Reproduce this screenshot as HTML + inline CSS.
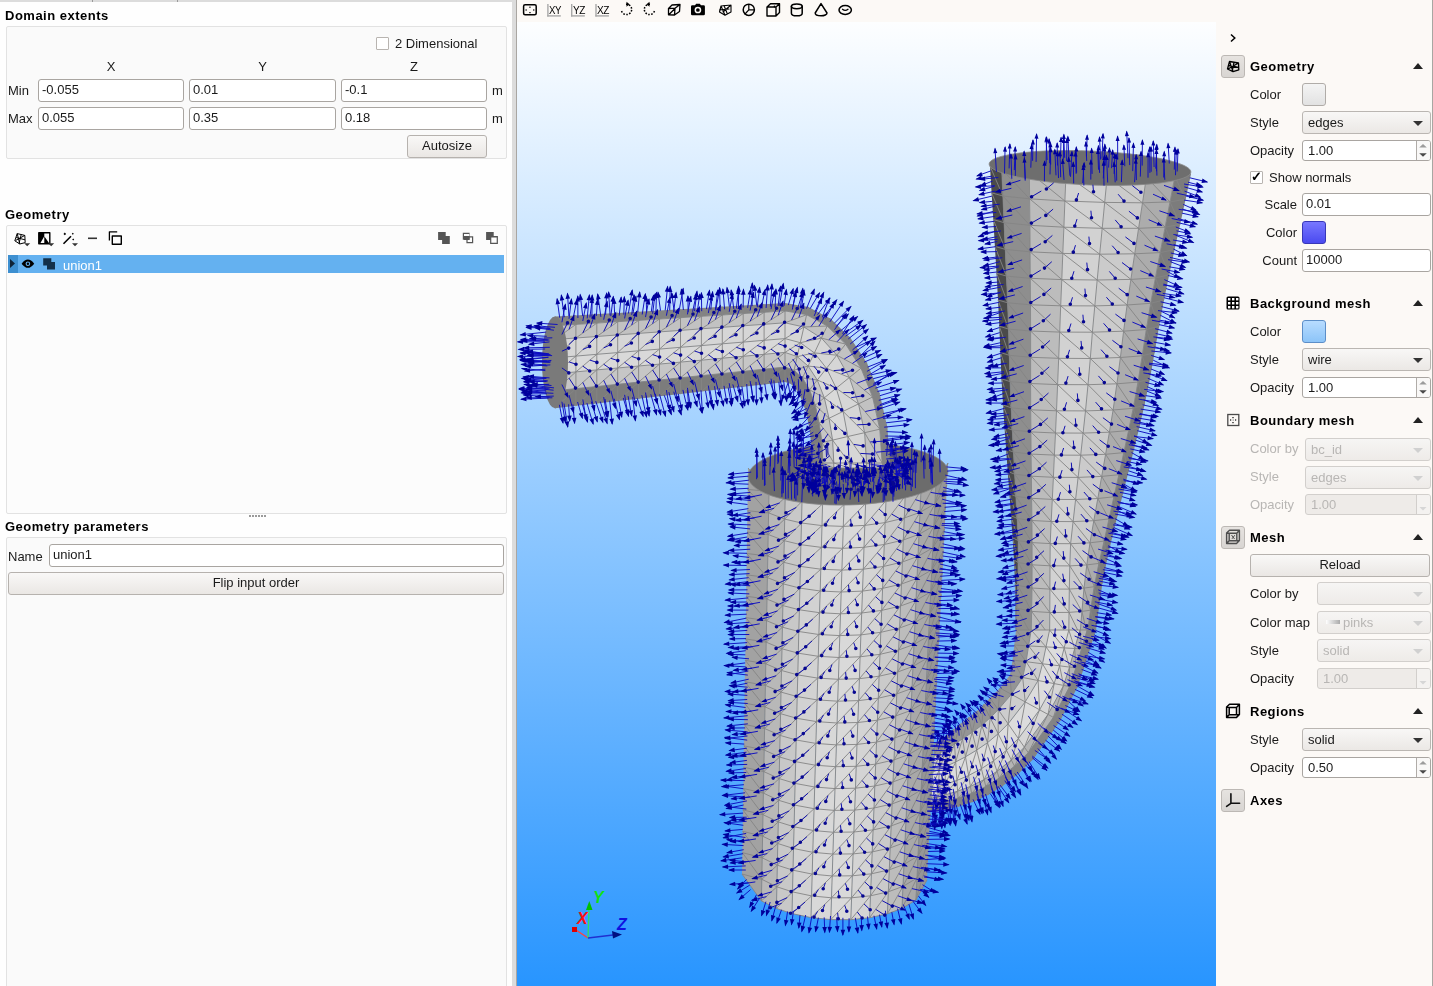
<!DOCTYPE html>
<html><head><meta charset="utf-8"><style>*{margin:0;padding:0;box-sizing:border-box}
html,body{width:1433px;height:986px;overflow:hidden;background:#fefefe;font-family:"Liberation Sans",sans-serif;font-size:13px;color:#1a1a1a}
#left{position:absolute;left:0;top:0;width:512px;height:986px;background:#fefefe}
.tabstrip{position:absolute;left:0;top:0;width:512px;height:2px;background:#dcdcdc}
.tabdiv{position:absolute;top:0;width:1px;height:2px;background:#9a9a9a}
#splitter{position:absolute;left:512px;top:0;width:4px;height:986px;background:#dcdcdc;border-right:1px solid #a9a6a2;width:5px}
.t{position:absolute;white-space:pre;line-height:15px;font-size:13px}
.bold{font-weight:700;letter-spacing:0.5px;color:#000}
.c{text-align:center}
.r{text-align:right}
.gbox{position:absolute;border:1px solid #e2e2e2;border-radius:2px;background:#fafafa}
.inp{position:absolute;border:1px solid #a9a5a1;border-radius:3px;background:#fff;padding:2px 0 0 3px;line-height:15px;white-space:pre;height:23px}
.btn{position:absolute;border:1px solid #b6b2ae;border-radius:3px;background:linear-gradient(#f9f8f7,#eae7e4);text-align:center;line-height:19px;white-space:pre;height:23px}
.chk{position:absolute;width:13px;height:13px;border:1px solid #b8b4b0;border-radius:1px;background:#fff}
.tick{position:absolute;left:0px;top:-3px;font-size:13px;font-weight:700;color:#000}
.selrow{position:absolute;background:#64b1f0}
.selexp{position:absolute;background:#3d8fd0}
.splitdots{position:absolute;width:18px;height:1px;border-top:1px dotted #b0b0b0}
#toolbar{position:absolute;left:517px;top:0;width:699px;height:22px;background:#fcf9f6}
#view{position:absolute;left:517px;top:22px;width:699px;height:964px;background:linear-gradient(#fdfeff,#2895ff);overflow:hidden}
#rightbg{position:absolute;left:1216px;top:0;width:217px;height:986px;background:#fcf9f6}
#right .t,#right .bold{}
.chev{position:absolute;font-size:16px;line-height:16px;color:#222}
.ibtn{position:absolute;width:24px;height:23px;border:1px solid #bcb8b4;border-radius:3px;background:linear-gradient(#e6e3e0,#d8d5d2)}
.tri{position:absolute;width:0;height:0;border-left:5px solid transparent;border-right:5px solid transparent;border-bottom:6px solid #222}
.swatch{position:absolute;width:24px;height:23px;border:1px solid #b0aca8;border-radius:3px}
.combo{position:absolute;height:23px;border:1px solid #bab6b2;border-radius:3px;background:linear-gradient(#f8f7f6,#ebe8e5);padding:2px 0 0 5px;line-height:17px;white-space:pre}
.combo:after{content:"";position:absolute;right:7px;top:9px;border-left:5px solid transparent;border-right:5px solid transparent;border-top:5px solid #333}
.spin{position:absolute;height:21px;border:1px solid #a9a5a1;border-radius:3px;background:#fff;padding:2px 0 0 5px;line-height:15px;white-space:pre}
.spin:before{content:"";position:absolute;right:13px;top:0;width:1px;height:19px;background:#b0aca8}
.spin:after{content:"";position:absolute;right:0;top:0;width:13px;height:19px;background:#f9f8f7;border-radius:0 2px 2px 0}
.dis{color:#b8b6b4}
.combo.dis{border-color:#d2cfcc;background:linear-gradient(#f6f5f4,#eeebe8)}
.combo.dis:after{border-top-color:#d0d0d0}
.spin.dis{background:#eeebe8;border-color:#d2cfcc}
.spin.dis:after{background:#f4f2f0}
.spin.dis:before{background:#d2cfcc}
.t.dis{color:#b8b6b4}
.cmap{display:inline-block;width:14px;height:4px;background:linear-gradient(90deg,#fff,#aaa);margin:0 3px 3px 3px;vertical-align:middle}
.rline{position:absolute;left:1216px;top:0;width:1px;height:986px}
#rborder{position:absolute;left:1432px;top:0;width:1px;height:986px;background:#a8a6a2}

#left,#rightc{will-change:transform}
#rightc{position:absolute;left:0;top:0;width:0;height:0}
</style></head>
<body>
<div id="left">
  <div class="tabstrip"></div>
  <div class="tabdiv" style="left:92px"></div>
  <div class="tabdiv" style="left:177px"></div>
  <div class="bold t" style="left:5px;top:8px">Domain extents</div>
  <div class="gbox" style="left:6px;top:26px;width:501px;height:133px"></div>
  <div class="chk" style="left:376px;top:37px"></div>
  <div class="t" style="left:395px;top:36px">2 Dimensional</div>
  <div class="t c" style="left:38px;top:59px;width:146px">X</div>
  <div class="t c" style="left:189px;top:59px;width:147px">Y</div>
  <div class="t c" style="left:341px;top:59px;width:146px">Z</div>
  <div class="t" style="left:8px;top:83px">Min</div>
  <div class="t" style="left:8px;top:111px">Max</div>
  <div class="inp" style="left:38px;top:79px;width:146px;">-0.055</div>
  <div class="inp" style="left:189px;top:79px;width:147px;">0.01</div>
  <div class="inp" style="left:341px;top:79px;width:146px;">-0.1</div>
  <div class="inp" style="left:38px;top:107px;width:146px;">0.055</div>
  <div class="inp" style="left:189px;top:107px;width:147px;">0.35</div>
  <div class="inp" style="left:341px;top:107px;width:146px;">0.18</div>
  <div class="t" style="left:492px;top:83px">m</div>
  <div class="t" style="left:492px;top:111px">m</div>
  <div class="btn" style="left:407px;top:135px;width:80px;">Autosize</div>

  <div class="bold t" style="left:5px;top:207px">Geometry</div>
  <div class="gbox" style="left:6px;top:225px;width:501px;height:289px;background:#fcfcfc"></div>
  <div id="geoicons"></div>
  <div class="selrow" style="left:8px;top:255px;width:496px;height:18px"></div>
  <div class="selexp" style="left:8px;top:255px;width:10px;height:18px"></div>
  <div class="t" style="left:63px;top:258px;color:#fff">union1</div>
  <div style="position:absolute;left:249px;top:515px;width:1.5px;height:1.5px;background:#9a9a9a"></div><div style="position:absolute;left:252px;top:515px;width:1.5px;height:1.5px;background:#9a9a9a"></div><div style="position:absolute;left:255px;top:515px;width:1.5px;height:1.5px;background:#9a9a9a"></div><div style="position:absolute;left:258px;top:515px;width:1.5px;height:1.5px;background:#9a9a9a"></div><div style="position:absolute;left:261px;top:515px;width:1.5px;height:1.5px;background:#9a9a9a"></div><div style="position:absolute;left:264px;top:515px;width:1.5px;height:1.5px;background:#9a9a9a"></div>

  <div class="bold t" style="left:5px;top:519px">Geometry parameters</div>
  <div class="gbox" style="left:6px;top:537px;width:501px;height:460px"></div>
  <div class="t" style="left:8px;top:549px">Name</div>
  <div class="inp" style="left:49px;top:544px;width:455px;">union1</div>
  <div class="btn" style="left:8px;top:572px;width:496px;">Flip input order</div>
</div>
<div id="splitter"></div>

<div id="toolbar"></div>
<svg style="position:absolute;left:0;top:0" width="1433" height="22" viewBox="0 0 1433 22">
<g fill="none" stroke="#000" stroke-width="1.5" stroke-linejoin="round" stroke-linecap="round">
  <rect x="523.6" y="4.8" width="12.6" height="10" rx="1.5"/>
  <!-- rotate ccw -->
  <path d="M626 4.2 A5.2 5.2 0 1 1 621.3 10" stroke-dasharray="1.6 1.4" stroke-linecap="butt"/>
  <path d="M650 4.2 A5.2 5.2 0 1 0 654.7 10" stroke-dasharray="1.6 1.4" stroke-linecap="butt"/>
  <!-- perspective cube -->
  <path d="M668.5 8.5 L672 5 L680 4.5 L679.5 11.5 L674.5 15 L668.5 14.8 Z M668.5 8.5 L675 8.2 L680 4.5 M675 8.2 L674.5 15 M669 14.5 L675 8.5" stroke-width="1.3"/>
  <!-- wire poly -->
  <path d="M721 6 L731 5 L731 12 L725 15.2 L719.5 12 Z M721 6 L725 15.2 M731 5 L723 12 M719.5 10 L729 9 M724 5.5 L727 13" stroke-width="1.1"/>
  <!-- sphere -->
  <circle cx="748.8" cy="9.8" r="5.6"/>
  <path d="M748.8 4.5 L748.8 9.8 L754 9.8 M748.8 9.8 L745 14" stroke-width="1.2"/>
  <!-- box -->
  <path d="M767 7 L770.5 3.8 L779.5 3.8 L779.5 12.5 L776 16 L767 16 Z M767 7 L776 7 L779.5 3.8 M776 7 L776 16" stroke-width="1.4"/>
  <!-- cylinder -->
  <ellipse cx="796.8" cy="6.3" rx="5.4" ry="2.4"/>
  <path d="M791.4 6.3 L791.4 13.2 A5.4 2.6 0 0 0 802.2 13.2 L802.2 6.3"/>
  <!-- cone -->
  <path d="M821 3.6 L815.2 13 A5.9 2.8 0 0 0 827 13 Z" />
  <!-- torus -->
  <ellipse cx="845.2" cy="10" rx="6.2" ry="4.4"/>
  <path d="M842.5 9.3 Q845.2 11.6 848 9.3" stroke-width="1.3"/>
</g>
<g fill="#000">
  <rect x="529.3" y="6.6" width="1.3" height="1.2"/><rect x="529.3" y="12" width="1.3" height="1.2"/>
  <rect x="525.6" y="9.2" width="1" height="1.6"/><rect x="533.3" y="9.2" width="1" height="1.6"/>
  <path d="M626.5 1.8 L629.5 4.3 L626.5 6.8 Z"/>
  <path d="M649.5 1.8 L646.5 4.3 L649.5 6.8 Z"/>
  <path d="M691 6.5 Q691 5.2 692.3 5.2 L695 5.2 L696.2 3.8 L699.8 3.8 L701 5.2 L703.6 5.2 Q704.9 5.2 704.9 6.5 L704.9 14 Q704.9 15.2 703.6 15.2 L692.3 15.2 Q691 15.2 691 14 Z"/>
  <circle cx="774.5" cy="6.5" r="0.9"/>
</g>
<circle cx="697.9" cy="10" r="2.6" fill="none" stroke="#fcf9f6" stroke-width="1.5"/>
<g fill="#a8a8a8">
  <rect x="547.2" y="4" width="1.4" height="12.5"/><rect x="547.2" y="15.2" width="13.6" height="1.4"/>
  <rect x="571" y="4" width="1.4" height="12.5"/><rect x="571" y="15.2" width="13.8" height="1.4"/>
  <rect x="595.3" y="4" width="1.4" height="12.5"/><rect x="595.3" y="15.2" width="13.6" height="1.4"/>
</g>
<g font-family="Liberation Sans" font-size="11" fill="#000" style="letter-spacing:-0.6px">
  <text x="549" y="13.8" textLength="11.8" lengthAdjust="spacingAndGlyphs">XY</text>
  <text x="573" y="13.8" textLength="11.8" lengthAdjust="spacingAndGlyphs">YZ</text>
  <text x="597" y="13.8" textLength="11.8" lengthAdjust="spacingAndGlyphs">XZ</text>
</g>
</svg>

<div id="view"><svg width="699" height="964" viewBox="517 22 699 964" style="position:absolute;left:0;top:0"><path d="M990,166 991.6,192.8 993.3,219.6 994.9,246.4 996.5,273.2 998,300 999.3,326.2 1000.4,352.5 1001.5,378.8 1003,405 1004.5,427.2 1006.1,449.3 1007.7,471.4 1009.4,493.6 1011,515.7 1012.6,537.8 1014,560 1015.1,583.3 1015.6,606.7 1016,630 1016,630 1016.9,608.1 1017.8,585.4 1018.2,562.5 1018.3,540.6 1017.2,518.5 1015.9,496.4 1014.7,474.2 1013.5,452.1 1012.3,430 1011.2,407.8 1010.1,381.6 1009.3,355.3 1008.6,329.1 1007.6,302.8 1006.5,276.1 1005.3,249.4 1004.1,222.7 1002.9,196 1001.7,169.3Z" fill="#4a4a4a"/><path d="M1001.7,169.3 1002.9,196 1004.1,222.7 1005.3,249.4 1006.5,276.1 1007.6,302.8 1008.6,329.1 1009.3,355.3 1010.1,381.6 1011.2,407.8 1012.3,430 1013.5,452.1 1014.7,474.2 1015.9,496.4 1017.2,518.5 1018.3,540.6 1018.2,562.5 1017.8,585.4 1016.9,608.1 1016,630 1031.2,634.7 1031.6,611.4 1032,588 1032.1,564.8 1032.1,542.6 1031.9,520.5 1031.6,498.3 1031.4,476.2 1031.1,454.1 1030.9,431.9 1030.7,409.8 1030.6,383.5 1030.6,357.3 1030.6,331 1030.5,304.8 1030.3,278.3 1030.1,251.8 1029.9,225.3 1029.6,198.8 1029.4,172.3Z" fill="#8e8e8e"/><path d="M1029.4,172.3 1029.6,198.8 1029.9,225.3 1030.1,251.8 1030.3,278.3 1030.5,304.8 1030.6,331 1030.6,357.3 1030.6,383.5 1030.7,409.8 1030.9,431.9 1031.1,454.1 1031.4,476.2 1031.6,498.3 1031.9,520.5 1032.1,542.6 1032.1,564.8 1032,588 1031.6,611.4 1031.2,634.7 1049.6,635.9 1049.8,612.5 1049.9,589.1 1050,565.8 1050.2,543.6 1051.2,521.5 1052.3,499.4 1053.4,477.3 1054.4,455.1 1055.5,433 1056.5,410.8 1057.6,384.6 1058.7,358.3 1059.7,332.1 1060.7,305.8 1061.8,279.6 1062.8,253.4 1063.9,227.2 1064.9,201 1066,174.8Z" fill="#bcbcbc"/><path d="M1066,174.8 1064.9,201 1063.9,227.2 1062.8,253.4 1061.8,279.6 1060.7,305.8 1059.7,332.1 1058.7,358.3 1057.6,384.6 1056.5,410.8 1055.5,433 1054.4,455.1 1053.4,477.3 1052.3,499.4 1051.2,521.5 1050.2,543.6 1050,565.8 1049.9,589.1 1049.8,612.5 1049.6,635.9 1068.8,635.7 1069,612.4 1069.3,589.1 1069.8,565.9 1070.6,543.7 1073.1,521.6 1075.6,499.5 1078.1,477.4 1080.7,455.2 1083.1,433.1 1085.5,410.9 1088,384.7 1090.3,358.5 1092.4,332.2 1094.8,305.9 1097.2,280 1099.7,254.2 1102.2,228.3 1104.7,202.4 1107.2,176.6Z" fill="#d2d2d2"/><path d="M1107.2,176.6 1104.7,202.4 1102.2,228.3 1099.7,254.2 1097.2,280 1094.8,305.9 1092.4,332.2 1090.3,358.5 1088,384.7 1085.5,410.9 1083.1,433.1 1080.7,455.2 1078.1,477.4 1075.6,499.5 1073.1,521.6 1070.6,543.7 1069.8,565.9 1069.3,589.1 1069,612.4 1068.8,635.7 1080,634.8 1081.9,611.4 1084,588.1 1086.8,564.9 1090,542.8 1093.8,520.7 1097.8,498.5 1101.7,476.4 1105.6,454.3 1109.4,432.2 1113.1,410 1116.9,383.8 1120.4,357.5 1123.6,331.2 1127.1,305 1130.9,279.4 1134.7,253.8 1138.6,228.3 1142.5,202.8 1146.4,177.2Z" fill="#cbcbcb"/><path d="M1146.4,177.2 1142.5,202.8 1138.6,228.3 1134.7,253.8 1130.9,279.4 1127.1,305 1123.6,331.2 1120.4,357.5 1116.9,383.8 1113.1,410 1109.4,432.2 1105.6,454.3 1101.7,476.4 1097.8,498.5 1093.8,520.7 1090,542.8 1086.8,564.9 1084,588.1 1081.9,611.4 1080,634.8 1087.2,633.8 1090.5,610.2 1094.2,586.7 1098.9,563.4 1104.1,541.1 1109,518.9 1113.9,496.8 1118.9,474.7 1123.8,452.6 1128.6,430.5 1133.2,408.3 1138,382.1 1142.2,355.8 1146.3,329.5 1150.7,303.3 1155.4,277.9 1160.2,252.6 1165.1,227.2 1170,201.9 1174.9,176.6Z" fill="#acacac"/><path d="M1174.9,176.6 1170,201.9 1165.1,227.2 1160.2,252.6 1155.4,277.9 1150.7,303.3 1146.3,329.5 1142.2,355.8 1138,382.1 1133.2,408.3 1128.6,430.5 1123.8,452.6 1118.9,474.7 1113.9,496.8 1109,518.9 1104.1,541.1 1098.9,563.4 1094.2,586.7 1090.5,610.2 1087.2,633.8 1096,630 1099.1,606.6 1102.4,583.2 1107,560 1112.1,537.8 1117.5,515.7 1123,493.6 1128.5,471.5 1134,449.3 1139.4,427.2 1144.5,405 1149.9,378.8 1154.6,352.6 1159.1,326.2 1164,300 1169.2,274.8 1174.6,249.6 1180.1,224.4 1185.6,199.2 1191,174Z" fill="#7c7c7c"/><path d="M1001.7,169.3 1002.9,196 1004.1,222.7 1005.3,249.4 1006.5,276.1 1007.6,302.8 1008.6,329.1 1009.3,355.3 1010.1,381.6 1011.2,407.8 1012.3,430 1013.5,452.1 1014.7,474.2 1015.9,496.4 1017.2,518.5 1018.3,540.6 1018.2,562.5 1017.8,585.4 1016.9,608.1 1016,630 M1029.4,172.3 1029.6,198.8 1029.9,225.3 1030.1,251.8 1030.3,278.3 1030.5,304.8 1030.6,331 1030.6,357.3 1030.6,383.5 1030.7,409.8 1030.9,431.9 1031.1,454.1 1031.4,476.2 1031.6,498.3 1031.9,520.5 1032.1,542.6 1032.1,564.8 1032,588 1031.6,611.4 1031.2,634.7 M1066,174.8 1064.9,201 1063.9,227.2 1062.8,253.4 1061.8,279.6 1060.7,305.8 1059.7,332.1 1058.7,358.3 1057.6,384.6 1056.5,410.8 1055.5,433 1054.4,455.1 1053.4,477.3 1052.3,499.4 1051.2,521.5 1050.2,543.6 1050,565.8 1049.9,589.1 1049.8,612.5 1049.6,635.9 M1107.2,176.6 1104.7,202.4 1102.2,228.3 1099.7,254.2 1097.2,280 1094.8,305.9 1092.4,332.2 1090.3,358.5 1088,384.7 1085.5,410.9 1083.1,433.1 1080.7,455.2 1078.1,477.4 1075.6,499.5 1073.1,521.6 1070.6,543.7 1069.8,565.9 1069.3,589.1 1069,612.4 1068.8,635.7 M1146.4,177.2 1142.5,202.8 1138.6,228.3 1134.7,253.8 1130.9,279.4 1127.1,305 1123.6,331.2 1120.4,357.5 1116.9,383.8 1113.1,410 1109.4,432.2 1105.6,454.3 1101.7,476.4 1097.8,498.5 1093.8,520.7 1090,542.8 1086.8,564.9 1084,588.1 1081.9,611.4 1080,634.8 M1174.9,176.6 1170,201.9 1165.1,227.2 1160.2,252.6 1155.4,277.9 1150.7,303.3 1146.3,329.5 1142.2,355.8 1138,382.1 1133.2,408.3 1128.6,430.5 1123.8,452.6 1118.9,474.7 1113.9,496.8 1109,518.9 1104.1,541.1 1098.9,563.4 1094.2,586.7 1090.5,610.2 1087.2,633.8 M990,166 1001.7,169.3 1029.4,172.3 1066,174.8 1107.2,176.6 1146.4,177.2 1174.9,176.6 1191,174 M991.6,192.8 1002.9,196 1029.6,198.8 1064.9,201 1104.7,202.4 1142.5,202.8 1170,201.9 1185.6,199.2 M993.3,219.6 1004.1,222.7 1029.9,225.3 1063.9,227.2 1102.2,228.3 1138.6,228.3 1165.1,227.2 1180.1,224.4 M994.9,246.4 1005.3,249.4 1030.1,251.8 1062.8,253.4 1099.7,254.2 1134.7,253.8 1160.2,252.6 1174.6,249.6 M996.5,273.2 1006.5,276.1 1030.3,278.3 1061.8,279.6 1097.2,280 1130.9,279.4 1155.4,277.9 1169.2,274.8 M998,300 1007.6,302.8 1030.5,304.8 1060.7,305.8 1094.8,305.9 1127.1,305 1150.7,303.3 1164,300 M999.3,326.2 1008.6,329.1 1030.6,331 1059.7,332.1 1092.4,332.2 1123.6,331.2 1146.3,329.5 1159.1,326.2 M1000.4,352.5 1009.3,355.3 1030.6,357.3 1058.7,358.3 1090.3,358.5 1120.4,357.5 1142.2,355.8 1154.6,352.6 M1001.5,378.8 1010.1,381.6 1030.6,383.5 1057.6,384.6 1088,384.7 1116.9,383.8 1138,382.1 1149.9,378.8 M1003,405 1011.2,407.8 1030.7,409.8 1056.5,410.8 1085.5,410.9 1113.1,410 1133.2,408.3 1144.5,405 M1004.5,427.2 1012.3,430 1030.9,431.9 1055.5,433 1083.1,433.1 1109.4,432.2 1128.6,430.5 1139.4,427.2 M1006.1,449.3 1013.5,452.1 1031.1,454.1 1054.4,455.1 1080.7,455.2 1105.6,454.3 1123.8,452.6 1134,449.3 M1007.7,471.4 1014.7,474.2 1031.4,476.2 1053.4,477.3 1078.1,477.4 1101.7,476.4 1118.9,474.7 1128.5,471.5 M1009.4,493.6 1015.9,496.4 1031.6,498.3 1052.3,499.4 1075.6,499.5 1097.8,498.5 1113.9,496.8 1123,493.6 M1011,515.7 1017.2,518.5 1031.9,520.5 1051.2,521.5 1073.1,521.6 1093.8,520.7 1109,518.9 1117.5,515.7 M1012.6,537.8 1018.3,540.6 1032.1,542.6 1050.2,543.6 1070.6,543.7 1090,542.8 1104.1,541.1 1112.1,537.8 M1014,560 1018.2,562.5 1032.1,564.8 1050,565.8 1069.8,565.9 1086.8,564.9 1098.9,563.4 1107,560 M1015.1,583.3 1017.8,585.4 1032,588 1049.9,589.1 1069.3,589.1 1084,588.1 1094.2,586.7 1102.4,583.2 M1015.6,606.7 1016.9,608.1 1031.6,611.4 1049.8,612.5 1069,612.4 1081.9,611.4 1090.5,610.2 1099.1,606.6 M1016,630 1016,630 1031.2,634.7 1049.6,635.9 1068.8,635.7 1080,634.8 1087.2,633.8 1096,630 M990,166 1002.9,196 M1001.7,169.3 1029.6,198.8 M1029.4,172.3 1064.9,201 M1066,174.8 1104.7,202.4 M1107.2,176.6 1142.5,202.8 M1146.4,177.2 1170,201.9 M1174.9,176.6 1185.6,199.2 M991.6,192.8 1004.1,222.7 M1002.9,196 1029.9,225.3 M1029.6,198.8 1063.9,227.2 M1064.9,201 1102.2,228.3 M1104.7,202.4 1138.6,228.3 M1142.5,202.8 1165.1,227.2 M1170,201.9 1180.1,224.4 M993.3,219.6 1005.3,249.4 M1004.1,222.7 1030.1,251.8 M1029.9,225.3 1062.8,253.4 M1063.9,227.2 1099.7,254.2 M1102.2,228.3 1134.7,253.8 M1138.6,228.3 1160.2,252.6 M1165.1,227.2 1174.6,249.6 M994.9,246.4 1006.5,276.1 M1005.3,249.4 1030.3,278.3 M1030.1,251.8 1061.8,279.6 M1062.8,253.4 1097.2,280 M1099.7,254.2 1130.9,279.4 M1134.7,253.8 1155.4,277.9 M1160.2,252.6 1169.2,274.8 M996.5,273.2 1007.6,302.8 M1006.5,276.1 1030.5,304.8 M1030.3,278.3 1060.7,305.8 M1061.8,279.6 1094.8,305.9 M1097.2,280 1127.1,305 M1130.9,279.4 1150.7,303.3 M1155.4,277.9 1164,300 M998,300 1008.6,329.1 M1007.6,302.8 1030.6,331 M1030.5,304.8 1059.7,332.1 M1060.7,305.8 1092.4,332.2 M1094.8,305.9 1123.6,331.2 M1127.1,305 1146.3,329.5 M1150.7,303.3 1159.1,326.2 M999.3,326.2 1009.3,355.3 M1008.6,329.1 1030.6,357.3 M1030.6,331 1058.7,358.3 M1059.7,332.1 1090.3,358.5 M1092.4,332.2 1120.4,357.5 M1123.6,331.2 1142.2,355.8 M1146.3,329.5 1154.6,352.6 M1000.4,352.5 1010.1,381.6 M1009.3,355.3 1030.6,383.5 M1030.6,357.3 1057.6,384.6 M1058.7,358.3 1088,384.7 M1090.3,358.5 1116.9,383.8 M1120.4,357.5 1138,382.1 M1142.2,355.8 1149.9,378.8 M1001.5,378.8 1011.2,407.8 M1010.1,381.6 1030.7,409.8 M1030.6,383.5 1056.5,410.8 M1057.6,384.6 1085.5,410.9 M1088,384.7 1113.1,410 M1116.9,383.8 1133.2,408.3 M1138,382.1 1144.5,405 M1003,405 1012.3,430 M1011.2,407.8 1030.9,431.9 M1030.7,409.8 1055.5,433 M1056.5,410.8 1083.1,433.1 M1085.5,410.9 1109.4,432.2 M1113.1,410 1128.6,430.5 M1133.2,408.3 1139.4,427.2 M1004.5,427.2 1013.5,452.1 M1012.3,430 1031.1,454.1 M1030.9,431.9 1054.4,455.1 M1055.5,433 1080.7,455.2 M1083.1,433.1 1105.6,454.3 M1109.4,432.2 1123.8,452.6 M1128.6,430.5 1134,449.3 M1006.1,449.3 1014.7,474.2 M1013.5,452.1 1031.4,476.2 M1031.1,454.1 1053.4,477.3 M1054.4,455.1 1078.1,477.4 M1080.7,455.2 1101.7,476.4 M1105.6,454.3 1118.9,474.7 M1123.8,452.6 1128.5,471.5 M1007.7,471.4 1015.9,496.4 M1014.7,474.2 1031.6,498.3 M1031.4,476.2 1052.3,499.4 M1053.4,477.3 1075.6,499.5 M1078.1,477.4 1097.8,498.5 M1101.7,476.4 1113.9,496.8 M1118.9,474.7 1123,493.6 M1009.4,493.6 1017.2,518.5 M1015.9,496.4 1031.9,520.5 M1031.6,498.3 1051.2,521.5 M1052.3,499.4 1073.1,521.6 M1075.6,499.5 1093.8,520.7 M1097.8,498.5 1109,518.9 M1113.9,496.8 1117.5,515.7 M1011,515.7 1018.3,540.6 M1017.2,518.5 1032.1,542.6 M1031.9,520.5 1050.2,543.6 M1051.2,521.5 1070.6,543.7 M1073.1,521.6 1090,542.8 M1093.8,520.7 1104.1,541.1 M1109,518.9 1112.1,537.8 M1012.6,537.8 1018.2,562.5 M1018.3,540.6 1032.1,564.8 M1032.1,542.6 1050,565.8 M1050.2,543.6 1069.8,565.9 M1070.6,543.7 1086.8,564.9 M1090,542.8 1098.9,563.4 M1104.1,541.1 1107,560 M1014,560 1017.8,585.4 M1018.2,562.5 1032,588 M1032.1,564.8 1049.9,589.1 M1050,565.8 1069.3,589.1 M1069.8,565.9 1084,588.1 M1086.8,564.9 1094.2,586.7 M1098.9,563.4 1102.4,583.2 M1015.1,583.3 1016.9,608.1 M1017.8,585.4 1031.6,611.4 M1032,588 1049.8,612.5 M1049.9,589.1 1069,612.4 M1069.3,589.1 1081.9,611.4 M1084,588.1 1090.5,610.2 M1094.2,586.7 1099.1,606.6 M1015.6,606.7 1016,630 M1016.9,608.1 1031.2,634.7 M1031.6,611.4 1049.6,635.9 M1049.8,612.5 1068.8,635.7 M1069,612.4 1080,634.8 M1081.9,611.4 1087.2,633.8 M1090.5,610.2 1096,630" fill="none" stroke="#858585" stroke-width="0.9"/><path d="M1016,630 1014.3,645 1012.6,660.1 1010,675 1000,688 990,698 983.6,704.6 977,711 968.6,717.6 960,724 953.5,729.5 947,735 941.1,739.1 935,743 934,756.1 940.3,752.8 946.4,749.2 954.5,744.2 962.5,738.8 972.2,732.3 981.8,725.3 990.2,717.8 998.2,709.7 1011.4,694.3 1022.7,677.5 1026.1,661.7 1028.6,645.9 1031.2,630Z" fill="#959595"/><path d="M1031.2,630 1028.6,645.9 1026.1,661.7 1022.7,677.5 1011.4,694.3 998.2,709.7 990.2,717.8 981.8,725.3 972.2,732.3 962.5,738.8 954.5,744.2 946.4,749.2 940.3,752.8 934,756.1 932.9,772 939.4,769.4 945.7,766.5 955.7,761.9 965.5,756.8 976.7,750.1 987.5,742.7 998.2,733.7 1008.1,723.8 1025.2,701.9 1038.1,680.5 1042.5,663.8 1046,646.9 1049.6,630Z" fill="#cdcdcd"/><path d="M1049.6,630 1046,646.9 1042.5,663.8 1038.1,680.5 1025.2,701.9 1008.1,723.8 998.2,733.7 987.5,742.7 976.7,750.1 965.5,756.8 955.7,761.9 945.7,766.5 939.4,769.4 932.9,772 931.7,788.5 938.4,786.7 945,784.5 956.9,780.4 968.6,775.5 981.4,768.7 993.5,760.8 1006.5,750.3 1018.4,738.6 1039.6,709.8 1054.2,683.6 1059.6,665.8 1064.2,647.9 1068.8,630Z" fill="#dcdcdc"/><path d="M1068.8,630 1064.2,647.9 1059.6,665.8 1054.2,683.6 1039.6,709.8 1018.4,738.6 1006.5,750.3 993.5,760.8 981.4,768.7 968.6,775.5 956.9,780.4 945,784.5 938.4,786.7 931.7,788.5 931,798.2 937.8,796.8 944.6,795 957.6,791.2 970.4,786.4 984.1,779.6 997,771.3 1011.3,760 1024.4,747.2 1048,714.4 1063.6,685.4 1069.5,667.1 1074.7,648.5 1080,630Z" fill="#d6d6d6"/><path d="M1080,630 1074.7,648.5 1069.5,667.1 1063.6,685.4 1048,714.4 1024.4,747.2 1011.3,760 997,771.3 984.1,779.6 970.4,786.4 957.6,791.2 944.6,795 937.8,796.8 931,798.2 930.5,804.4 937.5,803.3 944.3,801.8 958.1,798.1 971.6,793.4 985.8,786.5 999.2,778.1 1014.5,766.2 1028.3,752.7 1053.4,717.4 1069.6,686.6 1075.9,667.8 1081.5,648.9 1087.2,630Z" fill="#b4b4b4"/><path d="M1087.2,630 1081.5,648.9 1075.9,667.8 1069.6,686.6 1053.4,717.4 1028.3,752.7 1014.5,766.2 999.2,778.1 985.8,786.5 971.6,793.4 958.1,798.1 944.3,801.8 937.5,803.3 930.5,804.4 930,812 937,811.3 944,810 958.7,806.6 973,802 988,795.1 1002,786.4 1018.3,773.8 1033,759.5 1060,721 1077,688 1083.7,668.8 1089.9,649.4 1096,630Z" fill="#838383"/><path d="M1031.2,630 1028.6,645.9 1026.1,661.7 1022.7,677.5 1011.4,694.3 998.2,709.7 990.2,717.8 981.8,725.3 972.2,732.3 962.5,738.8 954.5,744.2 946.4,749.2 940.3,752.8 934,756.1 M1049.6,630 1046,646.9 1042.5,663.8 1038.1,680.5 1025.2,701.9 1008.1,723.8 998.2,733.7 987.5,742.7 976.7,750.1 965.5,756.8 955.7,761.9 945.7,766.5 939.4,769.4 932.9,772 M1068.8,630 1064.2,647.9 1059.6,665.8 1054.2,683.6 1039.6,709.8 1018.4,738.6 1006.5,750.3 993.5,760.8 981.4,768.7 968.6,775.5 956.9,780.4 945,784.5 938.4,786.7 931.7,788.5 M1080,630 1074.7,648.5 1069.5,667.1 1063.6,685.4 1048,714.4 1024.4,747.2 1011.3,760 997,771.3 984.1,779.6 970.4,786.4 957.6,791.2 944.6,795 937.8,796.8 931,798.2 M1087.2,630 1081.5,648.9 1075.9,667.8 1069.6,686.6 1053.4,717.4 1028.3,752.7 1014.5,766.2 999.2,778.1 985.8,786.5 971.6,793.4 958.1,798.1 944.3,801.8 937.5,803.3 930.5,804.4 M1016,630 1031.2,630 1049.6,630 1068.8,630 1080,630 1087.2,630 1096,630 M1014.3,645 1028.6,645.9 1046,646.9 1064.2,647.9 1074.7,648.5 1081.5,648.9 1089.9,649.4 M1012.6,660.1 1026.1,661.7 1042.5,663.8 1059.6,665.8 1069.5,667.1 1075.9,667.8 1083.7,668.8 M1010,675 1022.7,677.5 1038.1,680.5 1054.2,683.6 1063.6,685.4 1069.6,686.6 1077,688 M1000,688 1011.4,694.3 1025.2,701.9 1039.6,709.8 1048,714.4 1053.4,717.4 1060,721 M990,698 998.2,709.7 1008.1,723.8 1018.4,738.6 1024.4,747.2 1028.3,752.7 1033,759.5 M983.6,704.6 990.2,717.8 998.2,733.7 1006.5,750.3 1011.3,760 1014.5,766.2 1018.3,773.8 M977,711 981.8,725.3 987.5,742.7 993.5,760.8 997,771.3 999.2,778.1 1002,786.4 M968.6,717.6 972.2,732.3 976.7,750.1 981.4,768.7 984.1,779.6 985.8,786.5 988,795.1 M960,724 962.5,738.8 965.5,756.8 968.6,775.5 970.4,786.4 971.6,793.4 973,802 M953.5,729.5 954.5,744.2 955.7,761.9 956.9,780.4 957.6,791.2 958.1,798.1 958.7,806.6 M947,735 946.4,749.2 945.7,766.5 945,784.5 944.6,795 944.3,801.8 944,810 M941.1,739.1 940.3,752.8 939.4,769.4 938.4,786.7 937.8,796.8 937.5,803.3 937,811.3 M935,743 934,756.1 932.9,772 931.7,788.5 931,798.2 930.5,804.4 930,812 M1016,630 1028.6,645.9 M1031.2,630 1046,646.9 M1049.6,630 1064.2,647.9 M1068.8,630 1074.7,648.5 M1080,630 1081.5,648.9 M1087.2,630 1089.9,649.4 M1014.3,645 1026.1,661.7 M1028.6,645.9 1042.5,663.8 M1046,646.9 1059.6,665.8 M1064.2,647.9 1069.5,667.1 M1074.7,648.5 1075.9,667.8 M1081.5,648.9 1083.7,668.8 M1012.6,660.1 1022.7,677.5 M1026.1,661.7 1038.1,680.5 M1042.5,663.8 1054.2,683.6 M1059.6,665.8 1063.6,685.4 M1069.5,667.1 1069.6,686.6 M1075.9,667.8 1077,688 M1010,675 1011.4,694.3 M1022.7,677.5 1025.2,701.9 M1038.1,680.5 1039.6,709.8 M1054.2,683.6 1048,714.4 M1063.6,685.4 1053.4,717.4 M1069.6,686.6 1060,721 M1000,688 998.2,709.7 M1011.4,694.3 1008.1,723.8 M1025.2,701.9 1018.4,738.6 M1039.6,709.8 1024.4,747.2 M1048,714.4 1028.3,752.7 M1053.4,717.4 1033,759.5 M990,698 990.2,717.8 M998.2,709.7 998.2,733.7 M1008.1,723.8 1006.5,750.3 M1018.4,738.6 1011.3,760 M1024.4,747.2 1014.5,766.2 M1028.3,752.7 1018.3,773.8 M983.6,704.6 981.8,725.3 M990.2,717.8 987.5,742.7 M998.2,733.7 993.5,760.8 M1006.5,750.3 997,771.3 M1011.3,760 999.2,778.1 M1014.5,766.2 1002,786.4 M977,711 972.2,732.3 M981.8,725.3 976.7,750.1 M987.5,742.7 981.4,768.7 M993.5,760.8 984.1,779.6 M997,771.3 985.8,786.5 M999.2,778.1 988,795.1 M968.6,717.6 962.5,738.8 M972.2,732.3 965.5,756.8 M976.7,750.1 968.6,775.5 M981.4,768.7 970.4,786.4 M984.1,779.6 971.6,793.4 M985.8,786.5 973,802 M960,724 954.5,744.2 M962.5,738.8 955.7,761.9 M965.5,756.8 956.9,780.4 M968.6,775.5 957.6,791.2 M970.4,786.4 958.1,798.1 M971.6,793.4 958.7,806.6 M953.5,729.5 946.4,749.2 M954.5,744.2 945.7,766.5 M955.7,761.9 945,784.5 M956.9,780.4 944.6,795 M957.6,791.2 944.3,801.8 M958.1,798.1 944,810 M947,735 940.3,752.8 M946.4,749.2 939.4,769.4 M945.7,766.5 938.4,786.7 M945,784.5 937.8,796.8 M944.6,795 937.5,803.3 M944.3,801.8 937,811.3 M941.1,739.1 934,756.1 M940.3,752.8 932.9,772 M939.4,769.4 931.7,788.5 M938.4,786.7 931,798.2 M937.8,796.8 930.5,804.4 M937.5,803.3 930,812" fill="none" stroke="#858585" stroke-width="0.9"/><ellipse cx="1090" cy="168" rx="101" ry="17" transform="rotate(2.3 1090 168)" fill="#6e6e6e" stroke="#8a8a8a" stroke-width="0.8"/><path d="M1053.7,182.8 1046.4,189 M1041.3,191 1031.6,196.7 M1092.9,184.7 1093.5,191.7 M1078.6,193 1076.4,199.9 M1132.3,185.6 1140.9,192.3 M1118.1,194.2 1124,201.1 M1053.1,209.1 1045.8,215.4 M1041.2,217.4 1031.4,223.1 M1090.9,210.7 1091.5,217.7 M1077,219.1 1074.8,226 M1128.9,211.2 1137.4,217.9 M1115.2,219.9 1121.1,226.8 M1052.4,235.4 1045.2,241.7 M1041,243.7 1031.2,249.6 M1088.9,236.6 1089.5,243.6 M1075.5,245.2 1073.3,252.1 M1125.4,236.9 1134,243.4 M1112.2,245.7 1118.1,252.5 M1051.8,261.7 1044.5,268.1 M1040.8,270.1 1031,276.1 M1086.8,262.6 1087.5,269.6 M1074,271.2 1071.8,278.2 M1122,262.5 1130.6,269 M1109.3,271.4 1115.2,278.2 M1051.2,288 1043.9,294.4 M1040.6,296.5 1030.8,302.5 M1084.9,288.6 1085.5,295.6 M1072.5,297.3 1070.3,304.3 M1118.7,288.2 1127.2,294.6 M1106.4,297.2 1112.3,304 M1050.5,314.2 1043.3,320.8 M1040.3,322.8 1030.5,328.9 M1082.9,314.7 1083.5,321.7 M1071,323.5 1068.8,330.5 M1115.4,314.1 1124,320.4 M1103.6,323.3 1109.5,330 M1049.9,340.5 1042.6,347 M1040,349.1 1030.2,355.2 M1081,340.9 1081.7,347.9 M1069.6,349.8 1067.4,356.8 M1112.4,340.3 1120.9,346.7 M1101,349.6 1106.9,356.3 M1049.2,366.8 1041.9,373.3 M1039.6,375.4 1029.9,381.5 M1079.2,367.2 1079.8,374.2 M1068.1,376.1 1065.9,383.1 M1109.4,366.6 1118,373 M1098.4,375.9 1104.3,382.6 M1048.5,393 1041.2,399.5 M1039.3,401.6 1029.6,407.7 M1077.3,393.4 1077.9,400.4 M1066.6,402.3 1064.4,409.3 M1106.3,392.9 1114.8,399.2 M1095.6,402.1 1101.5,408.8 M1047.8,417.9 1040.5,424.4 M1039.1,425.1 1029.3,431.2 M1075.3,418.3 1075.9,425.3 M1065.1,425.8 1062.9,432.8 M1102.9,417.7 1111.5,424.1 M1092.7,425.6 1098.6,432.3 M1047.2,440.1 1039.9,446.6 M1038.9,447.2 1029.1,453.3 M1073.3,440.5 1074,447.5 M1063.6,448 1061.4,454.9 M1099.6,439.9 1108.2,446.3 M1089.9,447.8 1095.8,454.4 M1046.5,462.2 1039.3,468.7 M1038.7,469.4 1028.9,475.5 M1071.3,462.6 1071.9,469.6 M1062.1,470.1 1059.9,477.1 M1096.2,462.1 1104.8,468.4 M1086.9,469.9 1092.8,476.6 M1045.9,484.3 1038.6,490.8 M1038.5,491.5 1028.8,497.6 M1069.3,484.7 1069.9,491.7 M1060.5,492.2 1058.3,499.2 M1092.8,484.2 1101.3,490.5 M1083.9,492 1089.8,498.7 M1045.3,506.5 1038,513 M1038.3,513.6 1028.6,519.7 M1067.2,506.9 1067.9,513.9 M1059,514.3 1056.8,521.3 M1089.3,506.3 1097.9,512.6 M1080.9,514.1 1086.8,520.8 M1044.6,528.6 1037.4,535.1 M1038.1,535.8 1028.4,541.9 M1065.2,529 1065.8,536 M1057.4,536.5 1055.3,543.4 M1085.9,528.4 1094.4,534.7 M1078,536.2 1083.9,542.9 M1044,550.7 1036.7,557.3 M1037.9,557.9 1028.1,564 M1063.2,551.1 1063.8,558.1 M1055.9,558.6 1053.8,565.6 M1082.5,550.6 1091.1,556.9 M1075.1,558.4 1081,565.1 M1043.9,573.3 1036.8,579.8 M1037.8,580.9 1028.1,587 M1062.7,573.7 1063.9,580.6 M1055.6,581.6 1053.9,588.5 M1080.2,573 1089.1,579.3 M1073.7,581.2 1080.1,587.9 M1043.7,596.6 1037,603.2 M1037.6,604.2 1028,610.4 M1062.3,596.9 1064.2,603.9 M1055.4,604.9 1054.3,611.9 M1078.4,596.2 1087.7,602.4 M1072.7,604.5 1079.7,611 M1043.5,620 1037,626.6 M1037.2,627.6 1027.8,633.8 M1062.2,620.3 1064.7,627.2 M1055.3,628.3 1054.7,635.3 M1076.9,619.6 1086.7,625.7 M1071.9,627.8 1079.6,634.3 M1042.5,635.5 1038.1,641.2 M1035.3,640.9 1027.7,646.2 M1061,635.8 1066.3,641.7 M1053.3,641.5 1055.3,647.5 M1074.6,636 1086.5,641.2 M1069.3,642.1 1079.3,647.6 M1039.2,652 1034.9,657.3 M1032.5,657.1 1024.9,661.8 M1056.8,653.4 1062,659.5 M1049.4,658.8 1051.4,664.8 M1064.4,660.3 1074.5,666.2 M1035.7,668.5 1031.5,673.4 M1029,673.2 1021.5,677.3 M1052.3,670.9 1057.4,677.2 M1045,675.9 1047,681.9 M1059.1,678.3 1069.1,684.7 M1029,686 1024.7,690.5 M1019.9,690.7 1012.4,694.2 M1044.3,690.7 1049.4,697.2 M1034.4,696.9 1036.4,702.9 M1047.3,702.4 1057.2,709.4 M1015.4,705.9 1011.9,708.6 M1006.2,708.6 999.8,709.3 M1028.3,715.9 1033.1,723.4 M1017.6,720.7 1019.5,726.7 M1001.7,722.2 1000.1,722.8 M995.7,720.2 992.1,717.8 M1011.3,737.4 1015.1,746 M1004.4,735.7 1006.4,741.7 M992.3,731.2 991.4,731.4 M986.7,728.4 984.3,725.3 M999.7,748.1 1003.1,756.9 M993.3,745.5 995.2,751.5 M982.2,739.4 982.1,739.1 M977,735.8 975.8,732.2 M987.7,757.4 990.7,766.4 M982,753.7 983.9,759.7 M971.7,746.4 972.1,746.1 M966.8,742.6 966.3,738.8 M975.8,764.8 978.5,773.9 M970.4,760.7 972.4,766.7 M961.4,752.6 962.3,752.1 M957.7,748.3 957.9,744.3 M963.9,770.9 966.4,780.1 M959.5,766.3 961.5,772.3 M952.2,757.6 953.7,757.1 M949.1,753.3 950.2,749.3 M952.8,775.7 955,784.8 M949,771 951,776.9 M943.9,761.8 946,761.3 M942,757.2 944.2,753.1 M943.1,779.4 944.9,788.5 M941.2,774.2 943.2,780.2 M937.6,764.9 939.8,764.3 M935.8,760.3 938,756.3 M936.5,781.7 938.3,790.8 M934.7,776.7 936.7,782.6" stroke="#1010b0" stroke-width="1.0" fill="none"/><path d="M998.3,177.5 979.8,179.4 M994.8,185.7 975.6,186.9 M1020.4,180.3 1006.5,184.7 M1011.4,188.3 995.6,192 M1164,185.4 1178.9,190.6 M1153,194.2 1166,200.1 M1184,184 1202.9,187 M1176.8,193.2 1194.7,197.1 M999.6,204.2 981.2,206.3 M996.3,212.5 977.1,213.8 M1021,206.8 1007,211.4 M1012.3,215 996.5,218.7 M1159.4,210.8 1174.4,215.9 M1148.7,219.7 1161.7,225.4 M1178.7,209.3 1197.6,212.1 M1171.7,218.5 1189.6,222.2 M1001,230.9 982.5,233.2 M997.8,239.3 978.6,240.7 M1021.6,233.4 1007.6,238 M1013.2,241.6 997.3,245.4 M1154.9,236.1 1169.8,241.2 M1144.5,245.2 1157.5,250.8 M1173.4,234.5 1192.3,237.2 M1166.6,243.8 1184.5,247.4 M1002.3,257.7 983.9,260 M999.3,266 980.1,267.6 M1022.1,259.9 1008.1,264.7 M1014.1,268.2 998.2,272.2 M1150.3,261.5 1165.2,266.5 M1140.3,270.6 1153.3,276.2 M1168.1,259.7 1187.1,262.3 M1161.6,269 1179.5,272.5 M1003.6,284.4 985.2,286.9 M1000.7,292.8 981.5,294.6 M1022.6,286.5 1008.7,291.4 M1014.9,294.9 999.1,299 M1145.9,287 1160.8,291.7 M1136.3,296.1 1149.3,301.6 M1163,285 1181.9,287.4 M1156.7,294.3 1174.6,297.7 M1004.8,311 986.3,313.7 M1002,319.2 982.7,321.1 M1023.1,313 1009.1,318 M1015.6,321.2 999.8,325.5 M1141.6,312.7 1156.5,317.3 M1132.4,322.1 1145.3,327.5 M1158,310.6 1177,312.8 M1152,320.3 1169.9,323.4 M1005.8,337.2 987.3,339.9 M1003,345.5 983.8,347.4 M1023.4,339.2 1009.4,344.2 M1016.2,347.5 1000.3,351.8 M1137.6,338.9 1152.5,343.6 M1128.7,348.4 1141.7,353.8 M1153.4,336.9 1172.4,339.1 M1147.7,346.6 1165.6,349.7 M1006.7,363.5 988.2,366.2 M1004,371.7 984.8,373.7 M1023.7,365.5 1009.7,370.5 M1016.7,373.8 1000.9,378 M1133.7,365.2 1148.6,369.9 M1125.1,374.7 1138.1,380 M1149,363.2 1168,365.4 M1143.4,372.9 1161.2,376 M1007.7,389.7 989.3,392.4 M1005.3,398 986,399.9 M1024,391.7 1010,396.7 M1017.4,400 1001.5,404.3 M1129.6,391.5 1144.5,396.1 M1121.1,400.9 1134.1,406.3 M1144.2,389.4 1163.2,391.7 M1138.6,399.1 1156.4,402.2 M1008.9,414.6 990.5,417.3 M1006.6,421.5 987.4,423.4 M1024.4,416.6 1010.5,421.6 M1018.2,423.5 1002.3,427.8 M1125.1,416.3 1140.1,421 M1117.1,424.4 1130.1,429.8 M1139.1,414.3 1158.1,416.5 M1133.7,422.6 1151.6,425.7 M1010.1,436.8 991.7,439.5 M1008,443.6 988.8,445.5 M1024.9,438.8 1011,443.8 M1019,445.6 1003.2,449.9 M1120.8,438.5 1135.7,443.2 M1113,446.6 1126,451.9 M1134.1,436.4 1153.1,438.7 M1128.8,444.7 1146.7,447.9 M1011.5,458.9 993,461.6 M1009.5,465.8 990.3,467.7 M1025.5,460.9 1011.5,465.9 M1019.9,467.8 1004.1,472 M1116.3,460.6 1131.2,465.3 M1108.8,468.7 1121.8,474 M1128.9,458.6 1147.8,460.8 M1123.7,466.9 1141.6,470 M1012.8,481.1 994.4,483.8 M1011,487.9 991.8,489.8 M1026.1,483 1012.1,488 M1020.8,489.9 1005,494.2 M1111.7,482.7 1126.6,487.4 M1104.5,490.8 1117.5,496.1 M1123.6,480.7 1142.5,482.9 M1118.6,489 1136.5,492.1 M1014.2,503.2 995.8,505.9 M1012.5,510 993.3,512 M1026.6,505.2 1012.7,510.2 M1021.7,512.1 1005.9,516.3 M1107.1,504.8 1122,509.5 M1100.2,512.9 1113.2,518.3 M1118.2,502.8 1137.2,505 M1113.5,511.1 1131.3,514.2 M1015.6,525.3 997.1,528 M1014,532.2 994.8,534.1 M1027.2,527.3 1013.2,532.3 M1022.6,534.2 1006.7,538.5 M1102.5,527 1117.4,531.6 M1096,535.1 1109,540.4 M1113,524.9 1131.9,527.1 M1108.4,533.2 1126.3,536.3 M1016.8,547.5 998.4,550.2 M1015.4,554.3 996.1,556.3 M1027.7,549.4 1013.7,554.5 M1023.4,556.3 1007.5,560.6 M1098.1,549.1 1113,553.8 M1092,557.2 1105,562.6 M1107.8,547 1126.8,549.3 M1103.6,555.4 1121.4,558.5 M1017.1,569.7 998.3,572.1 M1016.1,577.1 996.7,578.8 M1027.6,571.9 1013.4,576.9 M1023.2,579.1 1007,583.2 M1093.7,571.7 1108.5,576.4 M1088.4,580.1 1101.5,585.4 M1102.9,569.7 1121.7,572 M1098.8,578.3 1116.4,581.6 M1017,592.7 997.8,594.7 M1016.3,600.1 996.7,601.6 M1027.3,595.2 1012.9,600 M1022.6,602.3 1005.9,606.2 M1089.9,595 1104.6,599.7 M1085.5,603.4 1098.6,608.7 M1098.6,593 1117.4,595.4 M1094.8,601.8 1112.3,605.2 M1016.6,615.6 997,617 M1016.3,623.1 996.5,624.1 M1026.7,618.4 1012.1,623.2 M1021.8,625.4 1004.8,629.1 M1086.8,618.4 1101.4,623.2 M1083.1,626.8 1096.2,632.1 M1095.3,616.5 1113.9,619 M1091.5,625.3 1108.7,628.8 M1025.4,635.1 1011.9,639.1 M1019.7,640.3 1003.1,643.2 M1083,636.2 1098.8,640.4 M1078.8,642.5 1093.5,647 M1091.1,636.3 1110.4,638.6 M1086.2,642.8 1104.3,645.9 M1023.2,650.7 1009.6,653.9 M1017.7,655.6 1001.2,657.5 M1069.6,654.4 1081.5,660.1 M1077.5,655 1093.3,660 M1073.4,661.2 1088.1,666.4 M1085.2,655.6 1104.4,658.9 M1080.4,661.9 1098.5,666 M1020.6,666.3 1007.2,668.5 M1015.1,670.8 998.7,671.6 M1064.3,672.6 1076.1,679 M1071.8,673.7 1087.5,679.6 M1067.6,679.7 1082.2,685.8 M1079,674.8 1098.1,679.3 M1074.2,680.8 1092.2,686 M1014.9,681.8 1001.6,682.9 M1007.2,685.4 991,684.9 M1055.5,694.1 1067.2,701.2 M1062.4,696.2 1077.9,703.1 M1055,705.6 1069.4,712.6 M1069,698.2 1088,704 M1061,708.2 1078.8,714.5 M1003.6,696.7 991.9,693.5 M996.3,698 982,692.4 M1037.7,723.3 1048.3,733.3 M1027.6,731.5 1036.7,740.9 M1043.5,727.8 1057.5,738.9 M1033.6,737.9 1046.7,748.8 M1049.1,732.2 1066.1,743.3 M1038.3,743 1054.3,754.3 M993,708.3 985.8,700.1 M988.1,706.6 979,695.2 M1018.2,748.5 1025.8,762 M1012.1,749.5 1018.7,761.7 M1022.5,755.3 1032.2,771.3 M1016.8,757.8 1025.8,773.1 M1026.7,761.9 1038.1,779.4 M1020.4,764.2 1031.2,781.3 M985.4,715.8 980.1,706.5 M981,713.5 974.1,700.8 M1005.2,760.4 1011.4,774.7 M999.1,760.7 1004.6,773.5 M1008.5,768 1016.3,785.1 M1002.6,769.8 1010,786.1 M1011.8,775.4 1020.8,794.2 M1005.3,776.8 1014,795.2 M977.2,722.9 973.8,712.7 M972.7,720.2 968.1,706.5 M991.7,770.5 996.6,785.3 M986.4,769.6 990.8,782.9 M994.1,778.6 1000.1,796.5 M989,779.1 994.6,796.2 M996.5,786.5 1003.1,806.3 M991,786.5 997.4,805.9 M967.9,729.6 965.6,719.1 M963.8,726.8 960.5,712.7 M978.8,778.2 983,793.3 M973.5,776.8 977.3,790.3 M980.6,786.5 985.5,804.6 M975.4,786.5 980.1,803.8 M982.4,794.5 987.7,814.8 M976.8,794 982,813.7 M959.2,735.7 958.1,725 M956.1,732.6 954.2,718.2 M965.7,784.4 969.1,799.6 M961.1,782.3 964.3,795.9 M966.8,792.7 970.6,811 M962.1,791.9 965.7,809.4 M967.9,800.7 971.7,821.2 M962.8,799.4 966.7,819.3 M951.7,741.1 952,730.2 M949.1,737.9 948.9,723.4 M953.2,788.9 955.6,804.2 M948.9,786.6 951.3,800.3 M953.5,797 955.8,815.6 M948.9,796 951.3,813.6 M953.7,804.9 955.7,825.7 M948.9,803.3 951,823.4 M944.6,745.8 946.5,734.9 M942.8,742.3 944.5,727.8 M942.5,792.2 943.8,807.5 M940.4,789.4 941.9,803.1 M942.2,800.1 943,818.6 M940,798.4 940.9,816.1 M941.8,807.7 941.8,828.5 M939.6,805.5 940,825.6 M938.5,749.4 940.7,738.6 M936.7,746.1 938.7,731.5 M935.8,794 936.9,809.3 M933.7,791.2 935.1,804.9 M935.3,801.6 935.9,820.1 M933.1,799.8 933.9,817.5 M934.9,808.9 934.6,829.7 M932.7,806.6 932.8,826.8 M990.9,170.9 977,175.9 M992.1,176.1 976.3,179 M992.6,181.1 980.6,185.7 M994.5,186.2 979.7,190.5 M995.3,191.1 979,194.7 M992,196.1 973.4,200.6 M992.6,201.3 979.6,202.6 M994.8,206.2 981.6,209.6 M993,211.4 977.4,216.1 M994.8,216.4 978,218.9 M994.6,221.3 979.4,223.2 M996,226.5 982.3,227.4 M995.1,231.4 978.4,236.8 M997.3,236.6 982.4,239.6 M997.3,241.5 985,244 M996.2,246.6 978,249.1 M997,251.6 981.1,252 M998.2,256.9 982.8,258.7 M999.8,261.7 983.4,266 M998.8,267 984.1,270 M996.9,272 983.7,273.5 M997.7,277 984.8,278 M998.8,282 986.3,283 M1000.7,287.1 983.1,290.6 M1001.1,292 986.8,296.6 M998.8,297.2 985.6,300 M999.2,302.3 983.1,305.6 M1000.6,307.2 986,308.9 M1001.1,312.3 985.8,317.5 M1002,317.3 983.7,318.2 M1000.7,322.5 985.9,324.5 M999.6,327.5 987.3,331.6 M999.8,332.6 985.6,337 M1001.2,337.7 988.6,338.5 M1000.6,342.7 984.3,346.3 M1000.7,347.7 986.2,347.7 M1002.3,352.8 987.3,357.7 M1001.7,357.7 987.5,362.1 M1004.6,362.9 992.7,366.9 M1001.2,367.9 985.5,367.9 M1004.1,373 986.1,376.7 M1004.6,378 991.4,379.3 M1002.7,383 988.5,383.3 M1005.3,388 987.3,389.5 M1004.4,393.2 991.2,398.2 M1003.7,398.3 991.5,400.1 M1004.7,403.1 986.1,403 M1004.7,408.3 986.2,413.4 M1004.4,413.3 991,414.2 M1005.8,418.3 987.9,419.6 M1006.9,423.3 994.3,424.9 M1006.5,428.5 989.2,429.9 M1008.1,433.4 993.9,436.9 M1009.1,438.5 994.5,443.3 M1006.3,443.5 993.4,445 M1009.3,448.5 996.3,450.7 M1008.6,453.8 994.6,459.3 M1009.4,458.7 990.6,459.2 M1010.6,463.7 995.8,468.3 M1008.7,468.9 994.9,471.5 M1009.6,474 995.8,474.9 M1010.1,478.9 995.7,479.8 M1012.3,483.9 997.4,486.9 M1009.1,489 993.7,493.9 M1012.6,494.1 1000.6,497.1 M1012,499.1 995,502.3 M1013.3,504.2 997.4,507.1 M1011.6,509.1 997.9,512 M1013.9,514.1 998.1,517.6 M1013.3,519.2 997,521.3 M1013.7,524.3 998.6,525 M1015.5,529.2 998.8,533.9 M1016.1,534.3 1000.5,539.5 M1014.4,539.5 1001.8,543.6 M1015.7,544.4 1003.2,545.4 M1016.2,549.5 1003.4,554 M1017.5,554.7 999.4,554.9 M1015.9,559.5 1001.2,560.6 M1016,564.7 1002.9,568.1 M1015.7,569.7 1002.7,574.7 M1016.5,574.9 1000.7,578.6 M1017,580 1000.8,579.8 M1019,585 1001.6,589 M1018.4,590 1006.3,593.9 M1019,595.1 1004.2,598.7 M1019.2,600.1 1006.1,601.5 M1015.8,605.2 1003.2,607.8 M1019.4,610.3 1007,611.1 M1019.2,615.4 1006.7,615.9 M1017.2,620.4 1002.2,620.3 M1016.4,625.5 1002.6,628.9 M1016.6,630.5 1003.8,633.2 M1016.6,635.9 1002.4,637.3 M1015.5,640.7 1000,643.6 M1014.3,645.9 1000.6,646.1 M1015.5,651 1002.2,653.4 M1014.8,655.9 997.6,653.7 M1014.5,661.1 1000.5,658.4 M1014.9,666.1 1000.9,665 M1012.1,670.7 997.3,671.7 M1012.3,675.9 1000.4,674 M1009.2,681.6 999.7,675.4 M1004.2,684.2 993,677.9 M1001.7,688.2 993.4,680.1 M998.4,691.8 987.4,678.6 M994.3,694.7 983.8,687.2 M991.1,698.9 980.2,690.1 M987,702.2 978,696.1 M982.7,706.4 973.3,700.6 M980.4,711.3 970.2,700.8 M977.4,713.6 965.8,703.2 M971.6,717.8 960.8,704.3 M969.2,721.4 962.2,713.3 M965.1,722.1 954.9,710.3 M961.3,727.2 953,716.1 M957.6,730.1 948.1,719.1 M951.5,731.7 942.2,723.7 M949.6,736.3 942.3,727.9 M945,739.1 933.4,729.5 M940.9,741.9 931.4,729.1 M1189.8,177.8 1207.3,182 M1188,182.2 1201.5,185.7 M1184.3,186.9 1202.2,192 M1184.5,191.1 1200.3,197.2 M1185.9,196 1203.3,200.2 M1184.1,200.1 1202.3,202.8 M1183.2,204.4 1196.1,210.2 M1182.2,209 1199.6,214.5 M1181.9,213.1 1198.1,216.8 M1177.7,218.3 1197.2,224.2 M1176.6,222.3 1195.2,226.8 M1175.8,227 1189.8,232.4 M1176.5,230.8 1190.4,233.9 M1175.6,235.2 1193.5,242.6 M1173.1,240 1187.7,242.6 M1173.7,244.5 1186.6,248.3 M1173.3,249 1186.5,255.6 M1170.8,253 1183.7,256 M1170,257.4 1189.3,262 M1170.3,261.7 1185.4,267.5 M1169.2,266.8 1184.7,269.5 M1166.7,271.2 1179.5,278.1 M1167.9,275.5 1182.6,278.8 M1164.3,279.6 1179.2,286.4 M1163.6,284 1180.6,289.8 M1166,288.6 1183.8,293.9 M1162.8,293.4 1181,296.1 M1163.9,297.7 1183.2,302.5 M1160.6,301.8 1175.6,305.3 M1161.5,306.6 1178.9,311.1 M1161.2,311.3 1174.6,317.9 M1160.2,315.2 1175.6,323.1 M1159.6,320.2 1175.8,322.8 M1159,324.6 1174.3,328 M1155.1,328.7 1171.9,333.1 M1155.7,333.5 1171.5,337.2 M1155.9,337.5 1169.4,340 M1153.8,342.1 1170.3,345.2 M1154.5,346.8 1169.3,351.1 M1151.4,351 1171.1,353 M1151.2,355.4 1164.2,359.6 M1153.2,360.2 1169.3,367.8 M1149,364.3 1167.7,367.9 M1151,369 1164.3,374.4 M1147.9,373.4 1166.8,380.7 M1147.8,378.3 1163.3,384.9 M1145.5,382.3 1160,386.2 M1147.2,386.7 1160.5,392.5 M1147,391.2 1160.4,396.4 M1145.5,395.6 1161.2,398 M1143.6,399.8 1158.2,405.6 M1142.6,404.8 1161.7,409.1 M1140.7,409.1 1160.4,412.2 M1139.8,413.4 1156.2,417.7 M1137.9,418 1155.5,421 M1138.8,422 1154.1,425.8 M1136.6,426.6 1155,430.9 M1137.2,430.7 1156.7,435.5 M1134.3,435.6 1147.7,443.3 M1135.5,440.1 1151.6,445.5 M1131.5,444.5 1148.8,450 M1130.3,448.9 1144.7,452.1 M1131.5,452.6 1143.9,459.6 M1128,457 1145.9,462.3 M1127.2,461.5 1141.4,464.6 M1128.3,466.3 1145.6,471.5 M1128.6,470.8 1142.5,475.5 M1127,474.5 1146.5,479.3 M1123.2,479.1 1138.4,484.5 M1123.5,483.9 1135.8,491 M1122.8,487.8 1137.1,490.9 M1120,492.3 1135.8,495.6 M1121.8,496.5 1134.9,500.6 M1117.4,501.5 1135.4,506.5 M1117.4,506 1136.1,514.2 M1117.7,510.6 1132,517.6 M1115.2,514.1 1134.6,517.5 M1114.7,518.5 1128.2,526.3 M1114.5,523.4 1129.8,529.1 M1113.7,527.5 1132.2,535.7 M1110.3,532.1 1128.8,537.4 M1110.9,536.3 1126.1,539.6 M1108.3,541.2 1122.7,544.2 M1108.1,545.6 1120.3,552.7 M1105.4,550.1 1124.5,553.5 M1106.3,554.1 1119.7,558.9 M1105.6,558.6 1119.7,564.6 M1103,563 1121.2,566.2 M1104.3,567.6 1122.9,572.4 M1103.8,572.3 1121.8,576.1 M1100.2,576.5 1114.2,580.3 M1098.9,581 1114.6,584.3 M1099.5,585.2 1118.1,587.4 M1098.2,589.8 1113.8,596.5 M1099.6,594.7 1112.9,597.1 M1097.8,598.7 1117.5,602.7 M1097.7,603.6 1116.2,610.2 M1098.4,607.9 1117.7,613.4 M1096.8,612.7 1111.3,615 M1095.3,616.9 1110.1,619.2 M1095.8,621.4 1108.9,623.6 M1095.7,625.8 1110.7,630.2 M1095.4,630.3 1108.4,635.7 M1094.1,634.8 1110.3,643.2 M1092,639 1106.1,648.1 M1089.5,643.2 1104.1,649.4 M1086.5,647.5 1105.2,653.3 M1088.2,652.3 1104.5,662.2 M1084.5,656.1 1098.9,665 M1085.6,660.9 1101,668.1 M1081.4,665.1 1097.8,673.2 M1081.6,669.4 1096.7,675.2 M1078.5,673.7 1094.2,681.2 M1076.8,677.9 1095.1,683.6 M1075.3,681.8 1094.6,687.2 M1076,685.3 1093.8,695.4 M1075,689.4 1092.6,697.9 M1070.5,693.3 1085.3,700.9 M1070,697.9 1083.2,706 M1068.5,701.5 1079.8,711.6 M1065.3,705.5 1077.9,711.5 M1064.8,709.8 1081.4,720.8 M1062,714.2 1077.2,724.6 M1058.7,718.1 1072.9,727.6 M1056.6,721.8 1068.3,729.9 M1053.6,725.5 1069.7,736.2 M1053.2,730 1066.7,741 M1049.5,732.8 1061.8,740.7 M1048,736 1061.3,749.4 M1045.5,740.2 1059.5,751.1 M1042.7,743.1 1056.5,759.1 M1037.8,748.4 1050.6,763.2 M1034.8,750.4 1049.3,760.2 M1032.3,756.1 1047.9,768.1 M1032.1,757.5 1046.9,770.4 M1029,761.6 1039.8,778.8 M1025.4,764.7 1036.1,776.4 M1022.4,768.9 1030,781.7 M1017.2,772 1027.8,788.3 M1014.8,773.5 1024.1,785.7 M1011.2,776.4 1020.7,795 M1006.6,779 1015.4,791.5 M1004.8,780.6 1015.7,797.7 M1000.1,785.1 1010.3,798.7 M997.9,786.1 1008.8,802.7 M992,789.3 1000.3,806.7 M990.2,793.5 999.5,807.6 M985.5,794 991.1,812.4 M981.8,795.4 989.7,808.8 M977.5,799.3 983.5,812.8 M973.1,799.4 980,814.2 M969.1,802.5 972,821.7 M965.2,804.1 969,820.3 M960.2,804.3 967.2,824 M956.1,804.9 960,819.3 M951.9,804.4 954.4,823.7 M947.1,808.9 950.2,825.3 M943.3,809.9 944.9,827.6 M938.6,807.2 942.4,821.7 M934.2,809.5 935.2,825.9 M1105.4,165.2 1104.8,144.2 M1175.5,175.2 1176.3,150.1 M1177.2,171.5 1178,148.9 M1086.7,160.9 1085.9,141.9 M1092.1,173.9 1091.6,148.4 M1060.5,158 1061.1,137.4 M1030.8,167.7 1031.7,144.5 M1082.7,183 1084.1,162.8 M1098.5,169.7 1097.8,149.4 M1086.4,156.4 1087.2,135.2 M1129.7,165.1 1129,138 M1036.1,161.9 1036.6,134.1 M1004.5,173.6 1005.1,147 M1015.3,175.9 1015.6,154.8 M1107.7,182.5 1106.5,155.4 M1099.6,172.9 1098.4,145.7 M1069.9,175.7 1068.5,157.3 M1063.3,159.8 1063.9,134.5 M1156.9,175.6 1156.4,149.5 M1128,158.2 1126.7,131.5 M1169.3,163.5 1168.1,143.5 M1103.4,172.8 1104.5,146.7 M1032.6,160.8 1033,140 M1114.1,173.8 1114.8,153.7 M1064,179.9 1062.5,159.3 M1073.7,183.4 1073.3,162.2 M1155.7,168.6 1156.8,144.4 M1149.9,172.9 1149.7,147.1 M1044.4,181.3 1044.6,161.2 M1108.6,167.6 1109.5,147.9 M1132.7,171.1 1133.5,143.3 M1156.5,171.3 1156.5,145.3 M1116.7,180.7 1116.3,154.4 M1083.9,185.5 1083.2,165.4 M1069.1,160.9 1067.9,136.6 M1163.7,177.5 1164.3,151.6 M1050.7,164.6 1050.4,142.6 M1111.5,168.2 1112.7,150 M1103.3,178.4 1104.5,155.4 M1025.2,180.7 1024.4,158.1 M1009.1,168.4 1009.9,144 M1058.5,178 1057.5,151.6 M1047.1,160 1046.1,137.6 M1100.6,159.7 1099.5,137.1 M1124.8,166.2 1123.9,145.2 M1064.7,157.8 1063.7,138.3 M1090.8,179.6 1090.9,160 M1070.5,176.8 1072,151.5 M1164.8,179.8 1163.6,157.9 M1174.3,169.6 1175,147.3 M1115.2,182.3 1114,162.2 M1076.6,172.8 1076.3,146.9 M1066.6,161.1 1067,138.4 M1136.4,180.1 1136.1,154.7 M1142.2,165.6 1142.4,140.1 M1050,174.4 1050.7,147.6 M1102,158.6 1103,133.8 M1049.7,163.2 1049.1,138.9 M1140.3,176.6 1141.1,151.5 M1057.4,165.5 1057.2,143 M1046.1,164.4 1046.6,137.1 M1121.4,182.1 1122.2,160.2 M996.4,171.9 995,148.5 M1134.6,182.2 1136,159 M1148,177.7 1148.1,152.6 M1014.3,170.1 1015.3,146.9 M1011.8,178.8 1010.9,154 M1025.3,179.2 1024.1,151.3 M1076.1,173.8 1075.4,151.8 M1151.2,171.8 1151,146.8 M1060.7,177.2 1059.9,151.8 M1154.1,167 1153.3,141 M1056,175.3 1054.8,149.6 M1117.7,159.9 1117.6,136.3 M1104,185.6 1103.6,161.2" stroke="#0c0cc0" stroke-width="0.95" fill="none"/><path d="M978.8,179.5 984.9,176.6 985.4,181.1Z M974.6,186.9 980.9,184.3 981.2,188.9Z M1005.5,185 1010.2,181.4 1011.4,185.2Z M994.6,192.2 1000.3,188.5 1001.3,193Z M1179.9,190.9 1173.1,191 1174.6,186.6Z M1166.9,200.5 1160.9,200 1162.6,196.4Z M1203.9,187.2 1197.2,188.5 1197.9,183.9Z M1195.7,197.3 1188.9,198.2 1189.9,193.7Z M980.2,206.4 986.3,203.4 986.8,208Z M976.1,213.9 982.3,211.1 982.7,215.7Z M1006.1,211.7 1010.8,208 1012,211.8Z M995.5,218.9 1001.2,215.2 1002.2,219.7Z M1175.3,216.2 1168.5,216.3 1170,212Z M1162.6,225.8 1156.7,225.4 1158.3,221.8Z M1198.6,212.3 1191.9,213.6 1192.6,209.1Z M1190.6,222.4 1183.8,223.4 1184.8,218.9Z M981.5,233.3 987.6,230.2 988.2,234.8Z M977.6,240.8 983.8,238 984.2,242.6Z M1006.6,238.3 1011.3,234.7 1012.6,238.5Z M996.4,245.7 1002.1,241.9 1003.1,246.4Z M1170.7,241.5 1163.9,241.6 1165.4,237.3Z M1158.4,251.2 1152.5,250.8 1154.1,247.1Z M1193.3,237.4 1186.7,238.7 1187.3,234.2Z M1185.5,247.6 1178.7,248.5 1179.7,244Z M982.9,260.2 988.9,257.1 989.5,261.6Z M979.1,267.7 985.3,264.9 985.6,269.5Z M1007.2,265 1011.8,261.3 1013.1,265.1Z M997.3,272.5 1002.9,268.7 1004,273.1Z M1166.2,266.8 1159.4,266.9 1160.8,262.6Z M1154.2,276.6 1148.3,276.2 1149.9,272.5Z M1188.1,262.4 1181.4,263.9 1182,259.3Z M1180.4,272.7 1173.7,273.7 1174.6,269.2Z M984.2,287.1 990.2,283.9 990.8,288.5Z M980.5,294.6 986.7,291.8 987.1,296.4Z M1007.7,291.7 1012.3,288 1013.7,291.7Z M998.1,299.2 1003.7,295.4 1004.9,299.9Z M1161.7,292.1 1154.9,292.3 1156.3,287.9Z M1150.2,302 1144.2,301.6 1145.8,298Z M1182.9,287.5 1176.3,289 1176.9,284.4Z M1175.5,297.8 1168.8,298.9 1169.7,294.4Z M985.4,313.8 991.4,310.6 992,315.2Z M981.7,321.2 987.9,318.3 988.3,322.9Z M1008.2,318.3 1012.8,314.5 1014.1,318.3Z M998.8,325.8 1004.4,321.9 1005.6,326.3Z M1157.5,317.6 1150.7,317.9 1152,313.5Z M1146.3,327.8 1140.3,327.6 1141.9,323.9Z M1178,312.9 1171.4,314.5 1171.9,309.9Z M1170.9,323.6 1164.2,324.8 1165,320.2Z M986.3,340.1 992.3,336.9 993,341.4Z M982.8,347.5 988.9,344.6 989.4,349.2Z M1008.5,344.5 1013.1,340.8 1014.4,344.5Z M999.3,352 1004.9,348.1 1006.1,352.6Z M1153.4,343.9 1146.6,344.2 1148,339.8Z M1142.7,354.1 1136.7,353.9 1138.2,350.2Z M1173.4,339.2 1166.7,340.7 1167.3,336.2Z M1166.5,349.9 1159.8,351.1 1160.6,346.5Z M987.2,366.3 993.2,363.1 993.9,367.7Z M983.8,373.8 989.9,370.8 990.4,375.4Z M1008.7,370.8 1013.3,367 1014.7,370.8Z M999.9,378.3 1005.5,374.4 1006.7,378.8Z M1149.6,370.2 1142.8,370.5 1144.2,366.1Z M1139,380.4 1133.1,380.2 1134.6,376.5Z M1168.9,365.5 1162.3,367.1 1162.9,362.5Z M1162.2,376.2 1155.5,377.4 1156.3,372.8Z M988.3,392.6 994.3,389.4 994.9,393.9Z M985,400 991.2,397.1 991.6,401.6Z M1009.1,397.1 1013.7,393.3 1015,397.1Z M1000.6,404.5 1006.2,400.6 1007.4,405.1Z M1145.4,396.4 1138.7,396.7 1140,392.3Z M1135,406.6 1129.1,406.4 1130.6,402.7Z M1164.2,391.8 1157.6,393.3 1158.1,388.7Z M1157.4,402.4 1150.7,403.6 1151.5,399Z M989.5,417.5 995.5,414.3 996.1,418.8Z M986.4,423.5 992.5,420.6 993,425.2Z M1009.5,421.9 1014.1,418.2 1015.5,421.9Z M1001.4,428 1006.9,424.1 1008.1,428.6Z M1141,421.3 1134.2,421.6 1135.6,417.2Z M1131,430.1 1125,429.9 1126.6,426.2Z M1159.1,416.6 1152.4,418.1 1153,413.6Z M1152.6,425.9 1145.9,427.1 1146.7,422.5Z M990.7,439.6 996.7,436.4 997.4,441Z M987.8,445.6 993.9,442.7 994.4,447.3Z M1010,444.1 1014.6,440.3 1016,444.1Z M1002.2,450.2 1007.8,446.3 1009,450.7Z M1136.7,443.5 1129.9,443.7 1131.3,439.4Z M1126.9,452.3 1121,452 1122.5,448.3Z M1154.1,438.8 1147.4,440.3 1148,435.8Z M1147.7,448.1 1141,449.2 1141.8,444.7Z M992,461.8 998,458.6 998.7,463.1Z M989.3,467.8 995.4,464.9 995.9,469.4Z M1010.6,466.2 1015.2,462.5 1016.5,466.2Z M1003.1,472.3 1008.7,468.4 1009.9,472.9Z M1132.2,465.6 1125.4,465.9 1126.7,461.5Z M1122.7,474.4 1116.7,474.1 1118.3,470.4Z M1148.8,460.9 1142.2,462.5 1142.7,457.9Z M1142.6,470.2 1135.9,471.3 1136.7,466.8Z M993.4,483.9 999.4,480.7 1000.1,485.2Z M990.8,489.9 996.9,487 997.4,491.6Z M1011.1,488.4 1015.7,484.6 1017.1,488.4Z M1004,494.4 1009.6,490.6 1010.8,495Z M1127.6,487.7 1120.8,488 1122.1,483.6Z M1118.4,496.5 1112.5,496.3 1114,492.6Z M1143.5,483 1136.9,484.6 1137.4,480Z M1137.4,492.3 1130.7,493.4 1131.5,488.9Z M994.8,506 1000.8,502.8 1001.4,507.4Z M992.3,512.1 998.4,509.1 998.9,513.7Z M1011.7,510.5 1016.3,506.7 1017.7,510.5Z M1004.9,516.6 1010.5,512.7 1011.7,517.1Z M1122.9,509.8 1116.1,510.1 1117.5,505.7Z M1114.2,518.6 1108.2,518.4 1109.7,514.7Z M1138.2,505.1 1131.6,506.7 1132.1,502.1Z M1132.3,514.4 1125.6,515.5 1126.4,511Z M996.1,528.2 1002.1,525 1002.8,529.5Z M993.8,534.2 999.9,531.3 1000.4,535.9Z M1012.3,532.6 1016.9,528.9 1018.2,532.6Z M1005.8,538.7 1011.4,534.8 1012.5,539.3Z M1118.4,531.9 1111.6,532.2 1112.9,527.8Z M1110,540.8 1104,540.5 1105.5,536.8Z M1132.9,527.2 1126.3,528.8 1126.8,524.2Z M1127.3,536.5 1120.6,537.7 1121.4,533.1Z M997.4,550.3 1003.4,547.1 1004.1,551.7Z M995.1,556.4 1001.3,553.4 1001.7,558Z M1012.8,554.8 1017.4,551 1018.7,554.8Z M1006.6,560.9 1012.1,557 1013.3,561.4Z M1113.9,554.1 1107.1,554.4 1108.5,550Z M1105.9,562.9 1100,562.7 1101.5,559Z M1127.8,549.4 1121.2,550.9 1121.7,546.4Z M1122.4,558.7 1115.7,559.8 1116.5,555.3Z M997.3,572.3 1003.4,569.2 1004,573.7Z M995.7,578.9 1001.9,576 1002.3,580.6Z M1012.5,577.2 1017.8,572.9 1019.3,577.3Z M1006,583.5 1011.6,579.7 1012.8,584.1Z M1109.4,576.7 1102.6,576.9 1104,572.6Z M1102.4,585.8 1096.4,585.5 1098,581.8Z M1122.7,572.1 1116.1,573.6 1116.7,569Z M1117.4,581.8 1110.7,582.9 1111.6,578.4Z M996.8,594.8 1003,591.9 1003.4,596.4Z M995.7,601.6 1001.9,598.9 1002.3,603.5Z M1011.9,600.3 1017.2,596.1 1018.7,600.5Z M1005,606.4 1010.7,602.7 1011.7,607.2Z M1105.5,600 1098.7,600.3 1100.1,595.9Z M1099.6,609.1 1093.6,608.8 1095.1,605.1Z M1118.4,595.5 1111.8,597 1112.3,592.4Z M1113.3,605.4 1106.6,606.4 1107.4,601.9Z M996,617.1 1002.2,614.3 1002.5,618.9Z M995.5,624.2 1001.8,621.6 1002,626.2Z M1011.1,623.5 1016.5,619.3 1017.9,623.7Z M1003.8,629.3 1009.6,625.7 1010.5,630.2Z M1102.3,623.5 1095.5,623.7 1097,619.3Z M1097.2,632.4 1091.2,632.2 1092.7,628.5Z M1114.9,619.1 1108.3,620.5 1108.9,616Z M1109.7,629 1103,630 1103.9,625.5Z M1010.9,639.4 1016.4,635.4 1017.7,639.8Z M1002.2,643.3 1008.1,640 1008.9,644.5Z M1099.8,640.6 1093,641.2 1094.2,636.8Z M1094.4,647.3 1088.5,647.6 1089.6,643.7Z M1111.4,638.7 1104.8,640.3 1105.3,635.7Z M1105.3,646.1 1098.6,647.3 1099.4,642.7Z M1008.6,654.1 1014.3,650.4 1015.4,654.9Z M1000.2,657.6 1006.3,654.6 1006.8,659.2Z M1082.3,660.6 1076.4,659.9 1078.2,656.3Z M1094.2,660.3 1087.4,660.5 1088.8,656.2Z M1089,666.8 1083.1,666.8 1084.4,663Z M1105.4,659.1 1098.7,660.3 1099.5,655.7Z M1099.5,666.2 1092.7,667 1093.7,662.5Z M1006.2,668.6 1012.1,665.4 1012.9,669.9Z M997.8,671.6 1004,669 1004.3,673.6Z M1077,679.5 1071.1,678.6 1073,675.1Z M1088.4,680 1081.6,679.9 1083.2,675.6Z M1083.1,686.2 1077.2,685.9 1078.7,682.2Z M1099.1,679.5 1092.4,680.3 1093.4,675.8Z M1093.1,686.3 1086.3,686.7 1087.6,682.3Z M1000.6,683 1006.8,680.2 1007.2,684.8Z M990,684.9 996.5,682.8 996.3,687.4Z M1068,701.7 1062.2,700.5 1064.3,697.1Z M1078.8,703.5 1072,703 1073.9,698.8Z M1070.3,713.1 1064.4,712.4 1066.2,708.8Z M1089,704.2 1082.2,704.6 1083.5,700.2Z M1079.7,714.9 1072.9,714.9 1074.5,710.6Z M990.9,693.3 997.7,692.7 996.5,697.1Z M981.1,692.1 987.9,692.2 986.2,696.5Z M1049,734 1043.6,731.6 1046.4,728.7Z M1037.4,741.7 1032.1,739 1034.9,736.2Z M1058.3,739.5 1051.8,737.3 1054.7,733.7Z M1047.5,749.4 1041.9,747.4 1044.4,744.3Z M1067,743.9 1060.3,742.3 1062.9,738.5Z M1055.1,754.9 1048.6,753.1 1051.2,749.3Z M985.2,699.4 991.1,702.7 987.6,705.7Z M978.4,694.4 984.2,698 980.6,700.9Z M1026.3,762.8 1021.8,758.9 1025.3,757Z M1019.2,762.6 1014.8,758.6 1018.3,756.7Z M1032.7,772.1 1027.4,767.8 1031.3,765.4Z M1026.3,773.9 1021.8,770.1 1025.2,768.1Z M1038.6,780.2 1033.2,776.1 1037,773.6Z M1031.7,782.1 1026.4,778 1030.3,775.5Z M979.6,705.6 984.8,710 980.8,712.3Z M973.6,699.9 978.7,704.4 974.6,706.6Z M1011.8,775.6 1007.7,771.3 1011.4,769.7Z M1005,774.5 1001,770.1 1004.6,768.5Z M1016.8,786 1012,781.1 1016.2,779.2Z M1010.4,787 1006.3,782.7 1009.9,781Z M1021.2,795.1 1016.4,790.4 1020.5,788.4Z M1014.4,796.1 1009.6,791.3 1013.7,789.4Z M973.5,711.8 977.7,717.1 973.3,718.6Z M967.8,705.6 972,710.9 967.7,712.4Z M996.9,786.3 993.2,781.6 997,780.3Z M991.1,783.9 987.4,779.2 991.2,777.9Z M1000.4,797.4 996.2,792.1 1000.5,790.6Z M994.9,797.1 991.3,792.4 995.1,791.2Z M1003.4,807.3 999.2,801.9 1003.6,800.5Z M997.8,806.8 993.6,801.5 997.9,800Z M965.4,718.1 969.1,723.9 964.6,724.9Z M960.3,711.7 964,717.4 959.5,718.5Z M983.2,794.2 979.8,789.4 983.7,788.3Z M977.6,791.3 974.1,786.4 978,785.3Z M985.8,805.6 981.9,800 986.3,798.8Z M980.3,804.7 976.9,799.8 980.8,798.8Z M987.9,815.7 984.1,810.1 988.5,809Z M982.3,814.6 978.4,809 982.9,807.8Z M958,724 960.9,730.1 956.3,730.6Z M954.1,717.2 957.2,723.3 952.7,723.9Z M969.3,800.5 966.1,795.5 970,794.6Z M964.5,796.9 961.3,791.9 965.2,791Z M970.8,812 967.2,806.2 971.7,805.3Z M966,810.4 962.8,805.3 966.8,804.5Z M971.9,822.2 968.4,816.3 973,815.5Z M966.9,820.3 963.4,814.4 967.9,813.6Z M952.1,729.2 954.1,735.6 949.6,735.5Z M948.9,722.4 951.3,728.8 946.7,728.8Z M955.8,805.2 952.9,800 956.9,799.3Z M951.5,801.3 948.5,796.1 952.5,795.5Z M956,816.6 952.9,810.5 957.4,809.9Z M951.4,814.6 948.7,809.4 952.6,808.8Z M955.8,826.7 952.9,820.5 957.5,820.1Z M951.2,824.4 948.2,818.3 952.7,817.8Z M946.7,733.9 947.9,740.6 943.3,739.8Z M944.6,726.8 946.1,733.4 941.6,732.9Z M943.9,808.5 941.5,803.1 945.4,802.7Z M942,804.1 939.4,798.7 943.4,798.3Z M943,819.6 940.4,813.3 945,813.1Z M941,817.1 938.7,811.6 942.7,811.4Z M941.8,829.5 939.5,823.1 944.1,823.1Z M940,826.6 937.6,820.3 942.2,820.2Z M940.9,737.6 941.9,744.3 937.4,743.4Z M938.8,730.6 940.2,737.2 935.7,736.6Z M937,810.3 934.6,804.9 938.6,804.6Z M935.2,805.9 932.6,800.5 936.6,800.1Z M935.9,821.1 933.4,814.8 938,814.7Z M933.9,818.5 931.7,813 935.7,812.8Z M934.6,830.7 932.4,824.3 937,824.3Z M932.8,827.8 930.4,821.4 935,821.3Z M976,176.3 981.3,171.9 982.8,176.3Z M975.4,179.2 981.2,175.7 982.1,180.3Z M979.7,186 984.9,181.6 986.5,185.9Z M978.8,190.8 984.3,186.8 985.6,191.2Z M978,194.9 983.8,191.3 984.8,195.8Z M972.4,200.9 978.1,197.1 979.2,201.6Z M978.6,202.7 984.8,199.7 985.2,204.3Z M980.6,209.9 986.2,206.1 987.4,210.5Z M976.4,216.3 981.9,212.3 983.2,216.7Z M977,219.1 983,215.8 983.7,220.4Z M978.4,223.3 984.5,220.2 985,224.8Z M981.3,227.5 987.5,224.8 987.9,229.3Z M977.4,237.1 982.8,232.9 984.2,237.3Z M981.4,239.8 987.3,236.3 988.2,240.8Z M984,244.2 989.9,240.7 990.7,245.2Z M977.1,249.2 983.1,246.1 983.7,250.6Z M980.1,252 986.4,249.6 986.5,254.2Z M981.9,258.8 987.9,255.7 988.5,260.3Z M982.4,266.2 988.1,262.4 989.2,266.9Z M983.1,270.2 988.9,266.7 989.9,271.2Z M982.7,273.6 988.8,270.6 989.3,275.2Z M983.8,278.1 990,275.3 990.4,279.9Z M985.3,283 991.5,280.3 991.8,284.8Z M982.1,290.8 987.9,287.3 988.8,291.8Z M985.9,296.9 991.2,292.8 992.7,297.2Z M984.6,300.2 990.4,296.6 991.3,301.1Z M982.1,305.8 987.9,302.3 988.8,306.8Z M985,309 991.1,306 991.7,310.6Z M984.9,317.9 990.2,313.6 991.7,318Z M982.7,318.3 989,315.7 989.2,320.3Z M985,324.6 991,321.5 991.6,326.1Z M986.4,331.9 991.7,327.7 993.2,332.1Z M984.6,337.3 990.1,333.2 991.4,337.6Z M987.6,338.6 993.8,335.9 994.1,340.4Z M983.4,346.5 989.1,342.9 990.1,347.3Z M985.2,347.7 991.6,345.4 991.7,350Z M986.4,358 991.8,353.8 993.2,358.2Z M986.5,362.4 991.9,358.3 993.3,362.7Z M991.7,367.3 997,363 998.5,367.4Z M984.5,367.9 990.9,365.6 990.9,370.2Z M985.1,376.9 990.9,373.3 991.9,377.9Z M990.4,379.4 996.6,376.5 997,381.1Z M987.5,383.3 993.8,380.9 993.9,385.5Z M986.3,389.6 992.5,386.7 992.9,391.3Z M990.2,398.6 995.4,394.1 997,398.4Z M990.6,400.2 996.5,397 997.2,401.6Z M985.1,403 991.5,400.7 991.5,405.3Z M985.3,413.6 990.8,409.7 992.1,414.2Z M990,414.3 996.3,411.6 996.6,416.2Z M986.9,419.7 993.2,416.9 993.5,421.5Z M993.3,425 999.4,421.9 999.9,426.5Z M988.2,430 994.4,427.2 994.8,431.8Z M992.9,437.2 998.6,433.4 999.7,437.8Z M993.6,443.6 998.9,439.4 1000.4,443.8Z M992.4,445.1 998.5,442.1 999,446.6Z M995.3,450.9 1001.2,447.5 1002,452.1Z M993.6,459.7 998.7,455.2 1000.4,459.5Z M989.6,459.2 996,456.7 996.1,461.3Z M994.9,468.6 1000.3,464.5 1001.7,468.9Z M993.9,471.7 999.8,468.2 1000.7,472.7Z M994.8,475 1001,472.3 1001.3,476.8Z M994.7,479.9 1000.9,477.2 1001.2,481.8Z M996.4,487.1 1002.2,483.6 1003.1,488.1Z M992.8,494.2 998.1,490.1 999.6,494.5Z M999.6,497.4 1005.3,493.6 1006.4,498Z M994,502.4 999.8,499 1000.7,503.5Z M996.4,507.2 1002.3,503.8 1003.1,508.4Z M996.9,512.3 1002.7,508.7 1003.7,513.1Z M997.1,517.8 1002.8,514.2 1003.8,518.6Z M996,521.4 1002.1,518.3 1002.6,522.9Z M997.6,525 1003.9,522.4 1004.1,527Z M997.8,534.1 1003.4,530.2 1004.6,534.6Z M999.6,539.8 1004.9,535.6 1006.4,539.9Z M1000.8,543.9 1006.2,539.8 1007.6,544.1Z M1002.2,545.5 1008.4,542.7 1008.8,547.3Z M1002.4,554.3 1007.7,550 1009.2,554.4Z M998.4,554.9 1004.8,552.5 1004.9,557.1Z M1000.2,560.7 1006.4,557.9 1006.7,562.5Z M1001.9,568.4 1007.5,564.5 1008.7,569Z M1001.8,575 1006.9,570.6 1008.6,574.9Z M999.7,578.9 1005.4,575.2 1006.5,579.6Z M999.8,579.8 1006.2,577.6 1006.2,582.2Z M1000.7,589.2 1006.4,585.6 1007.4,590Z M1005.3,594.3 1010.7,590.1 1012.1,594.5Z M1003.2,598.9 1008.9,595.2 1010,599.6Z M1005.1,601.6 1011.3,598.6 1011.8,603.2Z M1002.2,608 1008.1,604.4 1009,608.9Z M1006,611.2 1012.2,608.4 1012.5,613Z M1005.7,616 1012,613.4 1012.2,618Z M1001.2,620.3 1007.6,618 1007.6,622.6Z M1001.7,629.1 1007.3,625.3 1008.4,629.8Z M1002.9,633.4 1008.7,629.8 1009.6,634.3Z M1001.4,637.4 1007.5,634.5 1008,639.1Z M999,643.8 1004.9,640.4 1005.7,644.9Z M999.6,646.1 1006,643.8 1006.1,648.4Z M1001.2,653.6 1007.1,650.2 1007.9,654.8Z M996.6,653.6 1003.2,652.1 1002.6,656.7Z M999.5,658.3 1006.2,657.2 1005.4,661.7Z M999.9,664.9 1006.4,663.1 1006,667.7Z M996.3,671.7 1002.6,669 1002.9,673.6Z M999.5,673.8 1006.1,672.6 1005.4,677.1Z M998.9,674.8 1005.5,676.4 1002.9,680.3Z M992.1,677.4 998.8,678.5 996.6,682.5Z M992.6,679.4 998.8,682.2 995.6,685.5Z M986.8,677.8 992.6,681.3 989.1,684.2Z M983,686.6 989.6,688.5 986.9,692.2Z M979.4,689.5 985.9,691.7 983,695.3Z M977.2,695.6 983.8,697.3 981.2,701.1Z M972.4,700 979.1,701.5 976.6,705.4Z M969.5,700.1 975.7,703.1 972.4,706.3Z M965.1,702.5 971.4,705.1 968.3,708.5Z M960.2,703.5 966,707.1 962.4,709.9Z M961.6,712.5 967.5,715.9 964,718.9Z M954.2,709.6 960.2,712.9 956.7,715.9Z M952.4,715.3 958,719 954.3,721.8Z M947.4,718.4 953.4,721.7 949.9,724.7Z M941.5,723.1 947.8,725.5 944.8,729Z M941.6,727.1 947.6,730.4 944.1,733.5Z M932.7,728.8 939.1,731.1 936.1,734.7Z M930.8,728.3 936.5,732.1 932.8,734.8Z M1208.2,182.2 1201.5,183 1202.5,178.5Z M1202.5,185.9 1195.7,186.6 1196.8,182.1Z M1203.2,192.2 1196.4,192.7 1197.7,188.3Z M1201.3,197.6 1194.5,197.4 1196.1,193.1Z M1204.2,200.4 1197.5,201.2 1198.6,196.7Z M1203.2,202.9 1196.6,204.3 1197.2,199.7Z M1197,210.6 1190.3,210.1 1192.1,205.9Z M1200.5,214.8 1193.7,215.1 1195.1,210.7Z M1199,217 1192.3,217.9 1193.3,213.4Z M1198.1,224.5 1191.3,224.8 1192.7,220.4Z M1196.2,227 1189.4,227.8 1190.5,223.3Z M1190.7,232.8 1183.9,232.6 1185.6,228.3Z M1191.4,234.1 1184.6,235 1185.6,230.5Z M1194.5,242.9 1187.7,242.6 1189.4,238.4Z M1188.7,242.8 1182,243.9 1182.8,239.4Z M1187.5,248.6 1180.8,249 1182.1,244.6Z M1187.4,256.1 1180.7,255.3 1182.7,251.1Z M1184.7,256.2 1178,257 1179,252.5Z M1190.3,262.2 1183.5,263 1184.6,258.5Z M1186.4,267.8 1179.6,267.7 1181.2,263.4Z M1185.7,269.7 1179,270.8 1179.8,266.3Z M1180.3,278.6 1173.6,277.6 1175.8,273.5Z M1183.6,279.1 1176.8,279.9 1177.9,275.4Z M1180.1,286.9 1173.3,286.3 1175.2,282.1Z M1181.5,290.1 1174.7,290.2 1176.2,285.9Z M1184.7,294.2 1177.9,294.6 1179.3,290.2Z M1182,296.3 1175.4,297.6 1176,293.1Z M1184.2,302.7 1177.4,303.4 1178.5,298.9Z M1176.6,305.6 1169.8,306.3 1170.9,301.8Z M1179.9,311.4 1173.1,312 1174.3,307.5Z M1175.5,318.3 1168.8,317.5 1170.8,313.4Z M1176.4,323.5 1169.7,322.7 1171.8,318.6Z M1176.8,323 1170.1,324.2 1170.8,319.7Z M1175.3,328.3 1168.5,329.1 1169.6,324.6Z M1172.9,333.4 1166.1,334 1167.2,329.5Z M1172.5,337.4 1165.7,338.2 1166.8,333.7Z M1170.4,340.2 1163.6,341.3 1164.5,336.7Z M1171.3,345.3 1164.6,346.4 1165.4,341.9Z M1170.2,351.3 1163.4,351.8 1164.7,347.4Z M1172.1,353.1 1165.5,354.7 1165.9,350.1Z M1165.2,359.9 1158.4,360.1 1159.8,355.8Z M1170.2,368.2 1163.5,367.6 1165.4,363.4Z M1168.7,368.1 1162,369.1 1162.8,364.6Z M1165.2,374.7 1158.4,374.5 1160.1,370.2Z M1167.7,381.1 1160.9,380.9 1162.6,376.6Z M1164.2,385.3 1157.5,384.9 1159.3,380.7Z M1160.9,386.4 1154.2,387 1155.3,382.5Z M1161.5,392.9 1154.7,392.4 1156.5,388.2Z M1161.3,396.8 1154.5,396.6 1156.2,392.3Z M1162.2,398.2 1155.5,399.5 1156.2,394.9Z M1159.2,405.9 1152.4,405.7 1154.1,401.4Z M1162.7,409.4 1155.9,410.2 1156.9,405.7Z M1161.4,412.3 1154.8,413.6 1155.5,409.1Z M1157.1,418 1150.4,418.6 1151.5,414.1Z M1156.5,421.2 1149.8,422.4 1150.6,417.9Z M1155,426.1 1148.3,426.8 1149.4,422.3Z M1156,431.1 1149.2,431.9 1150.3,427.4Z M1157.7,435.7 1151,436.4 1152,432Z M1148.6,443.8 1141.9,442.6 1144.2,438.6Z M1152.6,445.8 1145.8,445.9 1147.2,441.6Z M1149.7,450.3 1142.9,450.6 1144.3,446.2Z M1145.7,452.3 1139,453.2 1140,448.7Z M1144.8,460.1 1138.1,459 1140.3,455Z M1146.8,462.5 1140,462.9 1141.3,458.5Z M1142.4,464.8 1135.7,465.7 1136.6,461.2Z M1146.6,471.8 1139.8,472.2 1141.1,467.8Z M1143.5,475.8 1136.7,475.9 1138.2,471.6Z M1147.5,479.5 1140.8,480.2 1141.8,475.8Z M1139.3,484.8 1132.5,484.8 1134,480.5Z M1136.7,491.5 1130,490.3 1132.3,486.3Z M1138.1,491.1 1131.4,492 1132.3,487.5Z M1136.8,495.8 1130,496.7 1131,492.2Z M1135.8,500.9 1129,501.2 1130.4,496.8Z M1136.4,506.7 1129.6,507.2 1130.8,502.8Z M1137,514.6 1130.3,514.1 1132.1,509.9Z M1132.9,518.1 1126.2,517.3 1128.2,513.2Z M1135.5,517.7 1128.8,518.8 1129.6,514.3Z M1129.1,526.8 1122.4,525.6 1124.7,521.6Z M1130.7,529.5 1123.9,529.4 1125.5,525.1Z M1133.1,536.1 1126.3,535.6 1128.2,531.4Z M1129.8,537.6 1123,538.1 1124.3,533.7Z M1127,539.8 1120.3,540.7 1121.3,536.2Z M1123.6,544.4 1116.9,545.4 1117.9,540.9Z M1121.2,553.2 1114.5,552 1116.8,548Z M1125.5,553.7 1118.8,554.8 1119.6,550.3Z M1120.6,559.2 1113.8,559.2 1115.4,554.9Z M1120.6,565 1113.8,564.6 1115.6,560.4Z M1122.2,566.3 1115.5,567.5 1116.2,563Z M1123.9,572.6 1117.1,573.3 1118.3,568.8Z M1122.8,576.3 1116.1,577.2 1117,572.7Z M1115.1,580.6 1108.3,581.1 1109.6,576.6Z M1115.6,584.5 1108.9,585.4 1109.8,580.9Z M1119.1,587.5 1112.5,589.1 1113,584.5Z M1114.7,596.9 1107.9,596.5 1109.7,592.3Z M1113.9,597.3 1107.2,598.4 1108,593.9Z M1118.5,602.9 1111.8,603.9 1112.7,599.4Z M1117.2,610.5 1110.4,610.5 1111.9,606.2Z M1118.7,613.7 1111.9,614.1 1113.2,609.7Z M1112.3,615.2 1105.6,616.4 1106.4,611.9Z M1111.1,619.4 1104.4,620.7 1105.1,616.1Z M1109.8,623.8 1103.2,625 1103.9,620.4Z M1111.6,630.5 1104.8,630.9 1106.2,626.5Z M1109.3,636 1102.5,635.7 1104.3,631.5Z M1111.2,643.7 1104.5,642.8 1106.6,638.7Z M1107,648.7 1100.3,647.1 1102.8,643.3Z M1105.1,649.7 1098.3,649.4 1100,645.1Z M1106.2,653.5 1099.4,653.9 1100.7,649.5Z M1105.3,662.7 1098.7,661.3 1101,657.4Z M1099.7,665.5 1093.1,664.1 1095.5,660.2Z M1101.9,668.5 1095.1,667.9 1097.1,663.7Z M1098.7,673.6 1091.9,672.9 1094,668.7Z M1097.6,675.5 1090.8,675.4 1092.5,671.1Z M1095.1,681.6 1088.3,680.9 1090.3,676.8Z M1096,683.9 1089.2,684.2 1090.6,679.8Z M1095.5,687.5 1088.8,687.9 1090,683.5Z M1094.6,695.9 1087.9,694.7 1090.2,690.7Z M1093.5,698.3 1086.7,697.6 1088.7,693.5Z M1086.2,701.3 1079.4,700.5 1081.5,696.4Z M1084,706.5 1077.4,705.1 1079.8,701.2Z M1080.5,712.2 1074.2,709.7 1077.3,706.3Z M1078.8,712 1072.1,711.3 1074,707.1Z M1082.2,721.3 1075.6,719.7 1078.1,715.9Z M1078.1,725.2 1071.5,723.4 1074.1,719.6Z M1073.7,728.1 1067.1,726.5 1069.7,722.7Z M1069.1,730.4 1062.6,728.7 1065.2,724.9Z M1070.5,736.8 1063.9,735.2 1066.5,731.3Z M1067.5,741.6 1061.1,739.4 1064,735.8Z M1062.6,741.2 1056,739.7 1058.5,735.8Z M1062,750.1 1055.8,747.2 1059.1,743.9Z M1060.3,751.8 1053.8,749.6 1056.7,746Z M1057.1,759.9 1051.2,756.5 1054.7,753.5Z M1051.3,763.9 1045.4,760.6 1048.9,757.6Z M1050.1,760.7 1043.5,759.1 1046.1,755.2Z M1048.7,768.7 1042.2,766.6 1045,762.9Z M1047.6,771 1041.3,768.6 1044.3,765.1Z M1040.4,779.7 1035,775.5 1038.9,773Z M1036.8,777.2 1030.8,774 1034.2,770.9Z M1030.5,782.6 1025.3,778.3 1029.2,775.9Z M1028.3,789.1 1022.9,785 1026.8,782.5Z M1024.7,786.5 1019,782.8 1022.7,780Z M1021.2,795.9 1016.2,791.2 1020.3,789.1Z M1016,792.4 1010.4,788.4 1014.2,785.8Z M1016.2,798.5 1010.8,794.4 1014.7,791.9Z M1010.9,799.5 1005.2,795.8 1008.9,793Z M1009.3,803.5 1003.9,799.4 1007.7,796.9Z M1000.8,807.6 995.9,802.8 1000.1,800.8Z M1000.1,808.4 994.6,804.3 998.5,801.8Z M991.4,813.4 987.3,807.9 991.7,806.6Z M990.2,809.7 985,805.3 989,803Z M984,813.7 979.2,808.8 983.4,806.9Z M980.4,815.1 975.6,810.3 979.8,808.3Z M972.1,822.7 968.9,816.7 973.4,816Z M969.2,821.3 965.5,815.5 970,814.5Z M967.5,825 963.2,819.7 967.5,818.2Z M960.2,820.3 956.3,814.7 960.8,813.5Z M954.6,824.7 951.4,818.7 956,818.1Z M950.4,826.3 946.9,820.5 951.4,819.6Z M945,828.6 942.1,822.5 946.7,822Z M942.6,822.7 938.8,817.1 943.2,815.9Z M935.3,826.9 932.6,820.6 937.2,820.3Z M1104.8,143.2 1106.9,148.8 1102.9,148.9Z M1176.3,149.1 1178.2,154.8 1174.2,154.6Z M1178,147.9 1179.8,153.6 1175.8,153.4Z M1085.8,140.9 1088.1,146.4 1084.1,146.6Z M1091.6,147.4 1093.7,153 1089.7,153.1Z M1061.1,136.4 1063,142 1059,141.9Z M1031.7,143.5 1033.5,149.2 1029.5,149Z M1084.2,161.8 1085.8,167.5 1081.8,167.2Z M1097.8,148.4 1100,153.9 1096,154Z M1087.2,134.2 1089,139.8 1085,139.7Z M1128.9,137 1131.1,142.6 1127.1,142.7Z M1036.6,133.1 1038.5,138.7 1034.5,138.6Z M1005.2,146 1007,151.7 1003,151.6Z M1015.6,153.8 1017.5,159.4 1013.5,159.4Z M1106.4,154.4 1108.7,159.9 1104.7,160.1Z M1098.4,144.7 1100.6,150.2 1096.6,150.3Z M1068.4,156.3 1070.8,161.7 1066.9,162Z M1063.9,133.5 1065.8,139.1 1061.8,139Z M1156.4,148.5 1158.5,154 1154.5,154.1Z M1126.6,130.5 1128.9,136 1124.9,136.2Z M1168,142.5 1170.4,148 1166.4,148.2Z M1104.5,145.7 1106.3,151.4 1102.3,151.2Z M1033,139 1034.9,144.6 1030.9,144.5Z M1114.9,152.7 1116.7,158.4 1112.7,158.2Z M1062.5,158.3 1064.9,163.7 1060.9,164Z M1073.2,161.2 1075.3,166.8 1071.3,166.9Z M1156.8,143.4 1158.6,149.1 1154.6,148.9Z M1149.7,146.1 1151.7,151.7 1147.7,151.7Z M1044.6,160.2 1046.5,165.8 1042.5,165.8Z M1109.6,146.9 1111.3,152.5 1107.3,152.4Z M1133.5,142.3 1135.4,147.9 1131.4,147.8Z M1156.5,144.3 1158.5,149.9 1154.5,149.9Z M1116.2,153.4 1118.3,158.9 1114.3,159Z M1083.2,164.4 1085.4,169.9 1081.4,170.1Z M1067.8,135.6 1070.1,141.1 1066.1,141.3Z M1164.3,150.6 1166.2,156.3 1162.2,156.2Z M1050.4,141.6 1052.5,147.2 1048.5,147.2Z M1112.8,149 1114.4,154.7 1110.4,154.4Z M1104.5,154.4 1106.2,160.1 1102.2,159.9Z M1024.3,157.1 1026.5,162.6 1022.5,162.8Z M1009.9,143 1011.7,148.6 1007.7,148.5Z M1057.4,150.6 1059.6,156.1 1055.7,156.2Z M1046,136.6 1048.3,142.1 1044.3,142.3Z M1099.4,136.1 1101.7,141.6 1097.7,141.8Z M1123.8,144.2 1126.1,149.7 1122.1,149.8Z M1063.6,137.3 1065.9,142.7 1061.9,143Z M1090.9,159 1092.9,164.6 1088.9,164.6Z M1072,150.5 1073.7,156.2 1069.7,155.9Z M1163.5,156.9 1165.8,162.4 1161.8,162.6Z M1175,146.3 1176.8,152 1172.8,151.8Z M1113.9,161.2 1116.3,166.7 1112.3,166.9Z M1076.3,145.9 1078.4,151.4 1074.4,151.5Z M1067,137.4 1068.9,143.1 1064.9,143Z M1136.1,153.7 1138.2,159.2 1134.2,159.3Z M1142.4,139.1 1144.4,144.8 1140.4,144.7Z M1050.7,146.6 1052.6,152.3 1048.6,152.2Z M1103.1,132.8 1104.8,138.5 1100.8,138.3Z M1049.1,137.9 1051.2,143.4 1047.2,143.5Z M1141.1,150.5 1143,156.1 1139,156Z M1057.2,142 1059.2,147.6 1055.2,147.6Z M1046.6,136.1 1048.5,141.7 1044.5,141.6Z M1122.3,159.2 1124,164.9 1120,164.7Z M995,147.5 997.3,153 993.3,153.2Z M1136,158 1137.7,163.7 1133.7,163.5Z M1148.1,151.6 1150.1,157.2 1146.1,157.2Z M1015.3,145.9 1017.1,151.5 1013.1,151.4Z M1010.9,153 1013.1,158.5 1009.1,158.6Z M1024.1,150.3 1026.3,155.9 1022.3,156Z M1075.4,150.8 1077.6,156.4 1073.6,156.5Z M1151,145.8 1153.1,151.4 1149.1,151.4Z M1059.9,150.8 1062,156.3 1058,156.4Z M1153.2,140 1155.4,145.5 1151.4,145.6Z M1054.8,148.6 1057,154.1 1053,154.3Z M1117.6,135.3 1119.6,140.9 1115.6,140.9Z M1103.6,160.2 1105.7,165.7 1101.7,165.8Z" fill="#00009c"/><path d="M1044.6,189a1.8,1.8 0 1,0 3.6,0a1.8,1.8 0 1,0 -3.6,0 M1029.8,196.7a1.8,1.8 0 1,0 3.6,0a1.8,1.8 0 1,0 -3.6,0 M1091.7,191.7a1.8,1.8 0 1,0 3.6,0a1.8,1.8 0 1,0 -3.6,0 M1074.6,199.9a1.8,1.8 0 1,0 3.6,0a1.8,1.8 0 1,0 -3.6,0 M1139.1,192.3a1.8,1.8 0 1,0 3.6,0a1.8,1.8 0 1,0 -3.6,0 M1122.2,201.1a1.8,1.8 0 1,0 3.6,0a1.8,1.8 0 1,0 -3.6,0 M1044,215.4a1.8,1.8 0 1,0 3.6,0a1.8,1.8 0 1,0 -3.6,0 M1029.6,223.1a1.8,1.8 0 1,0 3.6,0a1.8,1.8 0 1,0 -3.6,0 M1089.7,217.7a1.8,1.8 0 1,0 3.6,0a1.8,1.8 0 1,0 -3.6,0 M1073,226a1.8,1.8 0 1,0 3.6,0a1.8,1.8 0 1,0 -3.6,0 M1135.6,217.9a1.8,1.8 0 1,0 3.6,0a1.8,1.8 0 1,0 -3.6,0 M1119.3,226.8a1.8,1.8 0 1,0 3.6,0a1.8,1.8 0 1,0 -3.6,0 M1043.4,241.7a1.8,1.8 0 1,0 3.6,0a1.8,1.8 0 1,0 -3.6,0 M1029.4,249.6a1.8,1.8 0 1,0 3.6,0a1.8,1.8 0 1,0 -3.6,0 M1087.7,243.6a1.8,1.8 0 1,0 3.6,0a1.8,1.8 0 1,0 -3.6,0 M1071.5,252.1a1.8,1.8 0 1,0 3.6,0a1.8,1.8 0 1,0 -3.6,0 M1132.2,243.4a1.8,1.8 0 1,0 3.6,0a1.8,1.8 0 1,0 -3.6,0 M1116.3,252.5a1.8,1.8 0 1,0 3.6,0a1.8,1.8 0 1,0 -3.6,0 M1042.7,268.1a1.8,1.8 0 1,0 3.6,0a1.8,1.8 0 1,0 -3.6,0 M1029.2,276.1a1.8,1.8 0 1,0 3.6,0a1.8,1.8 0 1,0 -3.6,0 M1085.7,269.6a1.8,1.8 0 1,0 3.6,0a1.8,1.8 0 1,0 -3.6,0 M1070,278.2a1.8,1.8 0 1,0 3.6,0a1.8,1.8 0 1,0 -3.6,0 M1128.8,269a1.8,1.8 0 1,0 3.6,0a1.8,1.8 0 1,0 -3.6,0 M1113.4,278.2a1.8,1.8 0 1,0 3.6,0a1.8,1.8 0 1,0 -3.6,0 M1042.1,294.4a1.8,1.8 0 1,0 3.6,0a1.8,1.8 0 1,0 -3.6,0 M1029,302.5a1.8,1.8 0 1,0 3.6,0a1.8,1.8 0 1,0 -3.6,0 M1083.7,295.6a1.8,1.8 0 1,0 3.6,0a1.8,1.8 0 1,0 -3.6,0 M1068.5,304.3a1.8,1.8 0 1,0 3.6,0a1.8,1.8 0 1,0 -3.6,0 M1125.4,294.6a1.8,1.8 0 1,0 3.6,0a1.8,1.8 0 1,0 -3.6,0 M1110.5,304a1.8,1.8 0 1,0 3.6,0a1.8,1.8 0 1,0 -3.6,0 M1041.5,320.8a1.8,1.8 0 1,0 3.6,0a1.8,1.8 0 1,0 -3.6,0 M1028.7,328.9a1.8,1.8 0 1,0 3.6,0a1.8,1.8 0 1,0 -3.6,0 M1081.7,321.7a1.8,1.8 0 1,0 3.6,0a1.8,1.8 0 1,0 -3.6,0 M1067,330.5a1.8,1.8 0 1,0 3.6,0a1.8,1.8 0 1,0 -3.6,0 M1122.2,320.4a1.8,1.8 0 1,0 3.6,0a1.8,1.8 0 1,0 -3.6,0 M1107.7,330a1.8,1.8 0 1,0 3.6,0a1.8,1.8 0 1,0 -3.6,0 M1040.8,347a1.8,1.8 0 1,0 3.6,0a1.8,1.8 0 1,0 -3.6,0 M1028.4,355.2a1.8,1.8 0 1,0 3.6,0a1.8,1.8 0 1,0 -3.6,0 M1079.9,347.9a1.8,1.8 0 1,0 3.6,0a1.8,1.8 0 1,0 -3.6,0 M1065.6,356.8a1.8,1.8 0 1,0 3.6,0a1.8,1.8 0 1,0 -3.6,0 M1119.1,346.7a1.8,1.8 0 1,0 3.6,0a1.8,1.8 0 1,0 -3.6,0 M1105.1,356.3a1.8,1.8 0 1,0 3.6,0a1.8,1.8 0 1,0 -3.6,0 M1040.1,373.3a1.8,1.8 0 1,0 3.6,0a1.8,1.8 0 1,0 -3.6,0 M1028.1,381.5a1.8,1.8 0 1,0 3.6,0a1.8,1.8 0 1,0 -3.6,0 M1078,374.2a1.8,1.8 0 1,0 3.6,0a1.8,1.8 0 1,0 -3.6,0 M1064.1,383.1a1.8,1.8 0 1,0 3.6,0a1.8,1.8 0 1,0 -3.6,0 M1116.2,373a1.8,1.8 0 1,0 3.6,0a1.8,1.8 0 1,0 -3.6,0 M1102.5,382.6a1.8,1.8 0 1,0 3.6,0a1.8,1.8 0 1,0 -3.6,0 M1039.4,399.5a1.8,1.8 0 1,0 3.6,0a1.8,1.8 0 1,0 -3.6,0 M1027.8,407.7a1.8,1.8 0 1,0 3.6,0a1.8,1.8 0 1,0 -3.6,0 M1076.1,400.4a1.8,1.8 0 1,0 3.6,0a1.8,1.8 0 1,0 -3.6,0 M1062.6,409.3a1.8,1.8 0 1,0 3.6,0a1.8,1.8 0 1,0 -3.6,0 M1113,399.2a1.8,1.8 0 1,0 3.6,0a1.8,1.8 0 1,0 -3.6,0 M1099.7,408.8a1.8,1.8 0 1,0 3.6,0a1.8,1.8 0 1,0 -3.6,0 M1038.7,424.4a1.8,1.8 0 1,0 3.6,0a1.8,1.8 0 1,0 -3.6,0 M1027.5,431.2a1.8,1.8 0 1,0 3.6,0a1.8,1.8 0 1,0 -3.6,0 M1074.1,425.3a1.8,1.8 0 1,0 3.6,0a1.8,1.8 0 1,0 -3.6,0 M1061.1,432.8a1.8,1.8 0 1,0 3.6,0a1.8,1.8 0 1,0 -3.6,0 M1109.7,424.1a1.8,1.8 0 1,0 3.6,0a1.8,1.8 0 1,0 -3.6,0 M1096.8,432.3a1.8,1.8 0 1,0 3.6,0a1.8,1.8 0 1,0 -3.6,0 M1038.1,446.6a1.8,1.8 0 1,0 3.6,0a1.8,1.8 0 1,0 -3.6,0 M1027.3,453.3a1.8,1.8 0 1,0 3.6,0a1.8,1.8 0 1,0 -3.6,0 M1072.2,447.5a1.8,1.8 0 1,0 3.6,0a1.8,1.8 0 1,0 -3.6,0 M1059.6,454.9a1.8,1.8 0 1,0 3.6,0a1.8,1.8 0 1,0 -3.6,0 M1106.4,446.3a1.8,1.8 0 1,0 3.6,0a1.8,1.8 0 1,0 -3.6,0 M1094,454.4a1.8,1.8 0 1,0 3.6,0a1.8,1.8 0 1,0 -3.6,0 M1037.5,468.7a1.8,1.8 0 1,0 3.6,0a1.8,1.8 0 1,0 -3.6,0 M1027.1,475.5a1.8,1.8 0 1,0 3.6,0a1.8,1.8 0 1,0 -3.6,0 M1070.1,469.6a1.8,1.8 0 1,0 3.6,0a1.8,1.8 0 1,0 -3.6,0 M1058.1,477.1a1.8,1.8 0 1,0 3.6,0a1.8,1.8 0 1,0 -3.6,0 M1103,468.4a1.8,1.8 0 1,0 3.6,0a1.8,1.8 0 1,0 -3.6,0 M1091,476.6a1.8,1.8 0 1,0 3.6,0a1.8,1.8 0 1,0 -3.6,0 M1036.8,490.8a1.8,1.8 0 1,0 3.6,0a1.8,1.8 0 1,0 -3.6,0 M1027,497.6a1.8,1.8 0 1,0 3.6,0a1.8,1.8 0 1,0 -3.6,0 M1068.1,491.7a1.8,1.8 0 1,0 3.6,0a1.8,1.8 0 1,0 -3.6,0 M1056.5,499.2a1.8,1.8 0 1,0 3.6,0a1.8,1.8 0 1,0 -3.6,0 M1099.5,490.5a1.8,1.8 0 1,0 3.6,0a1.8,1.8 0 1,0 -3.6,0 M1088,498.7a1.8,1.8 0 1,0 3.6,0a1.8,1.8 0 1,0 -3.6,0 M1036.2,513a1.8,1.8 0 1,0 3.6,0a1.8,1.8 0 1,0 -3.6,0 M1026.8,519.7a1.8,1.8 0 1,0 3.6,0a1.8,1.8 0 1,0 -3.6,0 M1066.1,513.9a1.8,1.8 0 1,0 3.6,0a1.8,1.8 0 1,0 -3.6,0 M1055,521.3a1.8,1.8 0 1,0 3.6,0a1.8,1.8 0 1,0 -3.6,0 M1096.1,512.6a1.8,1.8 0 1,0 3.6,0a1.8,1.8 0 1,0 -3.6,0 M1085,520.8a1.8,1.8 0 1,0 3.6,0a1.8,1.8 0 1,0 -3.6,0 M1035.6,535.1a1.8,1.8 0 1,0 3.6,0a1.8,1.8 0 1,0 -3.6,0 M1026.6,541.9a1.8,1.8 0 1,0 3.6,0a1.8,1.8 0 1,0 -3.6,0 M1064,536a1.8,1.8 0 1,0 3.6,0a1.8,1.8 0 1,0 -3.6,0 M1053.5,543.4a1.8,1.8 0 1,0 3.6,0a1.8,1.8 0 1,0 -3.6,0 M1092.6,534.7a1.8,1.8 0 1,0 3.6,0a1.8,1.8 0 1,0 -3.6,0 M1082.1,542.9a1.8,1.8 0 1,0 3.6,0a1.8,1.8 0 1,0 -3.6,0 M1034.9,557.3a1.8,1.8 0 1,0 3.6,0a1.8,1.8 0 1,0 -3.6,0 M1026.3,564a1.8,1.8 0 1,0 3.6,0a1.8,1.8 0 1,0 -3.6,0 M1062,558.1a1.8,1.8 0 1,0 3.6,0a1.8,1.8 0 1,0 -3.6,0 M1052,565.6a1.8,1.8 0 1,0 3.6,0a1.8,1.8 0 1,0 -3.6,0 M1089.3,556.9a1.8,1.8 0 1,0 3.6,0a1.8,1.8 0 1,0 -3.6,0 M1079.2,565.1a1.8,1.8 0 1,0 3.6,0a1.8,1.8 0 1,0 -3.6,0 M1035,579.8a1.8,1.8 0 1,0 3.6,0a1.8,1.8 0 1,0 -3.6,0 M1026.3,587a1.8,1.8 0 1,0 3.6,0a1.8,1.8 0 1,0 -3.6,0 M1062.1,580.6a1.8,1.8 0 1,0 3.6,0a1.8,1.8 0 1,0 -3.6,0 M1052.1,588.5a1.8,1.8 0 1,0 3.6,0a1.8,1.8 0 1,0 -3.6,0 M1087.3,579.3a1.8,1.8 0 1,0 3.6,0a1.8,1.8 0 1,0 -3.6,0 M1078.3,587.9a1.8,1.8 0 1,0 3.6,0a1.8,1.8 0 1,0 -3.6,0 M1035.2,603.2a1.8,1.8 0 1,0 3.6,0a1.8,1.8 0 1,0 -3.6,0 M1026.2,610.4a1.8,1.8 0 1,0 3.6,0a1.8,1.8 0 1,0 -3.6,0 M1062.4,603.9a1.8,1.8 0 1,0 3.6,0a1.8,1.8 0 1,0 -3.6,0 M1052.5,611.9a1.8,1.8 0 1,0 3.6,0a1.8,1.8 0 1,0 -3.6,0 M1085.9,602.4a1.8,1.8 0 1,0 3.6,0a1.8,1.8 0 1,0 -3.6,0 M1077.9,611a1.8,1.8 0 1,0 3.6,0a1.8,1.8 0 1,0 -3.6,0 M1035.2,626.6a1.8,1.8 0 1,0 3.6,0a1.8,1.8 0 1,0 -3.6,0 M1026,633.8a1.8,1.8 0 1,0 3.6,0a1.8,1.8 0 1,0 -3.6,0 M1062.9,627.2a1.8,1.8 0 1,0 3.6,0a1.8,1.8 0 1,0 -3.6,0 M1052.9,635.3a1.8,1.8 0 1,0 3.6,0a1.8,1.8 0 1,0 -3.6,0 M1084.9,625.7a1.8,1.8 0 1,0 3.6,0a1.8,1.8 0 1,0 -3.6,0 M1077.8,634.3a1.8,1.8 0 1,0 3.6,0a1.8,1.8 0 1,0 -3.6,0 M1036.3,641.2a1.8,1.8 0 1,0 3.6,0a1.8,1.8 0 1,0 -3.6,0 M1025.9,646.2a1.8,1.8 0 1,0 3.6,0a1.8,1.8 0 1,0 -3.6,0 M1064.5,641.7a1.8,1.8 0 1,0 3.6,0a1.8,1.8 0 1,0 -3.6,0 M1053.5,647.5a1.8,1.8 0 1,0 3.6,0a1.8,1.8 0 1,0 -3.6,0 M1084.7,641.2a1.8,1.8 0 1,0 3.6,0a1.8,1.8 0 1,0 -3.6,0 M1077.5,647.6a1.8,1.8 0 1,0 3.6,0a1.8,1.8 0 1,0 -3.6,0 M1033.1,657.3a1.8,1.8 0 1,0 3.6,0a1.8,1.8 0 1,0 -3.6,0 M1023.1,661.8a1.8,1.8 0 1,0 3.6,0a1.8,1.8 0 1,0 -3.6,0 M1060.2,659.5a1.8,1.8 0 1,0 3.6,0a1.8,1.8 0 1,0 -3.6,0 M1049.6,664.8a1.8,1.8 0 1,0 3.6,0a1.8,1.8 0 1,0 -3.6,0 M1072.7,666.2a1.8,1.8 0 1,0 3.6,0a1.8,1.8 0 1,0 -3.6,0 M1029.7,673.4a1.8,1.8 0 1,0 3.6,0a1.8,1.8 0 1,0 -3.6,0 M1019.7,677.3a1.8,1.8 0 1,0 3.6,0a1.8,1.8 0 1,0 -3.6,0 M1055.6,677.2a1.8,1.8 0 1,0 3.6,0a1.8,1.8 0 1,0 -3.6,0 M1045.2,681.9a1.8,1.8 0 1,0 3.6,0a1.8,1.8 0 1,0 -3.6,0 M1067.3,684.7a1.8,1.8 0 1,0 3.6,0a1.8,1.8 0 1,0 -3.6,0 M1022.9,690.5a1.8,1.8 0 1,0 3.6,0a1.8,1.8 0 1,0 -3.6,0 M1010.6,694.2a1.8,1.8 0 1,0 3.6,0a1.8,1.8 0 1,0 -3.6,0 M1047.6,697.2a1.8,1.8 0 1,0 3.6,0a1.8,1.8 0 1,0 -3.6,0 M1034.6,702.9a1.8,1.8 0 1,0 3.6,0a1.8,1.8 0 1,0 -3.6,0 M1055.4,709.4a1.8,1.8 0 1,0 3.6,0a1.8,1.8 0 1,0 -3.6,0 M1010.1,708.6a1.8,1.8 0 1,0 3.6,0a1.8,1.8 0 1,0 -3.6,0 M998,709.3a1.8,1.8 0 1,0 3.6,0a1.8,1.8 0 1,0 -3.6,0 M1031.3,723.4a1.8,1.8 0 1,0 3.6,0a1.8,1.8 0 1,0 -3.6,0 M1017.7,726.7a1.8,1.8 0 1,0 3.6,0a1.8,1.8 0 1,0 -3.6,0 M998.3,722.8a1.8,1.8 0 1,0 3.6,0a1.8,1.8 0 1,0 -3.6,0 M990.3,717.8a1.8,1.8 0 1,0 3.6,0a1.8,1.8 0 1,0 -3.6,0 M1013.3,746a1.8,1.8 0 1,0 3.6,0a1.8,1.8 0 1,0 -3.6,0 M1004.6,741.7a1.8,1.8 0 1,0 3.6,0a1.8,1.8 0 1,0 -3.6,0 M989.6,731.4a1.8,1.8 0 1,0 3.6,0a1.8,1.8 0 1,0 -3.6,0 M982.5,725.3a1.8,1.8 0 1,0 3.6,0a1.8,1.8 0 1,0 -3.6,0 M1001.3,756.9a1.8,1.8 0 1,0 3.6,0a1.8,1.8 0 1,0 -3.6,0 M993.4,751.5a1.8,1.8 0 1,0 3.6,0a1.8,1.8 0 1,0 -3.6,0 M980.3,739.1a1.8,1.8 0 1,0 3.6,0a1.8,1.8 0 1,0 -3.6,0 M974,732.2a1.8,1.8 0 1,0 3.6,0a1.8,1.8 0 1,0 -3.6,0 M988.9,766.4a1.8,1.8 0 1,0 3.6,0a1.8,1.8 0 1,0 -3.6,0 M982.1,759.7a1.8,1.8 0 1,0 3.6,0a1.8,1.8 0 1,0 -3.6,0 M970.3,746.1a1.8,1.8 0 1,0 3.6,0a1.8,1.8 0 1,0 -3.6,0 M964.5,738.8a1.8,1.8 0 1,0 3.6,0a1.8,1.8 0 1,0 -3.6,0 M976.7,773.9a1.8,1.8 0 1,0 3.6,0a1.8,1.8 0 1,0 -3.6,0 M970.6,766.7a1.8,1.8 0 1,0 3.6,0a1.8,1.8 0 1,0 -3.6,0 M960.5,752.1a1.8,1.8 0 1,0 3.6,0a1.8,1.8 0 1,0 -3.6,0 M956.1,744.3a1.8,1.8 0 1,0 3.6,0a1.8,1.8 0 1,0 -3.6,0 M964.6,780.1a1.8,1.8 0 1,0 3.6,0a1.8,1.8 0 1,0 -3.6,0 M959.7,772.3a1.8,1.8 0 1,0 3.6,0a1.8,1.8 0 1,0 -3.6,0 M951.9,757.1a1.8,1.8 0 1,0 3.6,0a1.8,1.8 0 1,0 -3.6,0 M948.4,749.3a1.8,1.8 0 1,0 3.6,0a1.8,1.8 0 1,0 -3.6,0 M953.2,784.8a1.8,1.8 0 1,0 3.6,0a1.8,1.8 0 1,0 -3.6,0 M949.2,776.9a1.8,1.8 0 1,0 3.6,0a1.8,1.8 0 1,0 -3.6,0 M944.2,761.3a1.8,1.8 0 1,0 3.6,0a1.8,1.8 0 1,0 -3.6,0 M942.4,753.1a1.8,1.8 0 1,0 3.6,0a1.8,1.8 0 1,0 -3.6,0 M943.1,788.5a1.8,1.8 0 1,0 3.6,0a1.8,1.8 0 1,0 -3.6,0 M941.4,780.2a1.8,1.8 0 1,0 3.6,0a1.8,1.8 0 1,0 -3.6,0 M938,764.3a1.8,1.8 0 1,0 3.6,0a1.8,1.8 0 1,0 -3.6,0 M936.2,756.3a1.8,1.8 0 1,0 3.6,0a1.8,1.8 0 1,0 -3.6,0 M936.5,790.8a1.8,1.8 0 1,0 3.6,0a1.8,1.8 0 1,0 -3.6,0 M934.9,782.6a1.8,1.8 0 1,0 3.6,0a1.8,1.8 0 1,0 -3.6,0" fill="#080890"/><path d="M748,468 747.7,489.4 747.4,510.7 747.1,532.1 746.7,553.5 746.4,574.8 746.1,596.2 745.8,617.6 745.5,638.9 745.2,660.3 744.8,681.7 744.5,703.1 744.2,724.4 743.9,745.8 743.6,767.2 743.3,788.5 742.9,809.9 742.6,831.3 742.3,852.6 742,874 761.4,900.9 761.8,879.3 762.2,857.8 762.6,836.2 763,814.7 763.4,793.1 763.8,771.6 764.2,750 764.6,728.5 765,706.9 765.4,685.4 765.8,663.8 766.2,642.2 766.6,620.7 767,599.1 767.4,577.6 767.8,556 768.2,534.5 768.6,512.9 769,491.4Z" fill="#a2a2a2"/><path d="M769,491.4 768.6,512.9 768.2,534.5 767.8,556 767.4,577.6 767,599.1 766.6,620.7 766.2,642.2 765.8,663.8 765.4,685.4 765,706.9 764.6,728.5 764.2,750 763.8,771.6 763.4,793.1 763,814.7 762.6,836.2 762.2,857.8 761.8,879.3 761.4,900.9 776.4,908.4 776.9,886.8 777.3,865.2 777.8,843.5 778.3,821.9 778.7,800.3 779.2,778.6 779.6,757 780.1,735.4 780.6,713.7 781,692.1 781.5,670.5 782,648.8 782.4,627.2 782.9,605.6 783.3,583.9 783.8,562.3 784.3,540.7 784.7,519.1 785.2,497.4Z" fill="#b8b8b8"/><path d="M785.2,497.4 784.7,519.1 784.3,540.7 783.8,562.3 783.3,583.9 782.9,605.6 782.4,627.2 782,648.8 781.5,670.5 781,692.1 780.6,713.7 780.1,735.4 779.6,757 779.2,778.6 778.7,800.3 778.3,821.9 777.8,843.5 777.3,865.2 776.9,886.8 776.4,908.4 792,913.6 792.5,891.9 793,870.2 793.5,848.5 794.1,826.8 794.6,805.1 795.1,783.4 795.7,761.7 796.2,740 796.7,718.3 797.2,696.6 797.8,674.9 798.3,653.2 798.8,631.5 799.4,609.8 799.9,588.1 800.4,566.4 800.9,544.7 801.5,523 802,501.3Z" fill="#c8c8c8"/><path d="M802,501.3 801.5,523 800.9,544.7 800.4,566.4 799.9,588.1 799.4,609.8 798.8,631.5 798.3,653.2 797.8,674.9 797.2,696.6 796.7,718.3 796.2,740 795.7,761.7 795.1,783.4 794.6,805.1 794.1,826.8 793.5,848.5 793,870.2 792.5,891.9 792,913.6 811,917.6 811.6,895.9 812.2,874.1 812.8,852.3 813.4,830.5 814.1,808.7 814.7,787 815.3,765.2 815.9,743.4 816.5,721.6 817.1,699.9 817.7,678.1 818.3,656.3 818.9,634.5 819.5,612.7 820.2,591 820.8,569.2 821.4,547.4 822,525.6 822.6,503.9Z" fill="#d2d2d2"/><path d="M822.6,503.9 822,525.6 821.4,547.4 820.8,569.2 820.2,591 819.5,612.7 818.9,634.5 818.3,656.3 817.7,678.1 817.1,699.9 816.5,721.6 815.9,743.4 815.3,765.2 814.7,787 814.1,808.7 813.4,830.5 812.8,852.3 812.2,874.1 811.6,895.9 811,917.6 830.8,919.6 831.5,897.8 832.2,876 832.9,854.1 833.6,832.3 834.3,810.4 835,788.6 835.7,766.7 836.4,744.9 837.1,723 837.7,701.2 838.4,679.3 839.1,657.5 839.8,635.6 840.5,613.8 841.2,592 841.9,570.1 842.6,548.3 843.3,526.4 844,504.6Z" fill="#d8d8d8"/><path d="M844,504.6 843.3,526.4 842.6,548.3 841.9,570.1 841.2,592 840.5,613.8 839.8,635.6 839.1,657.5 838.4,679.3 837.7,701.2 837.1,723 836.4,744.9 835.7,766.7 835,788.6 834.3,810.4 833.6,832.3 832.9,854.1 832.2,876 831.5,897.8 830.8,919.6 850.8,919.7 851.6,897.8 852.3,875.8 853.1,853.9 853.9,832 854.7,810.1 855.5,788.2 856.2,766.3 857,744.4 857.8,722.5 858.6,700.6 859.4,678.7 860.1,656.8 860.9,634.9 861.7,613 862.5,591.1 863.3,569.2 864,547.3 864.8,525.4 865.6,503.5Z" fill="#d9d9d9"/><path d="M865.6,503.5 864.8,525.4 864,547.3 863.3,569.2 862.5,591.1 861.7,613 860.9,634.9 860.1,656.8 859.4,678.7 858.6,700.6 857.8,722.5 857,744.4 856.2,766.3 855.5,788.2 854.7,810.1 853.9,832 853.1,853.9 852.3,875.8 851.6,897.8 850.8,919.7 869.6,917.7 870.5,895.8 871.4,873.8 872.2,851.9 873.1,829.9 874,808 874.8,786 875.7,764.1 876.5,742.1 877.4,720.2 878.3,698.2 879.1,676.2 880,654.3 880.8,632.3 881.7,610.4 882.6,588.4 883.4,566.5 884.3,544.5 885.1,522.6 886,500.6Z" fill="#d4d4d4"/><path d="M886,500.6 885.1,522.6 884.3,544.5 883.4,566.5 882.6,588.4 881.7,610.4 880.8,632.3 880,654.3 879.1,676.2 878.3,698.2 877.4,720.2 876.5,742.1 875.7,764.1 874.8,786 874,808 873.1,829.9 872.2,851.9 871.4,873.8 870.5,895.8 869.6,917.7 887.4,913.8 888.3,891.8 889.3,869.8 890.2,847.9 891.2,825.9 892.1,803.9 893,781.9 894,759.9 894.9,737.9 895.8,715.9 896.8,693.9 897.7,672 898.6,650 899.6,628 900.5,606 901.5,584 902.4,562 903.3,540 904.3,518 905.2,496.1Z" fill="#cacaca"/><path d="M905.2,496.1 904.3,518 903.3,540 902.4,562 901.5,584 900.5,606 899.6,628 898.6,650 897.7,672 896.8,693.9 895.8,715.9 894.9,737.9 894,759.9 893,781.9 892.1,803.9 891.2,825.9 890.2,847.9 889.3,869.8 888.3,891.8 887.4,913.8 902,908.4 903,886.4 904,864.4 905,842.4 906,820.4 907,798.4 908,776.4 909,754.4 910,732.4 911,710.4 912,688.4 913,666.4 914,644.4 915,622.4 916,600.4 917,578.4 918,556.3 919,534.3 920,512.3 921,490.3Z" fill="#bcbcbc"/><path d="M921,490.3 920,512.3 919,534.3 918,556.3 917,578.4 916,600.4 915,622.4 914,644.4 913,666.4 912,688.4 911,710.4 910,732.4 909,754.4 908,776.4 907,798.4 906,820.4 905,842.4 904,864.4 903,886.4 902,908.4 915.9,900 917,878 918,856 919.1,833.9 920.1,811.9 921.2,789.9 922.2,767.9 923.3,745.9 924.4,723.9 925.4,701.9 926.5,679.9 927.5,657.9 928.6,635.9 929.7,613.9 930.7,591.9 931.8,569.9 932.8,547.8 933.9,525.8 934.9,503.8 936,481.8Z" fill="#a8a8a8"/><path d="M936,481.8 934.9,503.8 933.9,525.8 932.8,547.8 931.8,569.9 930.7,591.9 929.7,613.9 928.6,635.9 927.5,657.9 926.5,679.9 925.4,701.9 924.4,723.9 923.3,745.9 922.2,767.9 921.2,789.9 920.1,811.9 919.1,833.9 918,856 917,878 915.9,900 927,880 928.1,858.1 929.2,836.1 930.3,814.2 931.4,792.2 932.5,770.3 933.6,748.3 934.7,726.4 935.8,704.4 936.9,682.5 938.1,660.5 939.2,638.6 940.3,616.6 941.4,594.7 942.5,572.7 943.6,550.8 944.7,528.8 945.8,506.9 946.9,484.9 948,463Z" fill="#969696"/><path d="M769,491.4 768.6,512.9 768.2,534.5 767.8,556 767.4,577.6 767,599.1 766.6,620.7 766.2,642.2 765.8,663.8 765.4,685.4 765,706.9 764.6,728.5 764.2,750 763.8,771.6 763.4,793.1 763,814.7 762.6,836.2 762.2,857.8 761.8,879.3 761.4,900.9 M785.2,497.4 784.7,519.1 784.3,540.7 783.8,562.3 783.3,583.9 782.9,605.6 782.4,627.2 782,648.8 781.5,670.5 781,692.1 780.6,713.7 780.1,735.4 779.6,757 779.2,778.6 778.7,800.3 778.3,821.9 777.8,843.5 777.3,865.2 776.9,886.8 776.4,908.4 M802,501.3 801.5,523 800.9,544.7 800.4,566.4 799.9,588.1 799.4,609.8 798.8,631.5 798.3,653.2 797.8,674.9 797.2,696.6 796.7,718.3 796.2,740 795.7,761.7 795.1,783.4 794.6,805.1 794.1,826.8 793.5,848.5 793,870.2 792.5,891.9 792,913.6 M822.6,503.9 822,525.6 821.4,547.4 820.8,569.2 820.2,591 819.5,612.7 818.9,634.5 818.3,656.3 817.7,678.1 817.1,699.9 816.5,721.6 815.9,743.4 815.3,765.2 814.7,787 814.1,808.7 813.4,830.5 812.8,852.3 812.2,874.1 811.6,895.9 811,917.6 M844,504.6 843.3,526.4 842.6,548.3 841.9,570.1 841.2,592 840.5,613.8 839.8,635.6 839.1,657.5 838.4,679.3 837.7,701.2 837.1,723 836.4,744.9 835.7,766.7 835,788.6 834.3,810.4 833.6,832.3 832.9,854.1 832.2,876 831.5,897.8 830.8,919.6 M865.6,503.5 864.8,525.4 864,547.3 863.3,569.2 862.5,591.1 861.7,613 860.9,634.9 860.1,656.8 859.4,678.7 858.6,700.6 857.8,722.5 857,744.4 856.2,766.3 855.5,788.2 854.7,810.1 853.9,832 853.1,853.9 852.3,875.8 851.6,897.8 850.8,919.7 M886,500.6 885.1,522.6 884.3,544.5 883.4,566.5 882.6,588.4 881.7,610.4 880.8,632.3 880,654.3 879.1,676.2 878.3,698.2 877.4,720.2 876.5,742.1 875.7,764.1 874.8,786 874,808 873.1,829.9 872.2,851.9 871.4,873.8 870.5,895.8 869.6,917.7 M905.2,496.1 904.3,518 903.3,540 902.4,562 901.5,584 900.5,606 899.6,628 898.6,650 897.7,672 896.8,693.9 895.8,715.9 894.9,737.9 894,759.9 893,781.9 892.1,803.9 891.2,825.9 890.2,847.9 889.3,869.8 888.3,891.8 887.4,913.8 M921,490.3 920,512.3 919,534.3 918,556.3 917,578.4 916,600.4 915,622.4 914,644.4 913,666.4 912,688.4 911,710.4 910,732.4 909,754.4 908,776.4 907,798.4 906,820.4 905,842.4 904,864.4 903,886.4 902,908.4 M936,481.8 934.9,503.8 933.9,525.8 932.8,547.8 931.8,569.9 930.7,591.9 929.7,613.9 928.6,635.9 927.5,657.9 926.5,679.9 925.4,701.9 924.4,723.9 923.3,745.9 922.2,767.9 921.2,789.9 920.1,811.9 919.1,833.9 918,856 917,878 915.9,900 M748,468 769,491.4 785.2,497.4 802,501.3 822.6,503.9 844,504.6 865.6,503.5 886,500.6 905.2,496.1 921,490.3 936,481.8 948,463 M747.7,489.4 768.6,512.9 784.7,519.1 801.5,523 822,525.6 843.3,526.4 864.8,525.4 885.1,522.6 904.3,518 920,512.3 934.9,503.8 946.9,484.9 M747.4,510.7 768.2,534.5 784.3,540.7 800.9,544.7 821.4,547.4 842.6,548.3 864,547.3 884.3,544.5 903.3,540 919,534.3 933.9,525.8 945.8,506.9 M747.1,532.1 767.8,556 783.8,562.3 800.4,566.4 820.8,569.2 841.9,570.1 863.3,569.2 883.4,566.5 902.4,562 918,556.3 932.8,547.8 944.7,528.8 M746.7,553.5 767.4,577.6 783.3,583.9 799.9,588.1 820.2,591 841.2,592 862.5,591.1 882.6,588.4 901.5,584 917,578.4 931.8,569.9 943.6,550.8 M746.4,574.8 767,599.1 782.9,605.6 799.4,609.8 819.5,612.7 840.5,613.8 861.7,613 881.7,610.4 900.5,606 916,600.4 930.7,591.9 942.5,572.7 M746.1,596.2 766.6,620.7 782.4,627.2 798.8,631.5 818.9,634.5 839.8,635.6 860.9,634.9 880.8,632.3 899.6,628 915,622.4 929.7,613.9 941.4,594.7 M745.8,617.6 766.2,642.2 782,648.8 798.3,653.2 818.3,656.3 839.1,657.5 860.1,656.8 880,654.3 898.6,650 914,644.4 928.6,635.9 940.3,616.6 M745.5,638.9 765.8,663.8 781.5,670.5 797.8,674.9 817.7,678.1 838.4,679.3 859.4,678.7 879.1,676.2 897.7,672 913,666.4 927.5,657.9 939.2,638.6 M745.2,660.3 765.4,685.4 781,692.1 797.2,696.6 817.1,699.9 837.7,701.2 858.6,700.6 878.3,698.2 896.8,693.9 912,688.4 926.5,679.9 938.1,660.5 M744.8,681.7 765,706.9 780.6,713.7 796.7,718.3 816.5,721.6 837.1,723 857.8,722.5 877.4,720.2 895.8,715.9 911,710.4 925.4,701.9 936.9,682.5 M744.5,703.1 764.6,728.5 780.1,735.4 796.2,740 815.9,743.4 836.4,744.9 857,744.4 876.5,742.1 894.9,737.9 910,732.4 924.4,723.9 935.8,704.4 M744.2,724.4 764.2,750 779.6,757 795.7,761.7 815.3,765.2 835.7,766.7 856.2,766.3 875.7,764.1 894,759.9 909,754.4 923.3,745.9 934.7,726.4 M743.9,745.8 763.8,771.6 779.2,778.6 795.1,783.4 814.7,787 835,788.6 855.5,788.2 874.8,786 893,781.9 908,776.4 922.2,767.9 933.6,748.3 M743.6,767.2 763.4,793.1 778.7,800.3 794.6,805.1 814.1,808.7 834.3,810.4 854.7,810.1 874,808 892.1,803.9 907,798.4 921.2,789.9 932.5,770.3 M743.3,788.5 763,814.7 778.3,821.9 794.1,826.8 813.4,830.5 833.6,832.3 853.9,832 873.1,829.9 891.2,825.9 906,820.4 920.1,811.9 931.4,792.2 M742.9,809.9 762.6,836.2 777.8,843.5 793.5,848.5 812.8,852.3 832.9,854.1 853.1,853.9 872.2,851.9 890.2,847.9 905,842.4 919.1,833.9 930.3,814.2 M742.6,831.3 762.2,857.8 777.3,865.2 793,870.2 812.2,874.1 832.2,876 852.3,875.8 871.4,873.8 889.3,869.8 904,864.4 918,856 929.2,836.1 M742.3,852.6 761.8,879.3 776.9,886.8 792.5,891.9 811.6,895.9 831.5,897.8 851.6,897.8 870.5,895.8 888.3,891.8 903,886.4 917,878 928.1,858.1 M742,874 761.4,900.9 776.4,908.4 792,913.6 811,917.6 830.8,919.6 850.8,919.7 869.6,917.7 887.4,913.8 902,908.4 915.9,900 927,880 M769,491.4 747.7,489.4 M785.2,497.4 768.6,512.9 M802,501.3 784.7,519.1 M822.6,503.9 801.5,523 M844,504.6 822,525.6 M865.6,503.5 843.3,526.4 M886,500.6 864.8,525.4 M905.2,496.1 885.1,522.6 M921,490.3 904.3,518 M936,481.8 920,512.3 M948,463 934.9,503.8 M768.6,512.9 747.4,510.7 M784.7,519.1 768.2,534.5 M801.5,523 784.3,540.7 M822,525.6 800.9,544.7 M843.3,526.4 821.4,547.4 M864.8,525.4 842.6,548.3 M885.1,522.6 864,547.3 M904.3,518 884.3,544.5 M920,512.3 903.3,540 M934.9,503.8 919,534.3 M946.9,484.9 933.9,525.8 M768.2,534.5 747.1,532.1 M784.3,540.7 767.8,556 M800.9,544.7 783.8,562.3 M821.4,547.4 800.4,566.4 M842.6,548.3 820.8,569.2 M864,547.3 841.9,570.1 M884.3,544.5 863.3,569.2 M903.3,540 883.4,566.5 M919,534.3 902.4,562 M933.9,525.8 918,556.3 M945.8,506.9 932.8,547.8 M767.8,556 746.7,553.5 M783.8,562.3 767.4,577.6 M800.4,566.4 783.3,583.9 M820.8,569.2 799.9,588.1 M841.9,570.1 820.2,591 M863.3,569.2 841.2,592 M883.4,566.5 862.5,591.1 M902.4,562 882.6,588.4 M918,556.3 901.5,584 M932.8,547.8 917,578.4 M944.7,528.8 931.8,569.9 M767.4,577.6 746.4,574.8 M783.3,583.9 767,599.1 M799.9,588.1 782.9,605.6 M820.2,591 799.4,609.8 M841.2,592 819.5,612.7 M862.5,591.1 840.5,613.8 M882.6,588.4 861.7,613 M901.5,584 881.7,610.4 M917,578.4 900.5,606 M931.8,569.9 916,600.4 M943.6,550.8 930.7,591.9 M767,599.1 746.1,596.2 M782.9,605.6 766.6,620.7 M799.4,609.8 782.4,627.2 M819.5,612.7 798.8,631.5 M840.5,613.8 818.9,634.5 M861.7,613 839.8,635.6 M881.7,610.4 860.9,634.9 M900.5,606 880.8,632.3 M916,600.4 899.6,628 M930.7,591.9 915,622.4 M942.5,572.7 929.7,613.9 M766.6,620.7 745.8,617.6 M782.4,627.2 766.2,642.2 M798.8,631.5 782,648.8 M818.9,634.5 798.3,653.2 M839.8,635.6 818.3,656.3 M860.9,634.9 839.1,657.5 M880.8,632.3 860.1,656.8 M899.6,628 880,654.3 M915,622.4 898.6,650 M929.7,613.9 914,644.4 M941.4,594.7 928.6,635.9 M766.2,642.2 745.5,638.9 M782,648.8 765.8,663.8 M798.3,653.2 781.5,670.5 M818.3,656.3 797.8,674.9 M839.1,657.5 817.7,678.1 M860.1,656.8 838.4,679.3 M880,654.3 859.4,678.7 M898.6,650 879.1,676.2 M914,644.4 897.7,672 M928.6,635.9 913,666.4 M940.3,616.6 927.5,657.9 M765.8,663.8 745.2,660.3 M781.5,670.5 765.4,685.4 M797.8,674.9 781,692.1 M817.7,678.1 797.2,696.6 M838.4,679.3 817.1,699.9 M859.4,678.7 837.7,701.2 M879.1,676.2 858.6,700.6 M897.7,672 878.3,698.2 M913,666.4 896.8,693.9 M927.5,657.9 912,688.4 M939.2,638.6 926.5,679.9 M765.4,685.4 744.8,681.7 M781,692.1 765,706.9 M797.2,696.6 780.6,713.7 M817.1,699.9 796.7,718.3 M837.7,701.2 816.5,721.6 M858.6,700.6 837.1,723 M878.3,698.2 857.8,722.5 M896.8,693.9 877.4,720.2 M912,688.4 895.8,715.9 M926.5,679.9 911,710.4 M938.1,660.5 925.4,701.9 M765,706.9 744.5,703.1 M780.6,713.7 764.6,728.5 M796.7,718.3 780.1,735.4 M816.5,721.6 796.2,740 M837.1,723 815.9,743.4 M857.8,722.5 836.4,744.9 M877.4,720.2 857,744.4 M895.8,715.9 876.5,742.1 M911,710.4 894.9,737.9 M925.4,701.9 910,732.4 M936.9,682.5 924.4,723.9 M764.6,728.5 744.2,724.4 M780.1,735.4 764.2,750 M796.2,740 779.6,757 M815.9,743.4 795.7,761.7 M836.4,744.9 815.3,765.2 M857,744.4 835.7,766.7 M876.5,742.1 856.2,766.3 M894.9,737.9 875.7,764.1 M910,732.4 894,759.9 M924.4,723.9 909,754.4 M935.8,704.4 923.3,745.9 M764.2,750 743.9,745.8 M779.6,757 763.8,771.6 M795.7,761.7 779.2,778.6 M815.3,765.2 795.1,783.4 M835.7,766.7 814.7,787 M856.2,766.3 835,788.6 M875.7,764.1 855.5,788.2 M894,759.9 874.8,786 M909,754.4 893,781.9 M923.3,745.9 908,776.4 M934.7,726.4 922.2,767.9 M763.8,771.6 743.6,767.2 M779.2,778.6 763.4,793.1 M795.1,783.4 778.7,800.3 M814.7,787 794.6,805.1 M835,788.6 814.1,808.7 M855.5,788.2 834.3,810.4 M874.8,786 854.7,810.1 M893,781.9 874,808 M908,776.4 892.1,803.9 M922.2,767.9 907,798.4 M933.6,748.3 921.2,789.9 M763.4,793.1 743.3,788.5 M778.7,800.3 763,814.7 M794.6,805.1 778.3,821.9 M814.1,808.7 794.1,826.8 M834.3,810.4 813.4,830.5 M854.7,810.1 833.6,832.3 M874,808 853.9,832 M892.1,803.9 873.1,829.9 M907,798.4 891.2,825.9 M921.2,789.9 906,820.4 M932.5,770.3 920.1,811.9 M763,814.7 742.9,809.9 M778.3,821.9 762.6,836.2 M794.1,826.8 777.8,843.5 M813.4,830.5 793.5,848.5 M833.6,832.3 812.8,852.3 M853.9,832 832.9,854.1 M873.1,829.9 853.1,853.9 M891.2,825.9 872.2,851.9 M906,820.4 890.2,847.9 M920.1,811.9 905,842.4 M931.4,792.2 919.1,833.9 M762.6,836.2 742.6,831.3 M777.8,843.5 762.2,857.8 M793.5,848.5 777.3,865.2 M812.8,852.3 793,870.2 M832.9,854.1 812.2,874.1 M853.1,853.9 832.2,876 M872.2,851.9 852.3,875.8 M890.2,847.9 871.4,873.8 M905,842.4 889.3,869.8 M919.1,833.9 904,864.4 M930.3,814.2 918,856 M762.2,857.8 742.3,852.6 M777.3,865.2 761.8,879.3 M793,870.2 776.9,886.8 M812.2,874.1 792.5,891.9 M832.2,876 811.6,895.9 M852.3,875.8 831.5,897.8 M871.4,873.8 851.6,897.8 M889.3,869.8 870.5,895.8 M904,864.4 888.3,891.8 M918,856 903,886.4 M929.2,836.1 917,878 M761.8,879.3 742,874 M776.9,886.8 761.4,900.9 M792.5,891.9 776.4,908.4 M811.6,895.9 792,913.6 M831.5,897.8 811,917.6 M851.6,897.8 830.8,919.6 M870.5,895.8 850.8,919.7 M888.3,891.8 869.6,917.7 M903,886.4 887.4,913.8 M917,878 902,908.4 M928.1,858.1 915.9,900" fill="none" stroke="#858585" stroke-width="0.9"/><ellipse cx="848" cy="474" rx="100" ry="31" transform="rotate(-1.5 848 474)" fill="#6c6c6c" stroke="#8a8a8a" stroke-width="0.8"/><path d="M796.3,507.4 786,512.8 M790.4,513.4 779,518.6 M815.6,510.4 809.2,516.2 M808.4,516.9 800.6,522.6 M836.7,511.7 834.5,517.8 M829.2,518.9 825.6,524.9 M858.2,511.2 860.3,517.2 M850.6,519.1 851.3,525 M879,509 885.2,514.5 M871.8,517.4 876.7,523.1 M898.6,505.1 908.7,510 M891.7,514.1 900.6,519.2 M795.8,529 785.5,534.4 M789.9,535.1 778.5,540.2 M815,532.2 808.6,538 M807.9,538.6 800,544.3 M836.1,533.6 833.8,539.6 M828.6,540.7 824.9,546.7 M857.5,533.1 859.6,539.1 M849.9,540.9 850.5,546.9 M878.2,530.9 884.4,536.5 M871,539.3 875.9,545 M897.7,527 907.8,532 M890.9,536 899.7,541.2 M795.3,550.7 785,556.1 M789.5,556.7 778,561.9 M814.4,553.9 808,559.7 M807.3,560.4 799.5,566 M835.4,555.4 833.2,561.4 M828,562.5 824.3,568.5 M856.7,555 858.8,560.9 M849.2,562.8 849.8,568.8 M877.3,552.9 883.6,558.5 M870.2,561.3 875,567 M896.7,549 906.9,554 M890,558 898.8,563.2 M794.8,572.4 784.5,577.7 M789,578.4 777.5,583.5 M813.9,575.7 807.4,581.5 M806.8,582.1 798.9,587.8 M834.7,577.2 832.5,583.2 M827.3,584.3 823.7,590.3 M856,576.9 858.1,582.8 M848.5,584.7 849.1,590.6 M876.5,574.8 882.7,580.4 M869.4,583.2 874.2,588.9 M895.8,571 906,576 M889.1,580 898,585.2 M794.3,594.1 784,599.4 M788.5,600 777,605.1 M813.3,597.4 806.8,603.2 M806.2,603.8 798.4,609.5 M834.1,599 831.8,605 M826.7,606.1 823,612.1 M855.2,598.8 857.3,604.7 M847.8,606.5 848.4,612.5 M875.7,596.8 881.9,602.4 M868.6,605.1 873.4,610.9 M894.9,593 905.1,598 M888.2,601.9 897.1,607.2 M793.8,615.8 783.4,621 M788,621.7 776.5,626.7 M812.7,619.2 806.3,624.9 M805.6,625.6 797.8,631.2 M833.4,620.9 831.2,626.8 M826,627.9 822.4,633.8 M854.5,620.7 856.6,626.6 M847,628.4 847.7,634.4 M874.8,618.7 881.1,624.3 M867.8,627 872.6,632.8 M894,614.9 904.2,620 M887.3,623.9 896.2,629.2 M793.2,637.4 782.9,642.7 M787.5,643.4 776.1,648.4 M812.1,640.9 805.7,646.7 M805.1,647.3 797.3,652.9 M832.7,642.7 830.5,648.7 M825.4,649.7 821.7,655.6 M853.7,642.6 855.8,648.5 M846.3,650.3 846.9,656.2 M874,640.6 880.2,646.3 M867,648.9 871.8,654.7 M893.1,636.9 903.3,642 M886.4,645.9 895.3,651.2 M792.7,659.1 782.4,664.3 M787,665 775.6,670 M811.5,662.7 805.1,668.4 M804.5,669 796.7,674.6 M832,664.5 829.8,670.5 M824.8,671.5 821.1,677.4 M853,664.5 855.1,670.4 M845.6,672.1 846.2,678.1 M873.2,662.6 879.4,668.2 M866.1,670.9 871,676.7 M892.2,658.9 902.4,664 M885.5,667.8 894.4,673.2 M792.2,680.8 781.9,686 M786.5,686.7 775.1,691.6 M810.9,684.4 804.5,690.1 M804,690.7 796.1,696.3 M831.4,686.3 829.2,692.3 M824.1,693.3 820.5,699.2 M852.2,686.3 854.3,692.3 M844.9,694 845.5,700 M872.3,684.5 878.6,690.2 M865.3,692.8 870.2,698.6 M891.3,680.9 901.4,686 M884.7,689.8 893.5,695.2 M791.7,702.5 781.4,707.6 M786.1,708.3 774.6,713.2 M810.4,706.2 803.9,711.9 M803.4,712.5 795.6,718 M830.7,708.2 828.5,714.1 M823.5,715.1 819.8,721 M851.5,708.2 853.6,714.2 M844.1,715.9 844.8,721.9 M871.5,706.4 877.7,712.2 M864.5,714.7 869.4,720.5 M890.4,702.9 900.5,708 M883.8,711.8 892.6,717.1 M791.2,724.2 780.9,729.3 M785.6,730 774.1,734.8 M809.8,727.9 803.3,733.6 M802.9,734.2 795,739.7 M830,730 827.8,735.9 M822.9,736.9 819.2,742.8 M850.7,730.1 852.8,736.1 M843.4,737.7 844,743.7 M870.7,728.4 876.9,734.1 M863.7,736.6 868.6,742.5 M889.5,724.8 899.6,730 M882.9,733.7 891.8,739.1 M790.7,745.8 780.4,750.9 M785.1,751.6 773.6,756.5 M809.2,749.7 802.8,755.3 M802.3,755.9 794.5,761.4 M829.4,751.8 827.2,757.8 M822.2,758.7 818.5,764.6 M850,752 852,758 M842.7,759.6 843.3,765.6 M869.8,750.3 876.1,756.1 M862.9,758.6 867.8,764.4 M888.5,746.8 898.7,752 M882,755.7 890.9,761.1 M790.2,767.5 779.9,772.6 M784.6,773.3 773.2,778.1 M808.6,771.5 802.2,777.1 M801.8,777.7 793.9,783.1 M828.7,773.6 826.5,779.6 M821.6,780.5 817.9,786.4 M849.2,773.9 851.3,779.9 M842,781.5 842.6,787.5 M869,772.3 875.2,778 M862.1,780.5 867,786.3 M887.6,768.8 897.8,774.1 M881.1,777.7 890,783.1 M789.7,789.2 779.4,794.2 M784.1,794.9 772.7,799.7 M808,793.2 801.6,798.8 M801.2,799.4 793.4,804.8 M828,795.5 825.8,801.4 M820.9,802.3 817.3,808.2 M848.4,795.8 850.5,801.8 M841.2,803.3 841.9,809.3 M868.2,794.2 874.4,800 M861.3,802.4 866.2,808.3 M886.7,790.8 896.9,796.1 M880.2,799.6 889.1,805.1 M789.2,810.9 778.9,815.9 M783.6,816.6 772.2,821.3 M807.4,815 801,820.5 M800.6,821.1 792.8,826.5 M827.4,817.3 825.2,823.2 M820.3,824.1 816.6,830 M847.7,817.7 849.8,823.7 M840.5,825.2 841.1,831.2 M867.3,816.1 873.6,821.9 M860.5,824.3 865.4,830.2 M885.8,812.7 896,818.1 M879.3,821.6 888.2,827.1 M788.7,832.6 778.4,837.5 M783.2,838.3 771.7,843 M806.9,836.7 800.4,842.3 M800.1,842.8 792.3,848.2 M826.7,839.1 824.5,845 M819.7,845.9 816,851.8 M846.9,839.6 849,845.6 M839.8,847.1 840.4,853.1 M866.5,838.1 872.7,843.9 M859.7,846.2 864.6,852.2 M884.9,834.7 895.1,840.1 M878.5,843.5 887.3,849.1 M788.2,854.2 777.9,859.2 M782.7,859.9 771.2,864.6 M806.3,858.5 799.8,864 M799.5,864.6 791.7,869.9 M826,860.9 823.8,866.8 M819,867.7 815.4,873.5 M846.2,861.4 848.3,867.5 M839.1,868.9 839.7,874.9 M865.6,860 871.9,865.9 M858.9,868.2 863.8,874.1 M884,856.7 894.2,862.1 M877.6,865.5 886.4,871.1 M787.7,875.9 777.4,880.8 M782.2,881.6 770.7,886.2 M805.7,880.2 799.3,885.7 M799,886.3 791.1,891.6 M825.4,882.8 823.2,888.7 M818.4,889.5 814.7,895.3 M845.4,883.3 847.5,889.3 M838.4,890.8 839,896.8 M864.8,882 871.1,887.8 M858.1,890.1 862.9,896 M883.1,878.7 893.2,884.1 M876.7,887.5 885.6,893.1 M787.2,897.6 776.9,902.4 M781.7,903.2 770.3,907.8 M805.1,902 798.7,907.5 M798.4,908 790.6,913.3 M824.7,904.6 822.5,910.5 M817.7,911.3 814.1,917.1 M844.7,905.2 846.8,911.2 M837.6,912.7 838.3,918.7 M864,903.9 870.2,909.8 M857.3,912 862.1,918 M882.2,900.7 892.3,906.1 M875.8,909.4 884.7,915.1" stroke="#1010b0" stroke-width="1.0" fill="none"/><path d="M761.9,494.7 744.8,498.2 M754.7,496.5 736.1,499.1 M779.7,502.9 766.1,507.6 M774.1,508.2 759.3,512.6 M915.5,499.7 929,503.8 M909.8,509.1 922.3,513.5 M930.7,492.4 947.3,495.3 M925.3,502.7 940.9,506.1 M943.7,481.2 962.9,482.4 M939.2,493.3 957.6,495.2 M761.6,516.2 744.4,519.7 M754.4,517.9 735.7,520.5 M779.3,524.5 765.6,529.2 M773.6,529.8 758.9,534.1 M914.5,521.7 928,525.8 M908.8,531.1 921.3,535.6 M929.7,514.4 946.3,517.4 M924.2,524.7 939.8,528.1 M942.6,503.2 961.8,504.5 M938.2,515.3 956.6,517.2 M761.2,537.7 744,541.1 M754,539.4 735.4,541.9 M778.8,546.1 765.2,550.7 M773.2,551.3 758.5,555.7 M913.5,543.7 927.1,547.9 M907.9,553.1 920.3,557.6 M928.6,536.4 945.2,539.5 M923.2,546.7 938.8,550.2 M941.5,525.2 960.7,526.5 M937.1,537.3 955.5,539.3 M760.8,559.2 743.6,562.6 M753.7,560.9 735.1,563.4 M778.4,567.7 764.8,572.3 M772.8,572.9 758.1,577.2 M912.5,565.7 926.1,569.9 M906.9,575.1 919.4,579.6 M927.6,558.4 944.2,561.5 M922.2,568.8 937.8,572.3 M940.4,547.2 959.6,548.6 M936,559.3 954.4,561.3 M760.5,580.7 743.3,584 M753.3,582.3 734.7,584.8 M777.9,589.3 764.3,593.9 M772.4,594.5 757.7,598.8 M911.6,587.7 925.1,592 M905.9,597.1 918.4,601.6 M926.6,580.4 943.2,583.6 M921.2,590.8 936.8,594.3 M939.3,569.2 958.5,570.6 M934.9,581.3 953.3,583.4 M760.1,602.3 742.9,605.5 M753,603.8 734.4,606.2 M777.5,610.9 763.9,615.4 M772,616.1 757.2,620.3 M910.6,609.7 924.1,614 M905,619.1 917.5,623.7 M925.5,602.5 942.1,605.6 M920.2,612.8 935.8,616.4 M938.2,591.2 957.4,592.6 M933.9,603.3 952.3,605.4 M759.7,623.8 742.5,627 M752.6,625.2 734,627.6 M777.1,632.5 763.4,637 M771.5,637.7 756.8,641.8 M909.6,631.7 923.2,636.1 M904,641.1 916.5,645.7 M924.5,624.5 941.1,627.7 M919.2,634.8 934.7,638.4 M937.1,613.2 956.4,614.7 M932.8,625.3 951.2,627.5 M759.3,645.3 742.2,648.4 M752.3,646.7 733.7,649 M776.6,654.1 763,658.6 M771.1,659.2 756.4,663.4 M908.6,653.7 922.2,658.1 M903.1,663.1 915.6,667.7 M923.4,646.5 940,649.7 M918.1,656.8 933.7,660.5 M936.1,635.2 955.3,636.7 M931.7,647.3 950.1,649.6 M759,666.8 741.8,669.9 M752,668.2 733.3,670.4 M776.2,675.7 762.5,680.1 M770.7,680.8 756,684.9 M907.6,675.7 921.2,680.1 M902.1,685.1 914.6,689.8 M922.4,668.5 939,671.8 M917.1,678.8 932.7,682.5 M935,657.2 954.2,658.8 M930.7,669.3 949,671.6 M758.6,688.3 741.4,691.3 M751.6,689.6 733,691.8 M775.7,697.3 762.1,701.7 M770.3,702.4 755.6,706.4 M906.7,697.7 920.2,702.2 M901.2,707.1 913.6,711.8 M921.4,690.5 938,693.9 M916.1,700.8 931.7,704.6 M933.9,679.1 953.1,680.8 M929.6,691.3 948,693.7 M758.2,709.8 741,712.8 M751.3,711.1 732.7,713.2 M775.3,718.9 761.7,723.3 M769.9,724 755.1,728 M905.7,719.7 919.2,724.2 M900.2,729.1 912.7,733.8 M920.3,712.5 936.9,715.9 M915.1,722.8 930.7,726.6 M932.8,701.1 952,702.9 M928.5,713.3 946.9,715.7 M757.9,731.3 740.7,734.3 M750.9,732.5 732.3,734.6 M774.9,740.6 761.2,744.8 M769.4,745.6 754.7,749.5 M904.7,741.8 918.3,746.3 M899.2,751.1 911.7,755.9 M919.3,734.5 935.9,738 M914.1,744.8 929.7,748.7 M931.7,723.1 950.9,724.9 M927.4,735.3 945.8,737.8 M757.5,752.8 740.3,755.7 M750.6,754 732,756 M774.4,762.2 760.8,766.4 M769,767.1 754.3,771 M903.7,763.8 917.3,768.3 M898.3,773.1 910.8,777.9 M918.2,756.5 934.9,760 M913,766.8 928.6,770.8 M930.6,745.1 949.8,747 M926.4,757.3 944.7,759.8 M757.1,774.3 739.9,777.2 M750.2,775.5 731.6,777.4 M774,783.8 760.3,788 M768.6,788.7 753.9,792.6 M902.7,785.8 916.3,790.3 M897.3,795.1 909.8,799.9 M917.2,778.5 933.8,782.1 M912,788.8 927.6,792.8 M929.5,767.1 948.7,769 M925.3,779.3 943.7,781.9 M756.7,795.9 739.6,798.6 M749.9,796.9 731.3,798.8 M773.5,805.4 759.9,809.5 M768.2,810.3 753.5,814.1 M901.8,807.8 915.3,812.4 M896.4,817.1 908.9,822 M916.2,800.5 932.8,804.2 M911,810.9 926.6,814.9 M928.4,789.1 947.6,791.1 M924.2,801.3 942.6,804 M756.4,817.4 739.2,820.1 M749.6,818.4 730.9,820.2 M773.1,827 759.5,831.1 M767.8,831.9 753,835.6 M900.8,829.8 914.3,834.4 M895.4,839.1 907.9,844 M915.1,822.6 931.7,826.2 M910,832.9 925.6,836.9 M927.3,811.1 946.5,813.1 M923.1,823.3 941.5,826 M756,838.9 738.8,841.6 M749.2,839.9 730.6,841.6 M772.6,848.6 759,852.7 M767.3,853.5 752.6,857.2 M899.8,851.8 913.4,856.5 M894.5,861.1 906.9,866 M914.1,844.6 930.7,848.3 M909,854.9 924.6,859 M926.2,833.1 945.4,835.2 M922.1,845.3 940.5,848.1 M755.6,860.4 738.5,863 M748.9,861.3 730.3,863 M772.2,870.2 758.6,874.2 M766.9,875 752.2,878.7 M898.8,873.8 912.4,878.5 M893.5,883.1 906,888.1 M913.1,866.6 929.7,870.3 M908,876.9 923.5,881 M925.2,855.1 944.4,857.3 M921,867.3 939.4,870.1 M755.3,881.9 738.1,884.5 M748.5,882.8 729.9,884.4 M771.8,891.8 758.1,895.8 M766.5,896.6 751.8,900.2 M897.9,895.8 911.4,900.6 M892.5,905.1 905,910.1 M912,888.6 928.6,892.4 M906.9,898.9 922.5,903.1 M924.1,877.1 943.3,879.3 M919.9,889.3 938.3,892.2 M751.2,472.1 728.7,474.4 M748.4,476.2 728,477.9 M748.9,480.2 726.1,482.9 M748.5,484.2 729.2,483.4 M748.7,488.3 730.4,489.2 M750.2,492.4 730.8,494.1 M751,496.4 727.8,494.3 M750.7,500.5 727.6,498.4 M747.5,504.5 726.8,501.8 M748.4,508.6 727.3,512 M750.4,512.7 732.7,515.6 M750.4,516.7 727.5,514.1 M750.3,520.8 729.7,518.6 M750.5,524.9 728.3,524 M750.1,528.9 730.1,526.8 M748.1,533 727.8,536.3 M747.2,537 727.4,540.3 M748.9,541.1 729.2,539.2 M750.2,545.2 734.2,545.6 M750.2,549.2 728.8,550.5 M747,553.3 723.4,552.8 M749.1,557.4 733.1,555.6 M750.5,561.4 731.9,562.2 M746.7,565.5 723.6,565.1 M749.9,569.5 731.2,570.4 M749.5,573.6 729.3,574.7 M748.6,577.7 729.3,579.8 M747.9,581.7 725.4,584.2 M750.2,585.8 730.3,584.4 M747.5,589.8 728.8,590 M749.3,593.9 728.3,592.9 M748.3,597.9 725.2,600.2 M746.8,602 730.8,602.2 M749.1,606.1 727.9,605.9 M748.4,610.1 727.5,610.1 M746.7,614.2 725.2,615.2 M746.2,618.2 724.3,622.6 M749.4,622.3 727.2,624 M748.8,626.4 726.3,629 M747.3,630.4 728.9,631.6 M749.3,634.5 728.2,634.6 M746,638.6 729.7,638.9 M747.2,642.6 723.9,644.2 M749.1,646.7 728.4,647.6 M745.7,650.7 726.5,653.4 M745.3,654.8 728.1,654.4 M749,658.8 732.3,657.3 M745.2,662.9 728.2,665.2 M745.8,666.9 724.1,665.5 M748.4,671 726.9,675 M747.8,675.1 727.1,672.5 M748.7,679.2 730.9,683.1 M747.4,683.2 731.5,686.4 M747.7,687.2 729.4,685.6 M744.9,691.3 725.1,691.5 M747.3,695.4 728,694 M747.2,699.5 728.3,700.7 M747.7,703.5 728.7,702.3 M745.6,707.5 725.4,704.8 M747.7,711.6 726.1,711.5 M747.7,715.7 723.9,718 M747.8,719.7 728.5,719.2 M747.8,723.8 727,726.1 M745.2,727.9 729.2,728.1 M747.6,731.9 725.3,729.9 M747.5,736 725.1,738.5 M747.2,740.1 724.7,737.3 M744.3,744.1 725.6,742.8 M746.9,748.2 729.3,750.6 M746.5,752.2 725.7,755.1 M746.7,756.3 728.7,757.3 M746.9,760.4 730.3,762.7 M747.2,764.4 726.6,765 M745.9,768.5 726.2,771.4 M746.3,772.5 728.9,772.9 M745.5,776.6 726.5,780.4 M744.9,780.6 720.9,780.1 M743.9,784.7 721.7,786.6 M743.3,788.7 723.6,785.9 M745.1,792.8 722.3,795.5 M744.8,796.9 722.7,795.5 M746.9,800.9 724.6,805.3 M743.7,805 726.3,808.6 M746.4,809.1 726.3,806.5 M743.2,813.1 719.9,814.7 M746.7,817.2 729.7,817.5 M746.6,821.3 725.5,822.8 M743.4,825.3 724.1,822.6 M742.8,829.4 725.1,831 M746.2,833.4 723.3,837.9 M745.4,837.5 723.5,834.3 M743.1,841.6 726.9,839.7 M743.6,845.6 722.3,844.3 M743.7,849.7 726.9,852.7 M743,853.7 723.3,857 M742.3,857.8 721,860.8 M745.9,861.8 729.8,860.1 M745.7,865.9 722.7,867 M745.8,870 729,870 M946.4,466.9 966,468.7 M947,471.1 967.9,469.8 M945.2,475.1 966.5,480.1 M945.5,479.2 963.7,479.6 M945.6,483.2 968.3,485.3 M943.2,487.3 961.3,492.4 M943,491.2 959.4,491.3 M945.2,495.3 965,495.2 M942.2,499.2 960.7,504.1 M944.8,503.3 961.5,502.5 M944.6,507.3 966.2,505.6 M944.2,511.6 966.5,509.7 M943.2,515.6 965.9,517.2 M944.3,519.6 967.5,518.7 M941.9,523.6 959.3,523.6 M944.4,527.7 961,529.5 M943.7,531.7 961.8,535 M942,535.8 964.4,534.5 M942.5,539.8 964.2,538.4 M942.6,543.8 964.7,548.9 M943.7,547.8 963.6,549.7 M942.5,552 965.1,556.9 M942.7,556 961.5,558.6 M941,560.1 957,562 M940,564 956.7,568.1 M939.9,568.2 958.2,571.8 M939,572.1 955.5,573.9 M940.2,576.3 960.1,574.8 M941.2,580.4 964.8,579.2 M938.6,584.5 956.5,583.7 M940.9,588.5 962.4,591.4 M939.4,592.4 959.9,591.5 M938.4,596.6 961.3,595.6 M939.1,600.6 958.9,599.9 M940.3,604.6 959.3,609 M938.4,608.6 955.5,608.4 M936.7,612.7 959.3,614.2 M938.2,616.8 960.4,622.5 M938.7,620.8 960.9,621.6 M935.9,624.8 955,629.6 M936.3,629 958.7,631.3 M935.7,633 959.4,634.5 M937.8,637 958.7,635.8 M937,641.1 956.4,640.6 M935.7,645 959.4,648.3 M935.1,649.1 957.4,647.4 M937.4,653.1 958.5,653.5 M934.5,657.2 954.8,657.4 M936.3,661.2 956.4,661.7 M935.2,665.4 953.6,668 M935.5,669.4 959.2,671.3 M936.8,673.5 957,672.8 M935.6,677.5 953.9,677.7 M934.8,681.5 951.4,684 M934.2,685.6 954.6,689.2 M934.4,689.6 954.1,691.4 M935.4,693.7 953.9,695.7 M933.8,697.8 952.9,698.8 M935,701.8 957.9,703.8 M931.8,705.9 949.9,709.6 M935.3,709.8 952.6,711.3 M933.8,713.9 950.2,717.1 M934.3,717.9 951,721.2 M933.6,722 950.7,725 M931.4,726 952.2,728.2 M931.6,730.1 953.5,732 M931.5,734.1 953.7,733.2 M934.1,738.1 957,741 M930.1,742.2 950.1,743.6 M930.2,746.3 952.5,747.4 M931.7,750.3 951.3,750.8 M931.1,754.4 950.2,755.2 M929.7,758.4 952,760.1 M931.7,762.6 949.1,764.9 M932.4,766.5 953,767.2 M929.2,770.5 951.9,770.2 M928.7,774.7 948,773.6 M930.1,778.6 950.4,782.6 M927.9,782.7 948.2,784.9 M930.1,786.8 951.5,789.6 M927.7,790.8 946.5,792.9 M929.8,794.9 946.5,797.1 M927.6,798.8 948.1,800.8 M928.4,802.9 947.9,803.8 M927.4,807.1 947.6,807.8 M927.2,811.1 950.9,809.9 M927.5,815.1 950.1,821.3 M928.4,819.2 951.5,819.7 M927.8,823.3 947.9,823 M927.2,827.3 947.7,833.1 M929.3,831.3 950.1,835.6 M926.5,835.5 944.9,836.1 M926.7,839.4 949.4,839 M926.6,843.5 946.5,846.6 M924.6,847.5 944.9,848.9 M927.8,851.5 944.7,851 M927.5,855.6 944.1,859.4 M924.8,859.7 945.5,858.1 M926.5,863.7 948.7,864.6 M926.5,867.8 943.6,872.2 M926,871.8 946.7,873 M923.6,875.8 939.7,880.4 M746.6,879.4 737.6,889 M749.8,885.1 736.8,893 M750.6,889.6 739.1,899.5 M756.5,894.7 749.7,907.3 M759.6,898.2 751.2,911.3 M765.9,901.7 761.6,915.7 M770.2,902 766.4,915.4 M775.7,906.1 771.8,920.7 M781.5,909.8 776.8,923.2 M787.6,911.5 785.4,925.4 M793.4,911.4 791.5,924.7 M800,915.1 798.8,928 M805.7,915 801.8,931.4 M811.8,916.3 808.9,932.8 M818.4,917.7 815.6,931.6 M824.2,917.4 824.8,932.4 M830.5,916 829.4,932.2 M836.7,917.4 837.5,931.6 M842.9,917.8 842.9,935.1 M849.1,918.2 848.9,931.8 M855.3,917.8 857.9,932.9 M861.3,917.5 861.8,930.5 M867.5,916.5 868.8,929.1 M874,915.7 876.7,929.1 M879.5,914.6 881.8,927 M885.4,910.7 887.3,928 M891.8,912.2 894.1,924.6 M897.5,908.6 901.4,923.9 M903.3,904.5 909.3,919.1 M908.9,904.1 913.4,919 M912.7,900.9 921.9,913.3 M918.5,896.1 925.7,905.4 M921.1,890.4 928.8,897.2 M922.5,884.7 934.9,892.6" stroke="#0c0cc0" stroke-width="0.95" fill="none"/><path d="M743.8,498.4 749.6,494.9 750.5,499.4Z M735.1,499.3 741.1,496.1 741.8,500.6Z M765.1,507.9 769.8,504.2 771.1,508Z M758.4,512.9 763.8,508.8 765.2,513.3Z M930,504.1 924,504.4 925.2,500.6Z M923.2,513.9 917.2,513.9 918.6,510.1Z M948.3,495.5 941.6,496.7 942.4,492.1Z M941.8,506.3 935.1,507.2 936.1,502.7Z M963.9,482.5 957.4,484.4 957.6,479.8Z M958.6,495.3 952,496.9 952.5,492.3Z M743.4,519.9 749.2,516.3 750.1,520.8Z M734.8,520.7 740.8,517.5 741.4,522.1Z M764.7,529.5 769.3,525.8 770.6,529.6Z M758,534.4 763.4,530.4 764.7,534.8Z M929,526.1 923.1,526.4 924.2,522.6Z M922.2,535.9 916.3,535.9 917.6,532.1Z M947.3,517.6 940.6,518.7 941.4,514.2Z M940.8,528.4 934.1,529.2 935.1,524.7Z M962.8,504.5 956.3,506.4 956.6,501.8Z M957.5,517.3 950.9,518.9 951.4,514.4Z M743,541.3 748.9,537.8 749.8,542.3Z M734.4,542.1 740.4,538.9 741.1,543.5Z M764.3,551.1 768.9,547.4 770.2,551.2Z M757.5,556 763,551.9 764.3,556.4Z M928,548.2 922.1,548.5 923.2,544.6Z M921.3,557.9 915.3,557.9 916.7,554.2Z M946.2,539.6 939.5,540.7 940.3,536.2Z M939.8,550.4 933,551.3 934,546.8Z M961.7,526.6 955.2,528.4 955.5,523.8Z M956.5,539.4 949.9,541 950.4,536.4Z M742.7,562.8 748.5,559.3 749.4,563.8Z M734.1,563.5 740.1,560.4 740.7,564.9Z M763.8,572.6 768.5,568.9 769.8,572.7Z M757.1,577.5 762.6,573.5 763.9,577.9Z M927,570.2 921.1,570.5 922.3,566.7Z M920.3,580 914.4,579.9 915.7,576.2Z M945.2,561.7 938.5,562.8 939.3,558.3Z M938.8,572.5 932,573.3 933,568.8Z M960.6,548.6 954.1,550.5 954.4,545.9Z M955.4,561.4 948.8,563 949.3,558.4Z M742.3,584.2 748.1,580.8 749,585.3Z M733.7,584.9 739.8,581.8 740.4,586.3Z M763.4,594.2 768,590.5 769.3,594.3Z M756.7,599 762.2,595 763.5,599.5Z M926.1,592.3 920.1,592.5 921.3,588.7Z M919.4,602 913.4,602 914.8,598.2Z M944.1,583.7 937.4,584.8 938.3,580.3Z M937.8,594.5 931,595.4 932,590.9Z M959.5,570.7 953,572.5 953.3,567.9Z M954.3,583.5 947.7,585.1 948.2,580.5Z M741.9,605.7 747.8,602.2 748.6,606.8Z M733.4,606.3 739.4,603.2 740,607.8Z M762.9,615.8 767.6,612.1 768.9,615.9Z M756.3,620.6 761.8,616.6 763.1,621Z M925.1,614.3 919.1,614.5 920.3,610.7Z M918.4,624 912.5,624 913.8,620.2Z M943.1,605.8 936.4,606.9 937.3,602.4Z M936.7,616.6 930,617.4 931,612.9Z M958.4,592.7 951.9,594.5 952.2,589.9Z M953.3,605.6 946.6,607.1 947.2,602.5Z M741.6,627.1 747.4,623.7 748.3,628.2Z M733,627.7 739.1,624.6 739.7,629.2Z M762.5,637.3 767.2,633.7 768.4,637.5Z M755.9,642.1 761.4,638.1 762.6,642.6Z M924.1,636.4 918.2,636.6 919.4,632.8Z M917.5,646.1 911.5,646 912.9,642.2Z M942.1,627.9 935.3,628.9 936.2,624.4Z M935.7,638.6 929,639.4 930,634.9Z M957.3,614.8 950.8,616.6 951.1,612Z M952.2,627.6 945.6,629.1 946.1,624.6Z M741.2,648.6 747.1,645.2 747.9,649.7Z M732.7,649.1 738.8,646 739.3,650.6Z M762,658.9 766.7,655.3 768,659.1Z M755.4,663.6 761,659.7 762.2,664.1Z M923.1,658.4 917.2,658.6 918.4,654.8Z M916.5,668.1 910.5,668 911.9,664.3Z M941,649.9 934.3,651 935.2,646.4Z M934.7,660.7 927.9,661.5 929,657Z M956.3,636.8 949.7,638.6 950.1,634Z M951.1,649.7 944.5,651.2 945,646.6Z M740.8,670.1 746.7,666.7 747.5,671.2Z M732.3,670.5 738.4,667.5 739,672Z M761.6,680.5 766.3,676.8 767.5,680.6Z M755,685.2 760.6,681.2 761.8,685.7Z M922.1,680.4 916.2,680.6 917.4,676.8Z M915.5,690.1 909.6,690 911,686.3Z M940,672 933.3,673 934.2,668.5Z M933.7,682.8 926.9,683.5 928,679Z M955.2,658.9 948.6,660.6 949,656Z M950,671.7 943.4,673.2 944,668.6Z M740.4,691.5 746.3,688.1 747.1,692.7Z M732,691.9 738.1,688.9 738.6,693.5Z M761.2,702 765.9,698.4 767.1,702.2Z M754.6,706.7 760.2,702.8 761.4,707.2Z M921.2,702.5 915.2,702.6 916.5,698.8Z M914.6,712.2 908.6,712.1 910,708.3Z M939,694.1 932.2,695 933.1,690.5Z M932.7,704.8 925.9,705.5 927,701.1Z M954.1,680.9 947.5,682.7 947.9,678.1Z M949,693.8 942.3,695.3 942.9,690.7Z M740.1,713 746,709.6 746.8,714.1Z M731.7,713.3 737.8,710.3 738.3,714.9Z M760.7,723.6 765.4,720 766.7,723.8Z M754.2,728.2 759.7,724.3 761,728.8Z M920.2,724.5 914.2,724.7 915.5,720.9Z M913.6,734.2 907.7,734.1 909.1,730.3Z M937.9,716.1 931.2,717.1 932.1,712.6Z M931.6,726.9 924.9,727.6 926,723.1Z M953,703 946.4,704.7 946.8,700.1Z M947.9,715.9 941.2,717.3 941.8,712.7Z M739.7,734.4 745.6,731.1 746.4,735.6Z M731.3,734.7 737.4,731.7 737.9,736.3Z M760.3,745.1 765,741.6 766.2,745.4Z M753.8,749.8 759.3,745.9 760.5,750.3Z M919.2,746.6 913.3,746.7 914.5,742.9Z M912.7,756.2 906.7,756.1 908.1,752.4Z M936.9,738.2 930.1,739.1 931.1,734.6Z M930.6,748.9 923.9,749.6 925,745.2Z M951.9,725 945.3,726.7 945.7,722.1Z M946.8,737.9 940.2,739.3 940.8,734.8Z M739.3,755.9 745.2,752.6 746,757.1Z M731,756.1 737.1,753.2 737.6,757.7Z M759.8,766.7 764.6,763.1 765.8,767Z M753.3,771.3 758.9,767.4 760.1,771.9Z M918.2,768.6 912.3,768.7 913.6,764.9Z M911.7,778.3 905.8,778.1 907.2,774.4Z M935.8,760.2 929.1,761.2 930,756.7Z M929.6,771 922.8,771.7 924,767.2Z M950.8,747.1 944.2,748.8 944.7,744.2Z M945.7,760 939.1,761.4 939.7,756.8Z M738.9,777.3 744.9,774 745.6,778.6Z M730.6,777.5 736.8,774.6 737.2,779.1Z M759.4,788.3 764.1,784.7 765.3,788.5Z M752.9,792.8 758.5,789 759.7,793.4Z M917.3,790.7 911.3,790.8 912.6,787Z M910.7,800.3 904.8,800.1 906.3,796.4Z M934.8,782.3 928.1,783.2 929,778.7Z M928.6,793.1 921.8,793.7 923,789.2Z M949.7,769.1 943.1,770.8 943.6,766.2Z M944.7,782 938,783.4 938.7,778.9Z M738.6,798.8 744.5,795.5 745.3,800Z M730.3,798.9 736.4,796 736.9,800.6Z M758.9,809.8 763.7,806.3 764.9,810.1Z M752.5,814.4 758.1,810.5 759.3,815Z M916.3,812.7 910.3,812.8 911.6,809Z M909.8,822.3 903.8,822.2 905.3,818.4Z M933.8,804.4 927,805.3 928,800.8Z M927.6,815.1 920.8,815.7 921.9,811.3Z M948.6,791.2 942,792.8 942.5,788.2Z M943.6,804.1 936.9,805.5 937.6,800.9Z M738.2,820.3 744.2,817 744.9,821.5Z M729.9,820.3 736.1,817.4 736.5,822Z M758.5,831.4 763.3,827.9 764.4,831.7Z M752.1,835.9 757.7,832.1 758.8,836.5Z M915.3,834.8 909.3,834.8 910.7,831Z M908.8,844.4 902.9,844.2 904.4,840.5Z M932.7,826.4 926,827.3 927,822.8Z M926.5,837.2 919.8,837.8 920.9,833.3Z M947.5,813.3 940.9,814.9 941.4,810.3Z M942.5,826.2 935.8,827.5 936.5,823Z M737.8,841.7 743.8,838.5 744.5,843Z M729.6,841.7 735.8,838.8 736.2,843.4Z M758.1,853 762.9,849.4 764,853.3Z M751.7,857.4 757.3,853.6 758.4,858.1Z M914.3,856.8 908.4,856.9 909.7,853.1Z M907.9,866.4 901.9,866.2 903.4,862.5Z M931.7,848.5 924.9,849.3 925.9,844.9Z M925.5,859.2 918.8,859.8 919.9,855.4Z M946.4,835.3 939.8,836.9 940.3,832.3Z M941.4,848.2 934.8,849.6 935.5,845Z M737.5,863.2 743.4,859.9 744.1,864.5Z M729.3,863.1 735.4,860.2 735.8,864.8Z M757.6,874.5 762.4,871 763.6,874.8Z M751.2,879 756.9,875.2 758,879.6Z M913.3,878.9 907.4,878.9 908.7,875.1Z M906.9,888.4 901,888.2 902.5,884.5Z M930.6,870.6 923.9,871.4 924.9,866.9Z M924.5,881.3 917.7,881.9 918.9,877.4Z M945.4,857.4 938.7,858.9 939.3,854.4Z M940.4,870.3 933.7,871.6 934.4,867Z M737.1,884.6 743.1,881.4 743.8,885.9Z M728.9,884.5 735.1,881.7 735.5,886.2Z M757.2,896.1 762,892.6 763.1,896.4Z M750.8,900.5 756.5,896.7 757.6,901.2Z M912.4,900.9 906.4,900.9 907.7,897.1Z M906,910.5 900,910.2 901.5,906.5Z M929.6,892.6 922.8,893.4 923.9,889Z M923.5,903.4 916.7,903.9 917.9,899.5Z M944.3,879.4 937.6,881 938.2,876.4Z M939.3,892.4 932.6,893.6 933.3,889.1Z M727.7,474.5 733.8,471.6 734.3,476.2Z M727,478 733.2,475.2 733.6,479.8Z M725.2,483 731.2,480 731.8,484.5Z M728.2,483.4 734.7,481.3 734.5,485.9Z M729.4,489.2 735.7,486.6 735.9,491.2Z M729.8,494.2 736,491.3 736.4,495.9Z M726.8,494.2 733.4,492.5 732.9,497.1Z M726.6,498.3 733.2,496.6 732.8,501.2Z M725.8,501.7 732.4,500.2 731.8,504.8Z M726.3,512.2 732.3,508.9 733,513.4Z M731.7,515.8 737.6,512.5 738.4,517Z M726.5,514 733.1,512.5 732.6,517Z M728.7,518.5 735.4,516.9 734.9,521.4Z M727.3,523.9 733.8,521.9 733.6,526.5Z M729.1,526.7 735.7,525.1 735.2,529.7Z M726.8,536.5 732.7,533.2 733.5,537.7Z M726.4,540.5 732.4,537.2 733.1,541.7Z M728.2,539.1 734.8,537.4 734.3,542Z M733.2,545.6 739.5,543.1 739.6,547.7Z M727.8,550.6 734.1,547.9 734.4,552.5Z M722.4,552.8 728.9,550.6 728.8,555.2Z M732.1,555.5 738.7,553.9 738.2,558.5Z M730.9,562.3 737.2,559.7 737.4,564.3Z M722.6,565.1 729,562.9 728.9,567.5Z M730.2,570.5 736.5,567.9 736.7,572.5Z M728.3,574.8 734.6,572.1 734.8,576.7Z M728.3,579.9 734.4,576.9 734.9,581.5Z M724.4,584.3 730.5,581.3 731,585.9Z M729.3,584.3 735.8,582.5 735.5,587.1Z M727.8,590 734.2,587.6 734.3,592.2Z M727.3,592.8 733.8,590.8 733.6,595.4Z M724.2,600.3 730.4,597.4 730.8,602Z M729.8,602.2 736.1,599.8 736.2,604.4Z M726.9,605.9 733.3,603.7 733.3,608.3Z M726.5,610.1 732.9,607.8 732.9,612.4Z M724.2,615.3 730.5,612.7 730.7,617.3Z M723.4,622.8 729.2,619.3 730.1,623.8Z M726.2,624.1 732.4,621.3 732.8,625.9Z M725.3,629.1 731.4,626.1 731.9,630.7Z M727.9,631.7 734.1,629 734.4,633.6Z M727.2,634.6 733.5,632.3 733.6,636.9Z M728.7,638.9 735,636.5 735.1,641.1Z M722.9,644.3 729.1,641.5 729.4,646.1Z M727.4,647.6 733.7,645 733.9,649.6Z M725.5,653.6 731.5,650.4 732.2,655Z M727.1,654.3 733.6,652.2 733.5,656.8Z M731.3,657.2 737.8,655.5 737.4,660.1Z M727.2,665.4 733.2,662.2 733.9,666.8Z M723.1,665.4 729.6,663.5 729.3,668.1Z M725.9,675.1 731.8,671.7 732.6,676.3Z M726.1,672.4 732.7,670.9 732.1,675.5Z M730,683.3 735.7,679.7 736.7,684.1Z M730.5,686.6 736.3,683.1 737.2,687.6Z M728.4,685.5 735,683.8 734.6,688.4Z M724.1,691.5 730.4,689.1 730.5,693.7Z M727,693.9 733.5,692.1 733.2,696.7Z M727.3,700.8 733.5,698.1 733.8,702.7Z M727.7,702.2 734.2,700.4 733.9,704.9Z M724.5,704.6 731.1,703.2 730.5,707.8Z M725.1,711.5 731.5,709.2 731.5,713.8Z M722.9,718.1 729,715.2 729.5,719.8Z M727.5,719.1 733.9,717 733.8,721.6Z M726,726.3 732.1,723.3 732.7,727.8Z M728.2,728.1 734.6,725.7 734.7,730.3Z M724.3,729.8 730.9,728.1 730.5,732.7Z M724.1,738.6 730.2,735.6 730.7,740.2Z M723.7,737.2 730.3,735.7 729.8,740.3Z M724.6,742.8 731.2,740.9 730.9,745.5Z M728.3,750.8 734.3,747.6 735,752.2Z M724.8,755.3 730.8,752.1 731.4,756.7Z M727.7,757.4 734,754.7 734.2,759.3Z M729.3,762.9 735.3,759.7 735.9,764.2Z M725.6,765 731.9,762.5 732,767.1Z M725.2,771.5 731.2,768.3 731.9,772.8Z M727.9,772.9 734.2,770.5 734.3,775.1Z M725.5,780.6 731.3,777.1 732.3,781.6Z M719.9,780.1 726.4,777.9 726.3,782.5Z M720.7,786.7 726.8,783.9 727.2,788.5Z M722.6,785.8 729.2,784.4 728.6,789Z M721.3,795.6 727.4,792.6 727.9,797.1Z M721.7,795.4 728.3,793.5 728,798.1Z M723.7,805.5 729.5,802 730.4,806.5Z M725.3,808.8 731.2,805.2 732.1,809.7Z M725.3,806.4 731.9,804.9 731.4,809.5Z M718.9,814.7 725.1,812 725.4,816.6Z M728.7,817.6 735.1,815.1 735.2,819.7Z M724.5,822.8 730.7,820.1 731,824.7Z M723.1,822.5 729.8,821.1 729.2,825.6Z M724.1,831.1 730.2,828.2 730.6,832.8Z M722.3,838.1 728.1,834.6 729,839.1Z M722.5,834.2 729.2,832.8 728.5,837.4Z M725.9,839.6 732.5,838.1 732,842.6Z M721.3,844.3 727.9,842.3 727.6,846.9Z M726,852.9 731.8,849.5 732.7,854Z M722.3,857.1 728.2,853.8 729,858.4Z M720,861 726,857.8 726.6,862.4Z M728.8,860 735.5,858.4 735,862.9Z M721.7,867 728,864.4 728.2,869Z M728,870 734.4,867.7 734.4,872.3Z M967,468.8 960.4,470.5 960.9,465.9Z M968.9,469.7 962.7,472.4 962.4,467.8Z M967.5,480.3 960.7,481.1 961.8,476.6Z M964.7,479.6 958.2,481.8 958.3,477.2Z M969.3,485.4 962.7,487.1 963.2,482.5Z M962.2,492.6 955.4,493.1 956.7,488.7Z M960.4,491.3 954,493.6 954,489Z M966,495.2 959.6,497.5 959.6,492.9Z M961.7,504.3 954.9,504.9 956.1,500.5Z M962.5,502.4 956.2,505 956,500.4Z M967.2,505.6 961,508.4 960.7,503.8Z M967.5,509.6 961.3,512.4 960.9,507.8Z M966.9,517.3 960.3,519.1 960.7,514.5Z M968.5,518.7 962.2,521.2 962,516.6Z M960.3,523.6 953.9,525.9 953.9,521.3Z M962,529.6 955.4,531.2 955.9,526.6Z M962.7,535.2 956,536.3 956.9,531.7Z M965.4,534.4 959.1,537.1 958.8,532.5Z M965.2,538.3 959,541 958.7,536.4Z M965.7,549.1 958.9,549.9 959.9,545.4Z M964.6,549.8 958,551.5 958.4,546.9Z M966.1,557.1 959.3,558 960.3,553.5Z M962.5,558.8 955.9,560.2 956.5,555.6Z M958,562.1 951.4,563.6 952,559.1Z M957.7,568.4 950.9,569.1 952,564.6Z M959.2,572 952.5,573 953.4,568.5Z M956.5,574 949.9,575.6 950.4,571Z M961.1,574.7 954.9,577.5 954.6,572.9Z M965.8,579.1 959.6,581.7 959.3,577.1Z M957.5,583.7 951.2,586.3 951.1,581.7Z M963.4,591.5 956.8,592.9 957.4,588.4Z M960.9,591.5 954.6,594 954.4,589.4Z M962.3,595.6 956,598.2 955.8,593.6Z M959.9,599.9 953.6,602.4 953.5,597.8Z M960.2,609.3 953.5,610 954.5,605.6Z M956.5,608.4 950.1,610.8 950.1,606.2Z M960.3,614.3 953.8,616.1 954.1,611.6Z M961.3,622.7 954.6,623.4 955.7,618.9Z M961.9,621.7 955.4,623.7 955.6,619.2Z M956,629.9 949.2,630.5 950.4,626.1Z M959.7,631.4 953.1,633 953.6,628.4Z M960.4,634.6 953.8,636.5 954.1,631.9Z M959.7,635.7 953.5,638.4 953.2,633.8Z M957.4,640.6 951.1,643 951,638.4Z M960.4,648.5 953.7,649.9 954.3,645.3Z M958.4,647.4 952.2,650.1 951.9,645.5Z M959.5,653.5 953,655.7 953.1,651.1Z M955.8,657.4 949.4,659.6 949.5,655.1Z M957.4,661.7 951,663.8 951.1,659.2Z M954.6,668.1 947.9,669.5 948.6,664.9Z M960.2,671.4 953.6,673.2 954,668.6Z M958,672.8 951.7,675.3 951.5,670.7Z M954.9,677.8 948.5,680 948.5,675.4Z M952.4,684.1 945.8,685.4 946.4,680.9Z M955.6,689.4 948.9,690.5 949.7,686Z M955.1,691.5 948.5,693.2 948.9,688.6Z M954.9,695.8 948.2,697.4 948.7,692.9Z M953.9,698.8 947.4,700.8 947.6,696.2Z M958.9,703.9 952.3,705.6 952.7,701.1Z M950.9,709.8 944.1,710.7 945.1,706.2Z M953.6,711.4 947,713.1 947.4,708.5Z M951.1,717.3 944.4,718.4 945.3,713.8Z M952,721.4 945.2,722.4 946.1,717.9Z M951.7,725.2 945,726.3 945.8,721.8Z M953.2,728.3 946.6,729.9 947.1,725.3Z M954.5,732 947.9,733.8 948.3,729.2Z M954.7,733.2 948.4,735.7 948.2,731.1Z M958,741.1 951.4,742.6 951.9,738.1Z M951.1,743.7 944.5,745.6 944.8,741Z M953.5,747.5 947,749.4 947.2,744.9Z M952.3,750.9 945.8,753 946,748.4Z M951.2,755.2 944.7,757.2 944.9,752.6Z M953,760.2 946.5,762 946.8,757.4Z M950.1,765 943.5,766.5 944.1,761.9Z M954,767.2 947.5,769.3 947.7,764.7Z M952.9,770.2 946.5,772.6 946.4,768Z M949,773.5 942.7,776.2 942.4,771.6Z M951.4,782.8 944.7,783.8 945.6,779.3Z M949.2,785 942.6,786.6 943.1,782Z M952.5,789.8 945.9,791.2 946.5,786.6Z M947.5,793 940.9,794.6 941.4,790Z M947.5,797.2 940.9,798.7 941.5,794.1Z M949.1,800.9 942.5,802.6 943,798Z M948.9,803.8 942.4,805.8 942.6,801.2Z M948.6,807.8 942.2,809.9 942.3,805.3Z M951.9,809.9 945.6,812.5 945.4,807.9Z M951,821.5 944.3,822.1 945.5,817.6Z M952.5,819.7 946,821.9 946.1,817.3Z M948.9,823 942.5,825.4 942.5,820.8Z M948.7,833.3 941.9,833.8 943.2,829.4Z M951.1,835.8 944.4,836.7 945.3,832.2Z M945.9,836.1 939.5,838.2 939.6,833.6Z M950.4,839 944,841.4 944,836.8Z M947.5,846.7 940.8,848 941.5,843.5Z M945.9,848.9 939.4,850.8 939.7,846.2Z M945.7,850.9 939.4,853.4 939.2,848.8Z M945.1,859.6 938.3,860.4 939.4,855.9Z M946.5,858.1 940.3,860.8 940,856.3Z M949.7,864.7 943.2,866.7 943.4,862.1Z M944.5,872.5 937.8,873.1 938.9,868.6Z M947.7,873.1 941.1,875 941.4,870.4Z M940.7,880.6 933.9,881.1 935.1,876.7Z M736.9,889.7 739.6,883.5 742.9,886.6Z M735.9,893.5 740.2,888.2 742.6,892.2Z M738.4,900.2 741.7,894.2 744.7,897.7Z M749.2,908.1 750.3,901.4 754.3,903.6Z M750.7,912.1 752.2,905.5 756.1,907.9Z M761.3,916.6 761,909.9 765.4,911.2Z M766.1,916.4 765.7,909.6 770.1,910.8Z M771.5,921.7 771,914.9 775.4,916.1Z M776.5,924.1 776.4,917.3 780.8,918.8Z M785.2,926.4 784,919.7 788.5,920.4Z M791.4,925.6 790,919 794.5,919.6Z M798.7,929 797,922.4 801.6,922.8Z M801.5,932.4 800.8,925.6 805.3,926.7Z M808.8,933.8 807.6,927.1 812.1,927.9Z M815.4,932.6 814.4,925.9 818.9,926.8Z M824.8,933.4 822.3,927.1 826.9,926.9Z M829.4,933.2 827.5,926.7 832.1,927Z M837.6,932.6 834.9,926.3 839.5,926.1Z M842.8,936.1 840.6,929.7 845.2,929.7Z M848.9,932.8 846.7,926.4 851.3,926.4Z M858,933.9 854.7,928 859.2,927.2Z M861.8,931.5 859.3,925.2 863.9,925.1Z M868.9,930.1 866,924 870.6,923.5Z M876.9,930.1 873.4,924.3 877.9,923.4Z M882,928 878.6,922.1 883.1,921.3Z M887.4,929 884.4,922.9 889,922.4Z M894.3,925.6 890.9,919.7 895.4,918.9Z M901.7,924.9 897.9,919.2 902.3,918.1Z M909.7,920 905.2,915 909.4,913.2Z M913.7,920 909.6,914.5 914,913.2Z M922.5,914.1 916.8,910.3 920.5,907.6Z M926.3,906.2 920.5,902.5 924.2,899.7Z M929.6,897.9 923.3,895.4 926.3,891.9Z M935.8,893.1 929.1,891.6 931.6,887.8Z" fill="#00009c"/><path d="M784.2,512.8a1.8,1.8 0 1,0 3.6,0a1.8,1.8 0 1,0 -3.6,0 M777.2,518.6a1.8,1.8 0 1,0 3.6,0a1.8,1.8 0 1,0 -3.6,0 M807.4,516.2a1.8,1.8 0 1,0 3.6,0a1.8,1.8 0 1,0 -3.6,0 M798.8,522.6a1.8,1.8 0 1,0 3.6,0a1.8,1.8 0 1,0 -3.6,0 M832.7,517.8a1.8,1.8 0 1,0 3.6,0a1.8,1.8 0 1,0 -3.6,0 M823.8,524.9a1.8,1.8 0 1,0 3.6,0a1.8,1.8 0 1,0 -3.6,0 M858.5,517.2a1.8,1.8 0 1,0 3.6,0a1.8,1.8 0 1,0 -3.6,0 M849.5,525a1.8,1.8 0 1,0 3.6,0a1.8,1.8 0 1,0 -3.6,0 M883.4,514.5a1.8,1.8 0 1,0 3.6,0a1.8,1.8 0 1,0 -3.6,0 M874.9,523.1a1.8,1.8 0 1,0 3.6,0a1.8,1.8 0 1,0 -3.6,0 M906.9,510a1.8,1.8 0 1,0 3.6,0a1.8,1.8 0 1,0 -3.6,0 M898.8,519.2a1.8,1.8 0 1,0 3.6,0a1.8,1.8 0 1,0 -3.6,0 M783.7,534.4a1.8,1.8 0 1,0 3.6,0a1.8,1.8 0 1,0 -3.6,0 M776.7,540.2a1.8,1.8 0 1,0 3.6,0a1.8,1.8 0 1,0 -3.6,0 M806.8,538a1.8,1.8 0 1,0 3.6,0a1.8,1.8 0 1,0 -3.6,0 M798.2,544.3a1.8,1.8 0 1,0 3.6,0a1.8,1.8 0 1,0 -3.6,0 M832,539.6a1.8,1.8 0 1,0 3.6,0a1.8,1.8 0 1,0 -3.6,0 M823.1,546.7a1.8,1.8 0 1,0 3.6,0a1.8,1.8 0 1,0 -3.6,0 M857.8,539.1a1.8,1.8 0 1,0 3.6,0a1.8,1.8 0 1,0 -3.6,0 M848.7,546.9a1.8,1.8 0 1,0 3.6,0a1.8,1.8 0 1,0 -3.6,0 M882.6,536.5a1.8,1.8 0 1,0 3.6,0a1.8,1.8 0 1,0 -3.6,0 M874.1,545a1.8,1.8 0 1,0 3.6,0a1.8,1.8 0 1,0 -3.6,0 M906,532a1.8,1.8 0 1,0 3.6,0a1.8,1.8 0 1,0 -3.6,0 M897.9,541.2a1.8,1.8 0 1,0 3.6,0a1.8,1.8 0 1,0 -3.6,0 M783.2,556.1a1.8,1.8 0 1,0 3.6,0a1.8,1.8 0 1,0 -3.6,0 M776.2,561.9a1.8,1.8 0 1,0 3.6,0a1.8,1.8 0 1,0 -3.6,0 M806.2,559.7a1.8,1.8 0 1,0 3.6,0a1.8,1.8 0 1,0 -3.6,0 M797.7,566a1.8,1.8 0 1,0 3.6,0a1.8,1.8 0 1,0 -3.6,0 M831.4,561.4a1.8,1.8 0 1,0 3.6,0a1.8,1.8 0 1,0 -3.6,0 M822.5,568.5a1.8,1.8 0 1,0 3.6,0a1.8,1.8 0 1,0 -3.6,0 M857,560.9a1.8,1.8 0 1,0 3.6,0a1.8,1.8 0 1,0 -3.6,0 M848,568.8a1.8,1.8 0 1,0 3.6,0a1.8,1.8 0 1,0 -3.6,0 M881.8,558.5a1.8,1.8 0 1,0 3.6,0a1.8,1.8 0 1,0 -3.6,0 M873.2,567a1.8,1.8 0 1,0 3.6,0a1.8,1.8 0 1,0 -3.6,0 M905.1,554a1.8,1.8 0 1,0 3.6,0a1.8,1.8 0 1,0 -3.6,0 M897,563.2a1.8,1.8 0 1,0 3.6,0a1.8,1.8 0 1,0 -3.6,0 M782.7,577.7a1.8,1.8 0 1,0 3.6,0a1.8,1.8 0 1,0 -3.6,0 M775.7,583.5a1.8,1.8 0 1,0 3.6,0a1.8,1.8 0 1,0 -3.6,0 M805.6,581.5a1.8,1.8 0 1,0 3.6,0a1.8,1.8 0 1,0 -3.6,0 M797.1,587.8a1.8,1.8 0 1,0 3.6,0a1.8,1.8 0 1,0 -3.6,0 M830.7,583.2a1.8,1.8 0 1,0 3.6,0a1.8,1.8 0 1,0 -3.6,0 M821.9,590.3a1.8,1.8 0 1,0 3.6,0a1.8,1.8 0 1,0 -3.6,0 M856.3,582.8a1.8,1.8 0 1,0 3.6,0a1.8,1.8 0 1,0 -3.6,0 M847.3,590.6a1.8,1.8 0 1,0 3.6,0a1.8,1.8 0 1,0 -3.6,0 M880.9,580.4a1.8,1.8 0 1,0 3.6,0a1.8,1.8 0 1,0 -3.6,0 M872.4,588.9a1.8,1.8 0 1,0 3.6,0a1.8,1.8 0 1,0 -3.6,0 M904.2,576a1.8,1.8 0 1,0 3.6,0a1.8,1.8 0 1,0 -3.6,0 M896.2,585.2a1.8,1.8 0 1,0 3.6,0a1.8,1.8 0 1,0 -3.6,0 M782.2,599.4a1.8,1.8 0 1,0 3.6,0a1.8,1.8 0 1,0 -3.6,0 M775.2,605.1a1.8,1.8 0 1,0 3.6,0a1.8,1.8 0 1,0 -3.6,0 M805,603.2a1.8,1.8 0 1,0 3.6,0a1.8,1.8 0 1,0 -3.6,0 M796.6,609.5a1.8,1.8 0 1,0 3.6,0a1.8,1.8 0 1,0 -3.6,0 M830,605a1.8,1.8 0 1,0 3.6,0a1.8,1.8 0 1,0 -3.6,0 M821.2,612.1a1.8,1.8 0 1,0 3.6,0a1.8,1.8 0 1,0 -3.6,0 M855.5,604.7a1.8,1.8 0 1,0 3.6,0a1.8,1.8 0 1,0 -3.6,0 M846.6,612.5a1.8,1.8 0 1,0 3.6,0a1.8,1.8 0 1,0 -3.6,0 M880.1,602.4a1.8,1.8 0 1,0 3.6,0a1.8,1.8 0 1,0 -3.6,0 M871.6,610.9a1.8,1.8 0 1,0 3.6,0a1.8,1.8 0 1,0 -3.6,0 M903.3,598a1.8,1.8 0 1,0 3.6,0a1.8,1.8 0 1,0 -3.6,0 M895.3,607.2a1.8,1.8 0 1,0 3.6,0a1.8,1.8 0 1,0 -3.6,0 M781.6,621a1.8,1.8 0 1,0 3.6,0a1.8,1.8 0 1,0 -3.6,0 M774.7,626.7a1.8,1.8 0 1,0 3.6,0a1.8,1.8 0 1,0 -3.6,0 M804.5,624.9a1.8,1.8 0 1,0 3.6,0a1.8,1.8 0 1,0 -3.6,0 M796,631.2a1.8,1.8 0 1,0 3.6,0a1.8,1.8 0 1,0 -3.6,0 M829.4,626.8a1.8,1.8 0 1,0 3.6,0a1.8,1.8 0 1,0 -3.6,0 M820.6,633.8a1.8,1.8 0 1,0 3.6,0a1.8,1.8 0 1,0 -3.6,0 M854.8,626.6a1.8,1.8 0 1,0 3.6,0a1.8,1.8 0 1,0 -3.6,0 M845.9,634.4a1.8,1.8 0 1,0 3.6,0a1.8,1.8 0 1,0 -3.6,0 M879.3,624.3a1.8,1.8 0 1,0 3.6,0a1.8,1.8 0 1,0 -3.6,0 M870.8,632.8a1.8,1.8 0 1,0 3.6,0a1.8,1.8 0 1,0 -3.6,0 M902.4,620a1.8,1.8 0 1,0 3.6,0a1.8,1.8 0 1,0 -3.6,0 M894.4,629.2a1.8,1.8 0 1,0 3.6,0a1.8,1.8 0 1,0 -3.6,0 M781.1,642.7a1.8,1.8 0 1,0 3.6,0a1.8,1.8 0 1,0 -3.6,0 M774.3,648.4a1.8,1.8 0 1,0 3.6,0a1.8,1.8 0 1,0 -3.6,0 M803.9,646.7a1.8,1.8 0 1,0 3.6,0a1.8,1.8 0 1,0 -3.6,0 M795.5,652.9a1.8,1.8 0 1,0 3.6,0a1.8,1.8 0 1,0 -3.6,0 M828.7,648.7a1.8,1.8 0 1,0 3.6,0a1.8,1.8 0 1,0 -3.6,0 M819.9,655.6a1.8,1.8 0 1,0 3.6,0a1.8,1.8 0 1,0 -3.6,0 M854,648.5a1.8,1.8 0 1,0 3.6,0a1.8,1.8 0 1,0 -3.6,0 M845.1,656.2a1.8,1.8 0 1,0 3.6,0a1.8,1.8 0 1,0 -3.6,0 M878.4,646.3a1.8,1.8 0 1,0 3.6,0a1.8,1.8 0 1,0 -3.6,0 M870,654.7a1.8,1.8 0 1,0 3.6,0a1.8,1.8 0 1,0 -3.6,0 M901.5,642a1.8,1.8 0 1,0 3.6,0a1.8,1.8 0 1,0 -3.6,0 M893.5,651.2a1.8,1.8 0 1,0 3.6,0a1.8,1.8 0 1,0 -3.6,0 M780.6,664.3a1.8,1.8 0 1,0 3.6,0a1.8,1.8 0 1,0 -3.6,0 M773.8,670a1.8,1.8 0 1,0 3.6,0a1.8,1.8 0 1,0 -3.6,0 M803.3,668.4a1.8,1.8 0 1,0 3.6,0a1.8,1.8 0 1,0 -3.6,0 M794.9,674.6a1.8,1.8 0 1,0 3.6,0a1.8,1.8 0 1,0 -3.6,0 M828,670.5a1.8,1.8 0 1,0 3.6,0a1.8,1.8 0 1,0 -3.6,0 M819.3,677.4a1.8,1.8 0 1,0 3.6,0a1.8,1.8 0 1,0 -3.6,0 M853.3,670.4a1.8,1.8 0 1,0 3.6,0a1.8,1.8 0 1,0 -3.6,0 M844.4,678.1a1.8,1.8 0 1,0 3.6,0a1.8,1.8 0 1,0 -3.6,0 M877.6,668.2a1.8,1.8 0 1,0 3.6,0a1.8,1.8 0 1,0 -3.6,0 M869.2,676.7a1.8,1.8 0 1,0 3.6,0a1.8,1.8 0 1,0 -3.6,0 M900.6,664a1.8,1.8 0 1,0 3.6,0a1.8,1.8 0 1,0 -3.6,0 M892.6,673.2a1.8,1.8 0 1,0 3.6,0a1.8,1.8 0 1,0 -3.6,0 M780.1,686a1.8,1.8 0 1,0 3.6,0a1.8,1.8 0 1,0 -3.6,0 M773.3,691.6a1.8,1.8 0 1,0 3.6,0a1.8,1.8 0 1,0 -3.6,0 M802.7,690.1a1.8,1.8 0 1,0 3.6,0a1.8,1.8 0 1,0 -3.6,0 M794.3,696.3a1.8,1.8 0 1,0 3.6,0a1.8,1.8 0 1,0 -3.6,0 M827.4,692.3a1.8,1.8 0 1,0 3.6,0a1.8,1.8 0 1,0 -3.6,0 M818.7,699.2a1.8,1.8 0 1,0 3.6,0a1.8,1.8 0 1,0 -3.6,0 M852.5,692.3a1.8,1.8 0 1,0 3.6,0a1.8,1.8 0 1,0 -3.6,0 M843.7,700a1.8,1.8 0 1,0 3.6,0a1.8,1.8 0 1,0 -3.6,0 M876.8,690.2a1.8,1.8 0 1,0 3.6,0a1.8,1.8 0 1,0 -3.6,0 M868.4,698.6a1.8,1.8 0 1,0 3.6,0a1.8,1.8 0 1,0 -3.6,0 M899.6,686a1.8,1.8 0 1,0 3.6,0a1.8,1.8 0 1,0 -3.6,0 M891.7,695.2a1.8,1.8 0 1,0 3.6,0a1.8,1.8 0 1,0 -3.6,0 M779.6,707.6a1.8,1.8 0 1,0 3.6,0a1.8,1.8 0 1,0 -3.6,0 M772.8,713.2a1.8,1.8 0 1,0 3.6,0a1.8,1.8 0 1,0 -3.6,0 M802.1,711.9a1.8,1.8 0 1,0 3.6,0a1.8,1.8 0 1,0 -3.6,0 M793.8,718a1.8,1.8 0 1,0 3.6,0a1.8,1.8 0 1,0 -3.6,0 M826.7,714.1a1.8,1.8 0 1,0 3.6,0a1.8,1.8 0 1,0 -3.6,0 M818,721a1.8,1.8 0 1,0 3.6,0a1.8,1.8 0 1,0 -3.6,0 M851.8,714.2a1.8,1.8 0 1,0 3.6,0a1.8,1.8 0 1,0 -3.6,0 M843,721.9a1.8,1.8 0 1,0 3.6,0a1.8,1.8 0 1,0 -3.6,0 M875.9,712.2a1.8,1.8 0 1,0 3.6,0a1.8,1.8 0 1,0 -3.6,0 M867.6,720.5a1.8,1.8 0 1,0 3.6,0a1.8,1.8 0 1,0 -3.6,0 M898.7,708a1.8,1.8 0 1,0 3.6,0a1.8,1.8 0 1,0 -3.6,0 M890.8,717.1a1.8,1.8 0 1,0 3.6,0a1.8,1.8 0 1,0 -3.6,0 M779.1,729.3a1.8,1.8 0 1,0 3.6,0a1.8,1.8 0 1,0 -3.6,0 M772.3,734.8a1.8,1.8 0 1,0 3.6,0a1.8,1.8 0 1,0 -3.6,0 M801.5,733.6a1.8,1.8 0 1,0 3.6,0a1.8,1.8 0 1,0 -3.6,0 M793.2,739.7a1.8,1.8 0 1,0 3.6,0a1.8,1.8 0 1,0 -3.6,0 M826,735.9a1.8,1.8 0 1,0 3.6,0a1.8,1.8 0 1,0 -3.6,0 M817.4,742.8a1.8,1.8 0 1,0 3.6,0a1.8,1.8 0 1,0 -3.6,0 M851,736.1a1.8,1.8 0 1,0 3.6,0a1.8,1.8 0 1,0 -3.6,0 M842.2,743.7a1.8,1.8 0 1,0 3.6,0a1.8,1.8 0 1,0 -3.6,0 M875.1,734.1a1.8,1.8 0 1,0 3.6,0a1.8,1.8 0 1,0 -3.6,0 M866.8,742.5a1.8,1.8 0 1,0 3.6,0a1.8,1.8 0 1,0 -3.6,0 M897.8,730a1.8,1.8 0 1,0 3.6,0a1.8,1.8 0 1,0 -3.6,0 M890,739.1a1.8,1.8 0 1,0 3.6,0a1.8,1.8 0 1,0 -3.6,0 M778.6,750.9a1.8,1.8 0 1,0 3.6,0a1.8,1.8 0 1,0 -3.6,0 M771.8,756.5a1.8,1.8 0 1,0 3.6,0a1.8,1.8 0 1,0 -3.6,0 M801,755.3a1.8,1.8 0 1,0 3.6,0a1.8,1.8 0 1,0 -3.6,0 M792.7,761.4a1.8,1.8 0 1,0 3.6,0a1.8,1.8 0 1,0 -3.6,0 M825.4,757.8a1.8,1.8 0 1,0 3.6,0a1.8,1.8 0 1,0 -3.6,0 M816.7,764.6a1.8,1.8 0 1,0 3.6,0a1.8,1.8 0 1,0 -3.6,0 M850.2,758a1.8,1.8 0 1,0 3.6,0a1.8,1.8 0 1,0 -3.6,0 M841.5,765.6a1.8,1.8 0 1,0 3.6,0a1.8,1.8 0 1,0 -3.6,0 M874.3,756.1a1.8,1.8 0 1,0 3.6,0a1.8,1.8 0 1,0 -3.6,0 M866,764.4a1.8,1.8 0 1,0 3.6,0a1.8,1.8 0 1,0 -3.6,0 M896.9,752a1.8,1.8 0 1,0 3.6,0a1.8,1.8 0 1,0 -3.6,0 M889.1,761.1a1.8,1.8 0 1,0 3.6,0a1.8,1.8 0 1,0 -3.6,0 M778.1,772.6a1.8,1.8 0 1,0 3.6,0a1.8,1.8 0 1,0 -3.6,0 M771.4,778.1a1.8,1.8 0 1,0 3.6,0a1.8,1.8 0 1,0 -3.6,0 M800.4,777.1a1.8,1.8 0 1,0 3.6,0a1.8,1.8 0 1,0 -3.6,0 M792.1,783.1a1.8,1.8 0 1,0 3.6,0a1.8,1.8 0 1,0 -3.6,0 M824.7,779.6a1.8,1.8 0 1,0 3.6,0a1.8,1.8 0 1,0 -3.6,0 M816.1,786.4a1.8,1.8 0 1,0 3.6,0a1.8,1.8 0 1,0 -3.6,0 M849.5,779.9a1.8,1.8 0 1,0 3.6,0a1.8,1.8 0 1,0 -3.6,0 M840.8,787.5a1.8,1.8 0 1,0 3.6,0a1.8,1.8 0 1,0 -3.6,0 M873.4,778a1.8,1.8 0 1,0 3.6,0a1.8,1.8 0 1,0 -3.6,0 M865.2,786.3a1.8,1.8 0 1,0 3.6,0a1.8,1.8 0 1,0 -3.6,0 M896,774.1a1.8,1.8 0 1,0 3.6,0a1.8,1.8 0 1,0 -3.6,0 M888.2,783.1a1.8,1.8 0 1,0 3.6,0a1.8,1.8 0 1,0 -3.6,0 M777.6,794.2a1.8,1.8 0 1,0 3.6,0a1.8,1.8 0 1,0 -3.6,0 M770.9,799.7a1.8,1.8 0 1,0 3.6,0a1.8,1.8 0 1,0 -3.6,0 M799.8,798.8a1.8,1.8 0 1,0 3.6,0a1.8,1.8 0 1,0 -3.6,0 M791.6,804.8a1.8,1.8 0 1,0 3.6,0a1.8,1.8 0 1,0 -3.6,0 M824,801.4a1.8,1.8 0 1,0 3.6,0a1.8,1.8 0 1,0 -3.6,0 M815.5,808.2a1.8,1.8 0 1,0 3.6,0a1.8,1.8 0 1,0 -3.6,0 M848.7,801.8a1.8,1.8 0 1,0 3.6,0a1.8,1.8 0 1,0 -3.6,0 M840.1,809.3a1.8,1.8 0 1,0 3.6,0a1.8,1.8 0 1,0 -3.6,0 M872.6,800a1.8,1.8 0 1,0 3.6,0a1.8,1.8 0 1,0 -3.6,0 M864.4,808.3a1.8,1.8 0 1,0 3.6,0a1.8,1.8 0 1,0 -3.6,0 M895.1,796.1a1.8,1.8 0 1,0 3.6,0a1.8,1.8 0 1,0 -3.6,0 M887.3,805.1a1.8,1.8 0 1,0 3.6,0a1.8,1.8 0 1,0 -3.6,0 M777.1,815.9a1.8,1.8 0 1,0 3.6,0a1.8,1.8 0 1,0 -3.6,0 M770.4,821.3a1.8,1.8 0 1,0 3.6,0a1.8,1.8 0 1,0 -3.6,0 M799.2,820.5a1.8,1.8 0 1,0 3.6,0a1.8,1.8 0 1,0 -3.6,0 M791,826.5a1.8,1.8 0 1,0 3.6,0a1.8,1.8 0 1,0 -3.6,0 M823.4,823.2a1.8,1.8 0 1,0 3.6,0a1.8,1.8 0 1,0 -3.6,0 M814.8,830a1.8,1.8 0 1,0 3.6,0a1.8,1.8 0 1,0 -3.6,0 M848,823.7a1.8,1.8 0 1,0 3.6,0a1.8,1.8 0 1,0 -3.6,0 M839.3,831.2a1.8,1.8 0 1,0 3.6,0a1.8,1.8 0 1,0 -3.6,0 M871.8,821.9a1.8,1.8 0 1,0 3.6,0a1.8,1.8 0 1,0 -3.6,0 M863.6,830.2a1.8,1.8 0 1,0 3.6,0a1.8,1.8 0 1,0 -3.6,0 M894.2,818.1a1.8,1.8 0 1,0 3.6,0a1.8,1.8 0 1,0 -3.6,0 M886.4,827.1a1.8,1.8 0 1,0 3.6,0a1.8,1.8 0 1,0 -3.6,0 M776.6,837.5a1.8,1.8 0 1,0 3.6,0a1.8,1.8 0 1,0 -3.6,0 M769.9,843a1.8,1.8 0 1,0 3.6,0a1.8,1.8 0 1,0 -3.6,0 M798.6,842.3a1.8,1.8 0 1,0 3.6,0a1.8,1.8 0 1,0 -3.6,0 M790.5,848.2a1.8,1.8 0 1,0 3.6,0a1.8,1.8 0 1,0 -3.6,0 M822.7,845a1.8,1.8 0 1,0 3.6,0a1.8,1.8 0 1,0 -3.6,0 M814.2,851.8a1.8,1.8 0 1,0 3.6,0a1.8,1.8 0 1,0 -3.6,0 M847.2,845.6a1.8,1.8 0 1,0 3.6,0a1.8,1.8 0 1,0 -3.6,0 M838.6,853.1a1.8,1.8 0 1,0 3.6,0a1.8,1.8 0 1,0 -3.6,0 M870.9,843.9a1.8,1.8 0 1,0 3.6,0a1.8,1.8 0 1,0 -3.6,0 M862.8,852.2a1.8,1.8 0 1,0 3.6,0a1.8,1.8 0 1,0 -3.6,0 M893.3,840.1a1.8,1.8 0 1,0 3.6,0a1.8,1.8 0 1,0 -3.6,0 M885.5,849.1a1.8,1.8 0 1,0 3.6,0a1.8,1.8 0 1,0 -3.6,0 M776.1,859.2a1.8,1.8 0 1,0 3.6,0a1.8,1.8 0 1,0 -3.6,0 M769.4,864.6a1.8,1.8 0 1,0 3.6,0a1.8,1.8 0 1,0 -3.6,0 M798,864a1.8,1.8 0 1,0 3.6,0a1.8,1.8 0 1,0 -3.6,0 M789.9,869.9a1.8,1.8 0 1,0 3.6,0a1.8,1.8 0 1,0 -3.6,0 M822,866.8a1.8,1.8 0 1,0 3.6,0a1.8,1.8 0 1,0 -3.6,0 M813.6,873.5a1.8,1.8 0 1,0 3.6,0a1.8,1.8 0 1,0 -3.6,0 M846.5,867.5a1.8,1.8 0 1,0 3.6,0a1.8,1.8 0 1,0 -3.6,0 M837.9,874.9a1.8,1.8 0 1,0 3.6,0a1.8,1.8 0 1,0 -3.6,0 M870.1,865.9a1.8,1.8 0 1,0 3.6,0a1.8,1.8 0 1,0 -3.6,0 M862,874.1a1.8,1.8 0 1,0 3.6,0a1.8,1.8 0 1,0 -3.6,0 M892.4,862.1a1.8,1.8 0 1,0 3.6,0a1.8,1.8 0 1,0 -3.6,0 M884.6,871.1a1.8,1.8 0 1,0 3.6,0a1.8,1.8 0 1,0 -3.6,0 M775.6,880.8a1.8,1.8 0 1,0 3.6,0a1.8,1.8 0 1,0 -3.6,0 M768.9,886.2a1.8,1.8 0 1,0 3.6,0a1.8,1.8 0 1,0 -3.6,0 M797.5,885.7a1.8,1.8 0 1,0 3.6,0a1.8,1.8 0 1,0 -3.6,0 M789.3,891.6a1.8,1.8 0 1,0 3.6,0a1.8,1.8 0 1,0 -3.6,0 M821.4,888.7a1.8,1.8 0 1,0 3.6,0a1.8,1.8 0 1,0 -3.6,0 M812.9,895.3a1.8,1.8 0 1,0 3.6,0a1.8,1.8 0 1,0 -3.6,0 M845.7,889.3a1.8,1.8 0 1,0 3.6,0a1.8,1.8 0 1,0 -3.6,0 M837.2,896.8a1.8,1.8 0 1,0 3.6,0a1.8,1.8 0 1,0 -3.6,0 M869.3,887.8a1.8,1.8 0 1,0 3.6,0a1.8,1.8 0 1,0 -3.6,0 M861.1,896a1.8,1.8 0 1,0 3.6,0a1.8,1.8 0 1,0 -3.6,0 M891.4,884.1a1.8,1.8 0 1,0 3.6,0a1.8,1.8 0 1,0 -3.6,0 M883.8,893.1a1.8,1.8 0 1,0 3.6,0a1.8,1.8 0 1,0 -3.6,0 M775.1,902.4a1.8,1.8 0 1,0 3.6,0a1.8,1.8 0 1,0 -3.6,0 M768.5,907.8a1.8,1.8 0 1,0 3.6,0a1.8,1.8 0 1,0 -3.6,0 M796.9,907.5a1.8,1.8 0 1,0 3.6,0a1.8,1.8 0 1,0 -3.6,0 M788.8,913.3a1.8,1.8 0 1,0 3.6,0a1.8,1.8 0 1,0 -3.6,0 M820.7,910.5a1.8,1.8 0 1,0 3.6,0a1.8,1.8 0 1,0 -3.6,0 M812.3,917.1a1.8,1.8 0 1,0 3.6,0a1.8,1.8 0 1,0 -3.6,0 M845,911.2a1.8,1.8 0 1,0 3.6,0a1.8,1.8 0 1,0 -3.6,0 M836.5,918.7a1.8,1.8 0 1,0 3.6,0a1.8,1.8 0 1,0 -3.6,0 M868.4,909.8a1.8,1.8 0 1,0 3.6,0a1.8,1.8 0 1,0 -3.6,0 M860.3,918a1.8,1.8 0 1,0 3.6,0a1.8,1.8 0 1,0 -3.6,0 M890.5,906.1a1.8,1.8 0 1,0 3.6,0a1.8,1.8 0 1,0 -3.6,0 M882.9,915.1a1.8,1.8 0 1,0 3.6,0a1.8,1.8 0 1,0 -3.6,0" fill="#080890"/><path d="M555,316.6 575.9,315.4 596.8,314.1 617.7,312.9 638.6,311.7 659.5,310.4 680.5,309.2 701.4,307.9 722.3,306.7 743.2,305.5 764.1,304.2 785,303 808.4,307 830.6,318.8 850.5,337.9 867.1,363.2 879.6,393.6 887.4,427.4 890,463 890,468 882.2,468 882.2,463 879.8,429.2 872.6,397 861,368.2 845.6,344.1 827.2,326 806.6,314.7 785,310.9 764.1,312.3 743.2,313.6 722.3,315 701.4,316.3 680.5,317.7 659.5,319 638.6,320.4 617.7,321.7 596.8,323.1 575.9,324.4 555,325.8Z" fill="#838383"/><path d="M555,325.8 575.9,324.4 596.8,323.1 617.7,321.7 638.6,320.4 659.5,319 680.5,317.7 701.4,316.3 722.3,315 743.2,313.6 764.1,312.3 785,310.9 806.6,314.7 827.2,326 845.6,344.1 861,368.2 872.6,397 879.8,429.2 882.2,463 882.2,468 866.6,468 866.6,463 864.6,432.7 858.5,403.9 849.4,377.5 836.8,355.2 821.4,338.1 803.9,327 785,322.8 764.1,324.3 743.2,325.8 722.3,327.3 701.4,328.8 680.5,330.4 659.5,331.9 638.6,333.4 617.7,334.9 596.8,336.5 575.9,338 555,339.5Z" fill="#c2c2c2"/><path d="M555,339.5 575.9,338 596.8,336.5 617.7,334.9 638.6,333.4 659.5,331.9 680.5,330.4 701.4,328.8 722.3,327.3 743.2,325.8 764.1,324.3 785,322.8 803.9,327 821.4,338.1 836.8,355.2 849.4,377.5 858.5,403.9 864.6,432.7 866.6,463 866.6,468 849.4,468 849.4,463 847.8,436.5 843.1,411.4 836.2,388.2 826.5,368.3 814.4,352.9 800.3,342.7 785,338.6 764.1,340.3 743.2,342.1 722.3,343.8 701.4,345.6 680.5,347.3 659.5,349.1 638.6,350.8 617.7,352.6 596.8,354.3 575.9,356.1 555,357.8Z" fill="#d6d6d6"/><path d="M555,357.8 575.9,356.1 596.8,354.3 617.7,352.6 638.6,350.8 659.5,349.1 680.5,347.3 701.4,345.6 722.3,343.8 743.2,342.1 764.1,340.3 785,338.6 800.3,342.7 814.4,352.9 826.5,368.3 836.2,388.2 843.1,411.4 847.8,436.5 849.4,463 849.4,468 833.8,468 833.8,463 832.6,440.1 829,418.3 824.3,397.8 817.3,380 808.1,366 797.2,356.6 785,352.4 764.1,354.3 743.2,356.3 722.3,358.2 701.4,360.2 680.5,362.1 659.5,364.1 638.6,366 617.7,368 596.8,369.9 575.9,371.9 555,373.9Z" fill="#d9d9d9"/><path d="M555,373.9 575.9,371.9 596.8,369.9 617.7,368 638.6,366 659.5,364.1 680.5,362.1 701.4,360.2 722.3,358.2 743.2,356.3 764.1,354.3 785,352.4 797.2,356.6 808.1,366 817.3,380 824.3,397.8 829,418.3 832.6,440.1 833.8,463 833.8,468 822.9,468 822.9,463 822,442.5 819.2,423.1 815.3,405.1 809.6,389.8 802.5,377.9 794.1,370.2 785,367 764.1,369.2 743.2,371.3 722.3,373.5 701.4,375.6 680.5,377.8 659.5,380 638.6,382.1 617.7,384.3 596.8,386.5 575.9,388.6 555,390.8Z" fill="#c6c6c6"/><path d="M555,390.8 575.9,388.6 596.8,386.5 617.7,384.3 638.6,382.1 659.5,380 680.5,377.8 701.4,375.6 722.3,373.5 743.2,371.3 764.1,369.2 785,367 794.1,370.2 802.5,377.9 809.6,389.8 815.3,405.1 819.2,423.1 822,442.5 822.9,463 822.9,468 812,468 812,463 811.3,445 809.3,427.9 806.1,412.5 801.8,399.7 796.7,390 791,384 785,382 764.1,384.4 743.2,386.8 722.3,389.1 701.4,391.5 680.5,393.9 659.5,396.3 638.6,398.7 617.7,401.1 596.8,403.4 575.9,405.8 555,408.2Z" fill="#7c7c7c"/><path d="M555,325.8 575.9,324.4 596.8,323.1 617.7,321.7 638.6,320.4 659.5,319 680.5,317.7 701.4,316.3 722.3,315 743.2,313.6 764.1,312.3 785,310.9 806.6,314.7 827.2,326 845.6,344.1 861,368.2 872.6,397 879.8,429.2 882.2,463 882.2,468 M555,339.5 575.9,338 596.8,336.5 617.7,334.9 638.6,333.4 659.5,331.9 680.5,330.4 701.4,328.8 722.3,327.3 743.2,325.8 764.1,324.3 785,322.8 803.9,327 821.4,338.1 836.8,355.2 849.4,377.5 858.5,403.9 864.6,432.7 866.6,463 866.6,468 M555,357.8 575.9,356.1 596.8,354.3 617.7,352.6 638.6,350.8 659.5,349.1 680.5,347.3 701.4,345.6 722.3,343.8 743.2,342.1 764.1,340.3 785,338.6 800.3,342.7 814.4,352.9 826.5,368.3 836.2,388.2 843.1,411.4 847.8,436.5 849.4,463 849.4,468 M555,373.9 575.9,371.9 596.8,369.9 617.7,368 638.6,366 659.5,364.1 680.5,362.1 701.4,360.2 722.3,358.2 743.2,356.3 764.1,354.3 785,352.4 797.2,356.6 808.1,366 817.3,380 824.3,397.8 829,418.3 832.6,440.1 833.8,463 833.8,468 M555,390.8 575.9,388.6 596.8,386.5 617.7,384.3 638.6,382.1 659.5,380 680.5,377.8 701.4,375.6 722.3,373.5 743.2,371.3 764.1,369.2 785,367 794.1,370.2 802.5,377.9 809.6,389.8 815.3,405.1 819.2,423.1 822,442.5 822.9,463 822.9,468 M555,316.6 555,325.8 555,339.5 555,357.8 555,373.9 555,390.8 555,408.2 M575.9,315.4 575.9,324.4 575.9,338 575.9,356.1 575.9,371.9 575.9,388.6 575.9,405.8 M596.8,314.1 596.8,323.1 596.8,336.5 596.8,354.3 596.8,369.9 596.8,386.5 596.8,403.4 M617.7,312.9 617.7,321.7 617.7,334.9 617.7,352.6 617.7,368 617.7,384.3 617.7,401.1 M638.6,311.7 638.6,320.4 638.6,333.4 638.6,350.8 638.6,366 638.6,382.1 638.6,398.7 M659.5,310.4 659.5,319 659.5,331.9 659.5,349.1 659.5,364.1 659.5,380 659.5,396.3 M680.5,309.2 680.5,317.7 680.5,330.4 680.5,347.3 680.5,362.1 680.5,377.8 680.5,393.9 M701.4,307.9 701.4,316.3 701.4,328.8 701.4,345.6 701.4,360.2 701.4,375.6 701.4,391.5 M722.3,306.7 722.3,315 722.3,327.3 722.3,343.8 722.3,358.2 722.3,373.5 722.3,389.1 M743.2,305.5 743.2,313.6 743.2,325.8 743.2,342.1 743.2,356.3 743.2,371.3 743.2,386.8 M764.1,304.2 764.1,312.3 764.1,324.3 764.1,340.3 764.1,354.3 764.1,369.2 764.1,384.4 M785,303 785,310.9 785,322.8 785,338.6 785,352.4 785,367 785,382 M808.4,307 806.6,314.7 803.9,327 800.3,342.7 797.2,356.6 794.1,370.2 791,384 M830.6,318.8 827.2,326 821.4,338.1 814.4,352.9 808.1,366 802.5,377.9 796.7,390 M850.5,337.9 845.6,344.1 836.8,355.2 826.5,368.3 817.3,380 809.6,389.8 801.8,399.7 M867.1,363.2 861,368.2 849.4,377.5 836.2,388.2 824.3,397.8 815.3,405.1 806.1,412.5 M879.6,393.6 872.6,397 858.5,403.9 843.1,411.4 829,418.3 819.2,423.1 809.3,427.9 M887.4,427.4 879.8,429.2 864.6,432.7 847.8,436.5 832.6,440.1 822,442.5 811.3,445 M890,463 882.2,463 866.6,463 849.4,463 833.8,463 822.9,463 812,463 M890,468 882.2,468 866.6,468 849.4,468 833.8,468 822.9,468 812,468 M555,325.8 575.9,315.4 M555,339.5 575.9,324.4 M555,357.8 575.9,338 M555,373.9 575.9,356.1 M555,390.8 575.9,371.9 M555,408.2 575.9,388.6 M575.9,324.4 596.8,314.1 M575.9,338 596.8,323.1 M575.9,356.1 596.8,336.5 M575.9,371.9 596.8,354.3 M575.9,388.6 596.8,369.9 M575.9,405.8 596.8,386.5 M596.8,323.1 617.7,312.9 M596.8,336.5 617.7,321.7 M596.8,354.3 617.7,334.9 M596.8,369.9 617.7,352.6 M596.8,386.5 617.7,368 M596.8,403.4 617.7,384.3 M617.7,321.7 638.6,311.7 M617.7,334.9 638.6,320.4 M617.7,352.6 638.6,333.4 M617.7,368 638.6,350.8 M617.7,384.3 638.6,366 M617.7,401.1 638.6,382.1 M638.6,320.4 659.5,310.4 M638.6,333.4 659.5,319 M638.6,350.8 659.5,331.9 M638.6,366 659.5,349.1 M638.6,382.1 659.5,364.1 M638.6,398.7 659.5,380 M659.5,319 680.5,309.2 M659.5,331.9 680.5,317.7 M659.5,349.1 680.5,330.4 M659.5,364.1 680.5,347.3 M659.5,380 680.5,362.1 M659.5,396.3 680.5,377.8 M680.5,317.7 701.4,307.9 M680.5,330.4 701.4,316.3 M680.5,347.3 701.4,328.8 M680.5,362.1 701.4,345.6 M680.5,377.8 701.4,360.2 M680.5,393.9 701.4,375.6 M701.4,316.3 722.3,306.7 M701.4,328.8 722.3,315 M701.4,345.6 722.3,327.3 M701.4,360.2 722.3,343.8 M701.4,375.6 722.3,358.2 M701.4,391.5 722.3,373.5 M722.3,315 743.2,305.5 M722.3,327.3 743.2,313.6 M722.3,343.8 743.2,325.8 M722.3,358.2 743.2,342.1 M722.3,373.5 743.2,356.3 M722.3,389.1 743.2,371.3 M743.2,313.6 764.1,304.2 M743.2,325.8 764.1,312.3 M743.2,342.1 764.1,324.3 M743.2,356.3 764.1,340.3 M743.2,371.3 764.1,354.3 M743.2,386.8 764.1,369.2 M764.1,312.3 785,303 M764.1,324.3 785,310.9 M764.1,340.3 785,322.8 M764.1,354.3 785,338.6 M764.1,369.2 785,352.4 M764.1,384.4 785,367 M785,310.9 808.4,307 M785,322.8 806.6,314.7 M785,338.6 803.9,327 M785,352.4 800.3,342.7 M785,367 797.2,356.6 M785,382 794.1,370.2 M806.6,314.7 830.6,318.8 M803.9,327 827.2,326 M800.3,342.7 821.4,338.1 M797.2,356.6 814.4,352.9 M794.1,370.2 808.1,366 M791,384 802.5,377.9 M827.2,326 850.5,337.9 M821.4,338.1 845.6,344.1 M814.4,352.9 836.8,355.2 M808.1,366 826.5,368.3 M802.5,377.9 817.3,380 M796.7,390 809.6,389.8 M845.6,344.1 867.1,363.2 M836.8,355.2 861,368.2 M826.5,368.3 849.4,377.5 M817.3,380 836.2,388.2 M809.6,389.8 824.3,397.8 M801.8,399.7 815.3,405.1 M861,368.2 879.6,393.6 M849.4,377.5 872.6,397 M836.2,388.2 858.5,403.9 M824.3,397.8 843.1,411.4 M815.3,405.1 829,418.3 M806.1,412.5 819.2,423.1 M872.6,397 887.4,427.4 M858.5,403.9 879.8,429.2 M843.1,411.4 864.6,432.7 M829,418.3 847.8,436.5 M819.2,423.1 832.6,440.1 M809.3,427.9 822,442.5 M879.8,429.2 890,463 M864.6,432.7 882.2,463 M847.8,436.5 866.6,463 M832.6,440.1 849.4,463 M822,442.5 833.8,463 M811.3,445 822.9,463 M882.2,463 890,468 M866.6,463 882.2,468 M849.4,463 866.6,468 M833.8,463 849.4,468 M822.9,463 833.8,468 M812,463 822.9,468" fill="none" stroke="#858585" stroke-width="0.9"/><ellipse cx="555" cy="362.4" rx="13" ry="45.8" fill="#7a7a7a"/><path d="M561.9,334.5 567.5,322.9 M561.9,351.2 568.7,348.1 M569,344.5 575.5,338.2 M561.9,367.9 568.8,372.9 M569,361.9 576,364.2 M569,378.1 575.5,388.1 M582.8,333 588.4,321.4 M582.8,349.5 589.6,346.4 M589.9,342.9 596.4,336.6 M582.8,366.1 589.7,371 M589.9,360.1 596.9,362.4 M589.9,376.1 596.4,386.1 M603.7,331.5 609.3,320 M603.7,347.9 610.5,344.7 M610.8,341.3 617.3,335 M603.7,364.2 610.7,369.1 M610.8,358.3 617.8,360.6 M610.8,374 617.3,384.1 M624.6,330.1 630.2,318.5 M624.6,346.2 631.4,343 M631.7,339.7 638.2,333.4 M624.6,362.3 631.6,367.2 M631.7,356.4 638.7,358.8 M631.7,372 638.2,382.1 M645.5,328.6 651.1,317 M645.5,344.5 652.3,341.4 M652.6,338.1 659.2,331.8 M645.5,360.4 652.5,365.3 M652.6,354.6 659.6,357 M652.6,370 659.1,380 M666.4,327.2 672.1,315.6 M666.4,342.8 673.3,339.7 M673.6,336.5 680.1,330.2 M666.4,358.5 673.4,363.4 M673.6,352.8 680.6,355.1 M673.6,368 680.1,378 M687.4,325.7 693,314.1 M687.4,341.2 694.2,338 M694.5,334.9 701,328.6 M687.4,356.6 694.3,361.6 M694.5,351 701.5,353.3 M694.5,366 701,376 M708.3,324.2 713.9,312.6 M708.3,339.5 715.1,336.3 M715.4,333.3 721.9,327.1 M708.3,354.7 715.2,359.7 M715.4,349.2 722.4,351.5 M715.4,363.9 721.9,374 M729.2,322.8 734.8,311.2 M729.2,337.8 736,334.7 M736.3,331.7 742.8,325.5 M729.2,352.8 736.1,357.8 M736.3,347.3 743.3,349.7 M736.3,361.9 742.8,372 M750.1,321.3 755.7,309.7 M750.1,336.1 756.9,333 M757.2,330.1 763.7,323.9 M750.1,351 757,355.9 M757.2,345.5 764.2,347.9 M757.2,359.9 763.7,369.9 M771,319.8 776.6,308.2 M771,334.5 777.8,331.3 M778.1,328.5 784.6,322.3 M771,349.1 777.9,354 M778.1,343.7 785.1,346.1 M778.1,357.9 784.6,367.9 M791.6,320 797.2,308.5 M790.5,334.4 797.3,331.3 M797,330.2 803.5,324 M789.5,348.8 796.4,353.7 M794.7,345.1 801.7,347.5 M792.7,359 799.2,369 M806.6,340.7 814.5,338.2 M813.9,338.9 822.2,333.3 M802.4,354.8 808.4,360.4 M808.4,353.2 815.1,356.2 M803.3,366.3 807.7,376.8 M821.3,353 829.9,351.4 M829.1,353.6 838.8,349.1 M813.8,366.1 818.7,372.1 M820.3,366.6 826.6,370.1 M807.1,377.9 807.8,390.5 M812.5,378.2 814.7,388.7 M833.7,370.6 842.7,369.9 M841.7,373.6 852.5,370.3 M823.3,382 826.9,388 M830,384.5 835.5,388.4 M814.4,391.7 812.3,403.3 M819.8,394.1 819.6,403.9 M843.4,392.5 852.6,392.7 M851.2,397.7 862.7,395.8 M830.4,401.5 832.5,407.2 M837.1,405.9 841.7,409.9 M819.9,408.7 815.2,418.7 M825.1,413 822.6,421.6 M849.9,417.6 858.9,418.6 M857.2,424.8 869,424.3 M835,423.6 835.5,428.4 M841.4,429.8 844.9,433.4 M823.4,428.1 816.5,435.8 M828,433.9 823.4,440.8 M853.9,444.4 863.1,445.9 M860.3,453.4 872.5,454.1 M838.1,446.8 838.1,450.3 M843.8,454.7 847,457.5 M825.8,448.7 817.8,453.4 M829.9,455.7 824.4,460 M855.1,464.6 864.4,466.6 M860.9,466.4 873.3,468.3 M839,464.6 838.9,466.6 M844.3,466.4 847.4,468.3 M826.5,464.6 818.2,466.2 M830.2,466.4 824.4,468" stroke="#1010b0" stroke-width="1.0" fill="none"/><path d="M561.9,322.3 565.4,304.3 M569,318.8 571.5,298.9 M569,329.4 574,315.4 M561.9,384.5 568,397.2 M561.9,401.7 565.3,421.9 M569,395 573.7,412.8 M582.8,321 586.3,302.9 M589.9,317.5 592.4,297.7 M589.9,327.9 594.9,313.9 M582.8,382.4 588.9,395.1 M582.8,399.4 586.2,419.6 M589.9,392.8 594.6,410.5 M603.7,319.7 607.2,301.6 M610.8,316.2 613.3,296.4 M610.8,326.5 615.8,312.5 M603.7,380.3 609.8,393 M603.7,397.1 607.1,417.3 M610.8,390.6 615.5,408.3 M624.6,318.4 628.1,300.3 M631.7,314.9 634.2,295.1 M631.7,325.1 636.7,311.1 M624.6,378.2 630.7,390.9 M624.6,394.8 628,415 M631.7,388.3 636.4,406.1 M645.5,317.1 649,299 M652.6,313.7 655.1,293.8 M652.6,323.7 657.6,309.7 M645.5,376.1 651.6,388.8 M645.5,392.5 648.9,412.7 M652.6,386.1 657.3,403.8 M666.4,315.7 669.9,297.7 M673.6,312.4 676.1,292.6 M673.6,322.3 678.5,308.3 M666.4,374 672.5,386.7 M666.4,390.1 669.8,410.4 M673.6,383.9 678.2,401.6 M687.4,314.4 690.9,296.4 M694.5,311.1 697,291.3 M694.5,320.9 699.5,306.9 M687.4,371.9 693.4,384.6 M687.4,387.8 690.7,408 M694.5,381.6 699.1,399.4 M708.3,313.1 711.8,295.1 M715.4,309.8 717.9,290 M715.4,319.5 720.4,305.5 M708.3,369.9 714.3,382.5 M708.3,385.5 711.7,405.7 M715.4,379.4 720,397.1 M729.2,311.8 732.7,293.7 M736.3,308.6 738.8,288.7 M736.3,318.1 741.3,304.1 M729.2,367.8 735.2,380.4 M729.2,383.2 732.6,403.4 M736.3,377.2 740.9,394.9 M750.1,310.5 753.6,292.4 M757.2,307.3 759.7,287.5 M757.2,316.7 762.2,302.7 M750.1,365.7 756.2,378.4 M750.1,380.9 753.5,401.1 M757.2,374.9 761.9,392.6 M771,309.2 774.5,291.1 M778.1,306 780.6,286.2 M778.1,315.3 783.1,301.3 M771,363.6 777.1,376.3 M771,378.6 774.4,398.8 M778.1,372.7 782.8,390.4 M792.3,309.6 795.8,291.5 M800.3,308.3 802.8,288.4 M798.9,317.3 803.9,303.3 M788.4,363 794.5,375.7 M787.3,377.8 790.7,398 M790.5,373.5 795.2,391.2 M814.2,315.9 821.8,298.4 M822.3,317.4 829.3,298 M811,326.5 819.5,315.5 M818.9,326.1 827.3,312.6 M798.3,368.1 801.7,381.1 M794.2,381.5 793.3,401.4 M798.3,379.2 799.1,396.8 M834.5,329.7 846.2,313.5 M842.5,333.8 853.8,315.9 M828.8,339.7 840,330 M837.1,341.7 848.6,329.5 M800.6,389.4 795.4,407.9 M805.1,389.1 802.3,405.7 M852.4,350.1 867.7,336.2 M859.7,356.6 874.9,341.2 M844.3,359 857.7,351 M852.5,363.4 866.9,353.1 M806,400.9 797,417.2 M810.8,402.5 804.4,417.4 M866.9,376.2 885.3,365.3 M873.3,384.9 891.7,372.7 M856.7,383.3 871.9,377.5 M864.5,389.9 881.3,382.1 M810.3,415.4 798,428.7 M815,418.8 805.6,431.1 M877.3,406.7 898,399.3 M882.4,417 903.3,408.7 M865.3,411.5 881.7,408 M872.5,420.1 890.9,415.1 M813.3,432.2 798.3,441.8 M817.6,437.2 805.6,446.2 M883.1,439.9 905.2,436.6 M886.6,451.4 909.1,447.5 M870.3,441.9 887.6,441 M876.3,452.2 895.8,450.4 M815.1,450.4 798.6,455.7 M819,456.5 805.7,461.7 M884.8,464.6 907.3,465.7 M887.4,466.4 910.5,467.1 M871.7,464.6 889.4,466.3 M877.1,466.4 897,467.8 M815.6,464.6 798.6,465.5 M819.3,466.4 805.5,467.5 M559.7,317.7 557.1,298.8 M564.3,317.2 561.3,295.1 M568.9,316 567.5,293.4 M573.5,316.4 577,299.5 M577.9,318 577.8,296.1 M582.7,316.1 580.2,294.6 M587.2,318.4 589.4,294.8 M591.9,316.9 592.2,295.1 M596.4,315.9 597.5,299.5 M600.9,316.9 597.7,294.1 M605.6,314.7 606.7,293.1 M610.1,315.5 608.6,292 M614.7,314.7 613.9,298.5 M619.2,315.6 621.2,297.1 M623.8,314.6 624.4,296.7 M628.4,313.5 632.3,290 M633,313.3 636,296.2 M637.7,312.4 639.7,292 M642.2,314.5 645.4,293.8 M646.7,312.6 646,295.9 M651.3,311.7 653.5,295.2 M655.9,311.9 656.5,292.4 M660.5,310.7 658,292.3 M665.2,310.4 667.6,286.5 M669.7,310.3 670.2,286.5 M674.2,311.7 671.7,292.8 M678.9,311.8 683.2,288.5 M683.4,310 681.4,289.2 M688.1,312.1 688,296 M692.6,311.8 696.3,294.4 M697.3,311.5 699.8,294.2 M701.7,311.2 701.4,292.8 M706.4,309.1 709.5,290.2 M710.8,309.6 712.6,291.7 M715.6,310.7 719.9,288.3 M720.1,307.5 719.5,287.7 M724.6,309.3 722.9,289 M729.4,306.7 727,287.6 M733.8,308.9 731.2,290 M738.5,308.9 738.6,286.3 M743.1,307.5 743.5,289.3 M747.6,307.9 750.7,289.2 M752.1,306.1 752.3,283 M756.7,305.5 754.5,285.4 M761.3,308.3 765,289.8 M766.1,308 767.7,285.1 M770.4,306.6 772,284.1 M775.1,307.4 775.9,289.1 M779.6,304.7 783.3,283.6 M784.1,305.8 786.4,289.5 M788.3,305.1 793.3,288.7 M792.9,306.6 797.4,287.5 M797.6,308.7 802.8,292.1 M801.7,307 804.1,290.1 M806.5,308.6 814.4,289.2 M810,308.8 819.6,292.7 M814.9,312 823.7,292.5 M817.5,314.7 830,298.2 M822.9,318.4 836.8,299.8 M825.6,318.4 834.1,302.9 M829.8,321.9 843.5,301.3 M834.3,323.3 850.9,306.5 M836.1,326.4 848.4,313.9 M839.9,331.5 857.6,316.5 M842.8,334.7 862.8,320.4 M845.6,336.2 861,325.2 M848.3,338.9 866.4,324.7 M850.2,344 868.3,329.1 M855.6,347.4 876.2,338 M855.4,351.6 870.6,341.1 M859.5,355.8 876.4,346.6 M863.4,358 880.5,350.3 M864.1,362.2 881.8,354.4 M867.6,367.1 887,359.4 M866.9,371.4 887,359.8 M871,374.9 891.2,370.2 M873.2,378.7 896.8,372.6 M873.6,383.4 894.3,372.8 M875.4,388.2 898.8,380.4 M877.4,391.4 895.6,387.9 M879.9,395.7 901.5,389.1 M878.8,400.3 899.8,394.9 M879.8,404.7 896.6,398.5 M879.3,408.9 899.7,402.1 M883.1,413.6 905.9,408.8 M883,418.3 903,417.2 M886.1,422.8 911.8,419.8 M884.2,427.2 909,424.6 M886.5,431.6 907.4,432.6 M885.3,436 910.8,436.5 M886.3,440.7 910,437.9 M887.1,445.1 909.3,442.4 M885.1,449.8 905.5,447.6 M888.4,454.4 908,450.7 M886.2,459 904.2,457.5 M888.8,463.4 911,459.6 M559.4,404.8 563,423.1 M564,403.5 567.8,426.9 M568.6,404.3 569.7,420.9 M572.9,404.4 574.6,423.3 M577.6,402 582.4,418.3 M582.4,404.4 587.5,422.2 M586.9,403 593.2,424.1 M591.2,401.5 597.3,421.8 M595.7,401.1 602.9,422.3 M600.3,401.6 607.2,423.5 M605,399 608,416.5 M609.7,400.7 612.2,424 M614.2,398.7 619.5,419.6 M618.8,400.7 621.8,417.2 M623.3,398 628.6,416.4 M628.1,396.2 631.7,415.8 M632.7,396.9 635.4,420.8 M637.2,398.2 643.2,416.4 M641.8,395.1 646.6,417 M646.1,395.6 649.2,415.9 M650.8,394.3 656.6,414.8 M655.2,393.7 660.7,415 M659.6,394.4 665.5,416.2 M664.2,395.2 671.4,414.6 M668.9,392.1 673.8,411.7 M673.7,391.7 681.4,414.8 M678.3,393.9 681.9,410 M682.9,389.9 687.8,410.1 M687.4,390.2 688.8,407.4 M692.1,389.5 697.2,406.5 M696.4,389.5 702.1,413.1 M701,390.3 702.4,412.7 M705.5,390.8 708.4,407.6 M710,390.3 713.5,409.4 M714.5,386.2 717.7,405.5 M719.4,388.4 723.5,406.1 M724,385.9 727,403.7 M728.2,387.6 731.6,405.9 M732.8,384.4 737.8,401.4 M737.4,386.3 742.9,408 M741.9,386.2 744.8,406.1 M746.7,384 748.2,404.8 M751.1,384.4 753.3,402.1 M756,381.9 756.6,404.7 M760.6,384.3 761.7,402.7 M764.8,383.7 767.2,399.7 M769.7,381 775.5,397.3 M773.9,380.4 775.5,399.1 M778.9,381.8 781.1,405.6 M783.5,380.2 786.7,401.6 M788,382.9 781.7,400.2 M794,384.6 786.2,399.9 M796.4,387.8 786.2,398.7 M800.3,390.9 790.6,402.7 M801.7,394.4 789.2,404.9 M805.6,398.8 792.6,405.6 M804.1,404.2 791.7,413.6 M806.8,408.4 795.1,414.5 M806.3,412.6 791.7,417.9 M809.4,417.2 793,419.8 M811,421.9 792.7,429.6 M812.9,426.5 798,432.2 M810.3,430.8 795.8,438 M813.9,435.8 797.1,439.2 M811.8,440.4 797.3,446.6 M814.5,444.7 796.3,451.6 M812.8,449.5 795.2,451.9 M815.6,454.2 801.1,455.4 M813.9,458.7 795.3,457.8 M814.5,463.4 800.7,466.3 M547.1,381 523.8,381.7 M546,378.2 521.7,378.4 M549.5,341.9 528.9,344.3 M549.2,361.9 526,361.7 M544.8,341.7 517.6,341.9 M547.3,365.9 521.2,364.3 M552.3,337.8 529.7,338.6 M553.6,390.2 526.9,387.5 M550.5,354.5 524.3,352.2 M546.8,336.3 527.8,335.4 M549.5,388.3 527,385.8 M552.1,355.6 527.2,355.3 M550,362.3 524.4,360.2 M546.5,378.4 523.3,376.8 M545.6,353.7 523.8,350.8 M549.4,340.1 530.8,338.1 M545.9,381.5 524.7,379.9 M545.7,390.7 521.3,392.9 M547.9,340.1 521.9,340.8 M542.7,353.7 520.2,352.9 M546.1,381 524,381.9 M547.9,388.9 526.1,389.3 M548.7,398 521,399.3 M548.9,353.8 527.6,351.2 M547.4,384.5 524.1,384.5 M553.8,396.1 535.5,396.7 M546.6,361 520.2,360.5 M550.9,361.9 528.5,361.8 M550.3,364.9 525.6,366.4 M542.5,356.1 517.7,356.5 M551.5,385.5 532.3,383.9 M553.9,330.2 534.9,327.7 M549.2,384.3 530.7,385.4 M547.9,380.9 529.4,382 M547.9,357.4 519.9,359.3 M547,393.8 525.6,393.9 M557.6,324.5 536.8,323.1 M545.1,349 518.5,349.4 M546.2,364.9 527.7,363.7 M553.4,393.3 526.9,391.9 M544.2,340.2 520.8,339.4 M546.9,361.1 523.1,360.3 M546.2,388.1 519.1,388.5 M549.5,328.1 526.2,327.5 M545.4,369.2 524.6,371 M549.8,347.3 523.8,347.9 M551.4,360.4 528.9,362.6 M550.6,328.6 526.2,325.9 M546,393 522.1,391.1 M552.4,397.8 526.4,397.8 M549.5,377.9 528.6,376.2 M546.3,391.1 519.1,389.3 M546.2,332.1 520.4,334.8 M548.7,357.2 528.1,359.6 M544.4,378.9 525.9,380 M555,327.3 534.1,325.7 M545.4,370.6 521.8,368.5 M549.7,397 523.3,394.9 M554,387.9 532.1,385.1 M548.6,354.4 528.4,354.7" stroke="#0c0cc0" stroke-width="0.95" fill="none"/><path d="M565.6,303.3 566.6,310 562.1,309.1Z M571.6,297.9 573.1,304.6 568.6,304Z M574.3,314.4 574.4,321.2 570,319.7Z M568.4,398.1 564.2,393.9 567.8,392.2Z M565.5,422.9 562.1,417 566.7,416.2Z M573.9,413.7 570.1,408.1 574.5,407Z M586.5,302 587.5,308.7 583,307.8Z M592.5,296.7 594,303.3 589.5,302.7Z M595.2,313 595.3,319.8 590.9,318.3Z M589.3,396 585.1,391.8 588.7,390.1Z M586.4,420.6 583,414.7 587.6,413.9Z M594.8,411.5 591,405.9 595.4,404.7Z M607.4,300.6 608.4,307.4 603.9,306.5Z M613.5,295.4 614.9,302 610.4,301.5Z M616.2,311.6 616.2,318.4 611.8,316.9Z M610.2,393.9 606,389.7 609.6,388Z M607.3,418.3 603.9,412.3 608.5,411.6Z M615.7,409.3 611.9,403.7 616.3,402.5Z M628.3,299.3 629.4,306.1 624.8,305.2Z M634.4,294.1 635.8,300.8 631.3,300.2Z M637.1,310.2 637.1,317 632.7,315.4Z M631.1,391.8 626.9,387.6 630.5,385.9Z M628.2,416 624.9,410 629.4,409.3Z M636.7,407 632.8,401.4 637.3,400.3Z M649.2,298 650.3,304.7 645.8,303.9Z M655.3,292.8 656.8,299.5 652.2,298.9Z M658,308.8 658,315.6 653.7,314Z M652,389.7 647.8,385.5 651.4,383.8Z M649.1,413.7 645.8,407.7 650.3,407Z M657.6,404.8 653.7,399.2 658.2,398Z M670.1,296.7 671.2,303.4 666.7,302.5Z M676.2,291.6 677.7,298.2 673.1,297.6Z M678.9,307.4 678.9,314.2 674.6,312.6Z M672.9,387.6 668.7,383.4 672.3,381.7Z M670,411.3 666.7,405.4 671.2,404.6Z M678.5,402.6 674.6,397 679.1,395.8Z M691,295.4 692.1,302.1 687.6,301.2Z M697.1,290.3 698.6,296.9 694,296.4Z M699.8,306 699.8,312.8 695.5,311.2Z M693.9,385.5 689.6,381.3 693.2,379.6Z M690.9,409 687.6,403.1 692.1,402.3Z M699.4,400.3 695.5,394.7 700,393.5Z M712,294.1 713,300.8 708.5,299.9Z M718,289 719.5,295.7 714.9,295.1Z M720.7,304.6 720.7,311.4 716.4,309.8Z M714.8,383.4 710.5,379.3 714.2,377.5Z M711.8,406.7 708.5,400.8 713,400Z M720.3,398.1 716.4,392.5 720.9,391.3Z M732.9,292.8 733.9,299.5 729.4,298.6Z M738.9,287.8 740.4,294.4 735.8,293.8Z M741.6,303.2 741.6,310 737.3,308.4Z M735.7,381.3 731.5,377.2 735.1,375.4Z M732.7,404.4 729.4,398.5 733.9,397.7Z M741.2,395.9 737.3,390.2 741.8,389.1Z M753.8,291.5 754.8,298.2 750.3,297.3Z M759.8,286.5 761.3,293.1 756.7,292.5Z M762.5,301.7 762.5,308.5 758.2,307Z M756.6,379.3 752.4,375.1 756,373.3Z M753.6,402.1 750.3,396.2 754.8,395.4Z M762.1,393.6 758.3,388 762.7,386.8Z M774.7,290.1 775.7,296.9 771.2,296Z M780.7,285.2 782.2,291.8 777.6,291.3Z M783.4,300.3 783.4,307.1 779.1,305.6Z M777.5,377.2 773.3,373 776.9,371.2Z M774.6,399.8 771.2,393.9 775.8,393.1Z M783,391.4 779.2,385.8 783.6,384.6Z M796,290.5 797.1,297.3 792.5,296.4Z M802.9,287.4 804.4,294.1 799.8,293.5Z M804.2,302.4 804.3,309.2 799.9,307.6Z M794.9,376.6 790.7,372.4 794.3,370.7Z M790.9,399 787.6,393 792.1,392.3Z M795.4,392.2 791.6,386.6 796,385.4Z M822.3,297.4 821.8,304.2 817.6,302.4Z M829.7,297.1 829.6,303.9 825.3,302.3Z M820.1,314.7 818.2,320.4 815.1,317.9Z M827.8,311.8 826.6,317.6 823.2,315.5Z M802,382 798.6,377.1 802.5,376.1Z M793.2,402.4 791.3,395.9 795.8,396.1Z M799.2,397.8 796.6,391.5 801.2,391.3Z M846.8,312.7 844.9,319.2 841.2,316.5Z M854.3,315.1 852.8,321.7 848.9,319.2Z M840.7,329.3 837.8,334.5 835.2,331.5Z M849.3,328.8 846.9,334.2 844,331.5Z M795.1,408.9 794.6,402.1 799.1,403.4Z M802.1,406.7 800.9,400 805.5,400.8Z M868.4,335.5 865.3,341.5 862.2,338.1Z M875.6,340.5 872.8,346.7 869.5,343.4Z M858.6,350.5 854.8,355.1 852.8,351.6Z M867.7,352.5 864.4,357.4 862,354.1Z M796.5,418.1 797.6,411.4 801.6,413.6Z M804,418.3 804.5,411.5 808.7,413.3Z M886.1,364.7 881.8,370 879.4,366.1Z M892.6,372.1 888.5,377.6 886,373.7Z M872.8,377.1 868.3,381 866.9,377.3Z M882.2,381.7 877.9,385.9 876.2,382.2Z M797.3,429.4 799.9,423.2 803.3,426.3Z M804.9,431.9 807,425.4 810.7,428.2Z M898.9,399 893.6,403.3 892.1,399Z M904.3,408.3 899.2,412.8 897.5,408.6Z M882.7,407.8 877.6,410.9 876.8,407Z M891.9,414.9 887,418.2 886,414.4Z M797.5,442.3 801.6,436.9 804.1,440.8Z M804.8,446.8 808.6,441.1 811.3,444.8Z M906.1,436.5 900.2,439.7 899.5,435.2Z M910.1,447.4 904.2,450.7 903.4,446.2Z M888.6,440.9 883.1,443.2 882.9,439.2Z M896.8,450.3 891.4,452.8 891.1,448.8Z M797.6,456 803,451.9 804.4,456.2Z M804.8,462.1 809.9,457.6 811.6,461.9Z M908.3,465.7 901.8,467.7 902,463.1Z M911.5,467.1 905,469.2 905.1,464.6Z M890.4,466.4 884.6,467.9 885,463.9Z M898,467.9 892.2,469.5 892.5,465.5Z M797.6,465.5 803.9,462.9 804.1,467.5Z M804.5,467.6 810.7,464.8 811.1,469.4Z M557,297.8 560.2,303.8 555.6,304.5Z M561.2,294.1 564.3,300.1 559.8,300.8Z M567.4,292.4 570.1,298.6 565.5,298.9Z M577.2,298.6 578.2,305.3 573.7,304.3Z M577.8,295.1 580.1,301.5 575.5,301.5Z M580.1,293.6 583.1,299.7 578.5,300.2Z M589.5,293.9 591.2,300.4 586.6,300Z M592.2,294.1 594.4,300.5 589.8,300.5Z M597.6,298.5 599.4,305 594.9,304.7Z M597.5,293.1 600.7,299.1 596.1,299.8Z M606.7,292.1 608.7,298.6 604.1,298.3Z M608.6,291 611.3,297.3 606.7,297.6Z M613.9,297.5 616.5,303.8 611.9,304Z M621.3,296.2 622.9,302.8 618.4,302.3Z M624.4,295.7 626.5,302.2 621.9,302.1Z M632.4,289.1 633.7,295.7 629.1,295Z M636.1,295.2 637.3,301.9 632.8,301.1Z M639.8,291 641.5,297.6 636.9,297.2Z M645.6,292.8 646.9,299.4 642.3,298.7Z M645.9,294.9 648.5,301.2 643.9,301.4Z M653.7,294.2 655.1,300.9 650.5,300.3Z M656.5,291.4 658.6,297.9 654,297.7Z M657.9,291.3 661,297.3 656.5,297.9Z M667.7,285.5 669.4,292.1 664.8,291.6Z M670.2,285.5 672.4,291.9 667.8,291.8Z M671.5,291.8 674.7,297.8 670.1,298.4Z M683.4,287.6 684.5,294.3 679.9,293.4Z M681.3,288.2 684.2,294.3 679.6,294.7Z M687.9,295 690.3,301.4 685.7,301.4Z M696.5,293.5 697.4,300.2 692.9,299.3Z M699.9,293.2 701.3,299.8 696.7,299.2Z M701.4,291.8 703.8,298.1 699.2,298.2Z M709.7,289.2 710.9,295.9 706.4,295.2Z M712.7,290.7 714.4,297.3 709.8,296.9Z M720,287.3 721.1,294 716.6,293.2Z M719.5,286.7 722,293 717.4,293.2Z M722.8,288 725.6,294.2 721.1,294.6Z M726.9,286.6 730,292.7 725.4,293.2Z M731,289 734.2,295 729.6,295.6Z M738.6,285.3 740.9,291.7 736.3,291.7Z M743.5,288.3 745.6,294.8 741,294.7Z M750.8,288.2 752.1,294.9 747.5,294.2Z M752.3,282 754.5,288.4 749.9,288.4Z M754.4,284.4 757.4,290.5 752.8,291Z M765.2,288.8 766.2,295.5 761.7,294.6Z M767.8,284.1 769.6,290.6 765,290.3Z M772,283.1 773.9,289.6 769.3,289.3Z M776,288.1 778,294.6 773.4,294.4Z M783.5,282.6 784.7,289.3 780.1,288.5Z M786.5,288.6 787.9,295.2 783.4,294.6Z M793.5,287.7 793.9,294.5 789.5,293.2Z M797.6,286.5 798.4,293.3 793.9,292.2Z M803.1,291.1 803.4,297.9 799,296.6Z M804.2,289.1 805.6,295.7 801.1,295.1Z M814.7,288.3 814.5,295.1 810.2,293.4Z M820.1,291.9 818.8,298.5 814.9,296.2Z M824.2,291.6 823.6,298.3 819.4,296.4Z M830.6,297.4 828.5,303.9 824.9,301.1Z M837.4,299 835.4,305.5 831.8,302.8Z M834.5,302 833.5,308.7 829.4,306.5Z M844.1,300.5 842.4,307.1 838.6,304.5Z M851.6,305.8 848.7,312 845.5,308.7Z M849.1,313.2 846.2,319.4 843,316.2Z M858.3,315.9 854.9,321.8 851.9,318.3Z M863.6,319.8 859.8,325.4 857.1,321.7Z M861.8,324.6 857.9,330.2 855.2,326.5Z M867.2,324.1 863.6,329.9 860.8,326.2Z M869.1,328.5 865.6,334.3 862.7,330.8Z M877.1,337.6 872.2,342.3 870.3,338.1Z M871.4,340.5 867.5,346 864.9,342.2Z M877.3,346.1 872.8,351.2 870.6,347.1Z M881.4,349.9 876.5,354.6 874.6,350.4Z M882.7,354 877.7,358.7 875.9,354.5Z M887.9,359 882.8,363.5 881.1,359.3Z M887.9,359.3 883.5,364.5 881.2,360.5Z M892.1,369.9 886.4,373.6 885.4,369.2Z M897.7,372.3 892.1,376.1 891,371.7Z M895.2,372.4 890.5,377.3 888.4,373.2Z M899.7,380.1 894.4,384.3 892.9,379.9Z M896.6,387.7 890.7,391.2 889.8,386.7Z M902.5,388.8 897,392.8 895.7,388.4Z M900.8,394.6 895.1,398.4 894,394Z M897.6,398.1 892.4,402.5 890.8,398.2Z M900.7,401.8 895.3,406 893.9,401.7Z M906.9,408.6 901.1,412.2 900.2,407.7Z M904,417.2 897.8,419.8 897.5,415.2Z M912.8,419.6 906.7,422.7 906.2,418.1Z M910,424.5 903.9,427.5 903.4,422.9Z M908.4,432.6 901.9,434.6 902.1,430Z M911.8,436.5 905.3,438.7 905.4,434.1Z M911,437.8 905,440.8 904.4,436.3Z M910.3,442.3 904.2,445.4 903.6,440.8Z M906.5,447.5 900.4,450.4 899.9,445.9Z M909,450.5 903.1,454 902.3,449.4Z M905.2,457.4 899,460.2 898.6,455.7Z M912,459.4 906,462.8 905.3,458.2Z M563.2,424.1 559.7,418.3 564.2,417.4Z M567.9,427.9 564.6,422 569.2,421.2Z M569.8,421.9 567.1,415.7 571.7,415.4Z M574.7,424.3 571.8,418.1 576.4,417.7Z M582.7,419.3 578.7,413.8 583.1,412.5Z M587.8,423.1 583.8,417.6 588.3,416.3Z M593.5,425.1 589.4,419.6 593.9,418.3Z M597.6,422.8 593.6,417.3 598,416Z M603.2,423.3 599,417.9 603.3,416.5Z M607.5,424.5 603.4,419.1 607.8,417.7Z M608.2,417.5 604.8,411.5 609.4,410.8Z M612.3,425 609.4,418.9 614,418.4Z M619.7,420.6 615.9,415 620.4,413.8Z M621.9,418.1 618.5,412.3 623.1,411.4Z M628.9,417.3 624.9,411.8 629.3,410.5Z M631.9,416.8 628.5,410.9 633,410.1Z M635.5,421.8 632.5,415.7 637,415.2Z M643.5,417.3 639.3,412 643.7,410.5Z M646.8,418 643.2,412.2 647.7,411.2Z M649.3,416.9 646.1,410.9 650.6,410.2Z M656.8,415.7 652.9,410.2 657.3,408.9Z M661,416 657.2,410.4 661.6,409.2Z M665.8,417.2 661.9,411.6 666.3,410.4Z M671.8,415.5 667.4,410.3 671.7,408.7Z M674.1,412.7 670.3,407 674.7,405.9Z M681.7,415.8 677.5,410.4 681.8,409Z M682.1,411 678.5,405.3 683,404.3Z M688.1,411.1 684.3,405.4 688.8,404.3Z M688.9,408.4 686.1,402.2 690.7,401.8Z M697.5,407.4 693.4,402 697.8,400.6Z M702.3,414.1 698.6,408.4 703.1,407.3Z M702.4,413.6 699.7,407.4 704.3,407.1Z M708.5,408.6 705.2,402.7 709.7,401.9Z M713.7,410.4 710.3,404.5 714.8,403.7Z M717.8,406.5 714.5,400.5 719.1,399.8Z M723.8,407 720.1,401.3 724.5,400.3Z M727.1,404.7 723.8,398.8 728.3,398Z M731.8,406.9 728.4,401 732.9,400.2Z M738.1,402.4 734.1,396.9 738.5,395.6Z M743.1,408.9 739.3,403.3 743.8,402.2Z M744.9,407.1 741.7,401.1 746.3,400.4Z M748.3,405.8 745.5,399.6 750.1,399.3Z M753.4,403.1 750.3,397 754.9,396.4Z M756.6,405.7 754.2,399.4 758.8,399.3Z M761.7,403.7 759.1,397.4 763.6,397.2Z M767.3,400.7 764.1,394.7 768.6,394Z M775.8,398.2 771.5,393 775.8,391.4Z M775.6,400.1 772.8,393.9 777.3,393.5Z M781.1,406.6 778.3,400.4 782.9,400Z M786.9,402.6 783.7,396.6 788.2,395.9Z M781.4,401.2 781.4,394.4 785.7,395.9Z M785.8,400.8 786.6,394.1 790.7,396.1Z M785.5,399.4 788.2,393.2 791.6,396.4Z M790,403.5 792.3,397 795.8,400Z M788.4,405.6 791.8,399.7 794.8,403.2Z M791.7,406.1 796.3,401.1 798.5,405.1Z M790.9,414.2 794.6,408.5 797.4,412.2Z M794.2,415 798.8,410 801,414Z M790.8,418.3 796,413.9 797.6,418.2Z M792,420 798,416.7 798.7,421.2Z M791.8,430 796.8,425.4 798.6,429.6Z M797,432.5 802.2,428.1 803.8,432.4Z M794.9,438.4 799.6,433.5 801.7,437.7Z M796.2,439.4 802,435.9 802.9,440.4Z M796.4,447 801.3,442.4 803.2,446.6Z M795.4,452 800.5,447.6 802.2,451.9Z M794.3,452 800.3,448.9 800.9,453.5Z M800.1,455.4 806.3,452.6 806.6,457.2Z M794.3,457.7 800.8,455.7 800.5,460.3Z M799.7,466.5 805.5,462.9 806.4,467.4Z M522.8,381.7 529.1,379.2 529.3,383.8Z M520.7,378.4 527.1,376.1 527.2,380.7Z M527.9,344.4 533.9,341.4 534.5,346Z M525,361.7 531.4,359.5 531.4,364.1Z M516.6,341.9 522.9,339.5 523,344.1Z M520.2,364.3 526.7,362.4 526.4,367Z M528.7,338.7 535,336.1 535.1,340.7Z M525.9,387.4 532.5,385.7 532.1,390.3Z M523.3,352.2 529.9,350.4 529.5,355Z M526.8,335.4 533.3,333.4 533.1,338Z M526,385.7 532.6,384.1 532.1,388.7Z M526.2,355.3 532.6,353.1 532.5,357.7Z M523.4,360.1 530,358.3 529.6,362.9Z M522.3,376.8 528.8,374.9 528.5,379.5Z M522.8,350.6 529.5,349.2 528.9,353.8Z M529.8,338 536.4,336.4 535.9,341Z M523.7,379.8 530.2,378 529.9,382.6Z M520.3,393 526.5,390.1 526.9,394.7Z M520.9,340.9 527.3,338.4 527.4,343Z M519.2,352.9 525.7,350.8 525.6,355.4Z M523,381.9 529.3,379.4 529.5,384Z M525.1,389.4 531.4,386.9 531.5,391.5Z M520,399.3 526.3,396.7 526.5,401.3Z M526.6,351.1 533.2,349.6 532.7,354.1Z M523.1,384.5 529.5,382.2 529.5,386.8Z M534.5,396.7 540.8,394.2 541,398.8Z M519.2,360.5 525.7,358.3 525.6,362.9Z M527.5,361.8 533.9,359.5 533.9,364.1Z M524.6,366.4 530.8,363.8 531.1,368.4Z M516.7,356.5 523.1,354.1 523.2,358.7Z M531.3,383.8 537.9,382 537.5,386.6Z M533.9,327.6 540.6,326.1 540,330.7Z M529.7,385.4 535.9,382.7 536.2,387.3Z M528.4,382.1 534.6,379.4 534.9,384Z M518.9,359.4 525.2,356.7 525.5,361.3Z M524.6,393.9 531,391.5 531,396.1Z M535.9,323 542.4,321.1 542.1,325.7Z M517.5,349.4 523.9,347 524,351.6Z M526.7,363.6 533.2,361.8 533,366.3Z M525.9,391.8 532.4,389.9 532.1,394.5Z M519.8,339.4 526.3,337.3 526.1,341.9Z M522.1,360.3 528.5,358.2 528.4,362.8Z M518.1,388.5 524.4,386.1 524.5,390.7Z M525.2,327.5 531.7,325.4 531.5,330Z M523.6,371.1 529.8,368.2 530.2,372.8Z M522.8,347.9 529.2,345.5 529.3,350.1Z M527.9,362.7 534.1,359.8 534.5,364.4Z M525.2,325.8 531.8,324.2 531.3,328.8Z M521.1,391 527.7,389.2 527.3,393.8Z M525.4,397.8 531.8,395.5 531.8,400.1Z M527.6,376.1 534.1,374.3 533.8,378.9Z M518.1,389.2 524.7,387.4 524.4,391.9Z M519.4,334.9 525.5,331.9 526,336.5Z M527.1,359.7 533.2,356.7 533.7,361.3Z M524.9,380.1 531.1,377.4 531.4,382Z M533.1,325.7 539.6,323.9 539.3,328.4Z M520.8,368.4 527.4,366.7 527,371.3Z M522.3,394.8 528.9,393 528.5,397.6Z M531.1,385 537.7,383.6 537.2,388.1Z M527.4,354.7 533.7,352.3 533.8,356.9Z" fill="#00009c"/><path d="M565.7,322.9a1.8,1.8 0 1,0 3.6,0a1.8,1.8 0 1,0 -3.6,0 M566.9,348.1a1.8,1.8 0 1,0 3.6,0a1.8,1.8 0 1,0 -3.6,0 M573.7,338.2a1.8,1.8 0 1,0 3.6,0a1.8,1.8 0 1,0 -3.6,0 M567,372.9a1.8,1.8 0 1,0 3.6,0a1.8,1.8 0 1,0 -3.6,0 M574.2,364.2a1.8,1.8 0 1,0 3.6,0a1.8,1.8 0 1,0 -3.6,0 M573.7,388.1a1.8,1.8 0 1,0 3.6,0a1.8,1.8 0 1,0 -3.6,0 M586.6,321.4a1.8,1.8 0 1,0 3.6,0a1.8,1.8 0 1,0 -3.6,0 M587.8,346.4a1.8,1.8 0 1,0 3.6,0a1.8,1.8 0 1,0 -3.6,0 M594.6,336.6a1.8,1.8 0 1,0 3.6,0a1.8,1.8 0 1,0 -3.6,0 M587.9,371a1.8,1.8 0 1,0 3.6,0a1.8,1.8 0 1,0 -3.6,0 M595.1,362.4a1.8,1.8 0 1,0 3.6,0a1.8,1.8 0 1,0 -3.6,0 M594.6,386.1a1.8,1.8 0 1,0 3.6,0a1.8,1.8 0 1,0 -3.6,0 M607.5,320a1.8,1.8 0 1,0 3.6,0a1.8,1.8 0 1,0 -3.6,0 M608.7,344.7a1.8,1.8 0 1,0 3.6,0a1.8,1.8 0 1,0 -3.6,0 M615.5,335a1.8,1.8 0 1,0 3.6,0a1.8,1.8 0 1,0 -3.6,0 M608.9,369.1a1.8,1.8 0 1,0 3.6,0a1.8,1.8 0 1,0 -3.6,0 M616,360.6a1.8,1.8 0 1,0 3.6,0a1.8,1.8 0 1,0 -3.6,0 M615.5,384.1a1.8,1.8 0 1,0 3.6,0a1.8,1.8 0 1,0 -3.6,0 M628.4,318.5a1.8,1.8 0 1,0 3.6,0a1.8,1.8 0 1,0 -3.6,0 M629.6,343a1.8,1.8 0 1,0 3.6,0a1.8,1.8 0 1,0 -3.6,0 M636.4,333.4a1.8,1.8 0 1,0 3.6,0a1.8,1.8 0 1,0 -3.6,0 M629.8,367.2a1.8,1.8 0 1,0 3.6,0a1.8,1.8 0 1,0 -3.6,0 M636.9,358.8a1.8,1.8 0 1,0 3.6,0a1.8,1.8 0 1,0 -3.6,0 M636.4,382.1a1.8,1.8 0 1,0 3.6,0a1.8,1.8 0 1,0 -3.6,0 M649.3,317a1.8,1.8 0 1,0 3.6,0a1.8,1.8 0 1,0 -3.6,0 M650.5,341.4a1.8,1.8 0 1,0 3.6,0a1.8,1.8 0 1,0 -3.6,0 M657.4,331.8a1.8,1.8 0 1,0 3.6,0a1.8,1.8 0 1,0 -3.6,0 M650.7,365.3a1.8,1.8 0 1,0 3.6,0a1.8,1.8 0 1,0 -3.6,0 M657.8,357a1.8,1.8 0 1,0 3.6,0a1.8,1.8 0 1,0 -3.6,0 M657.3,380a1.8,1.8 0 1,0 3.6,0a1.8,1.8 0 1,0 -3.6,0 M670.3,315.6a1.8,1.8 0 1,0 3.6,0a1.8,1.8 0 1,0 -3.6,0 M671.5,339.7a1.8,1.8 0 1,0 3.6,0a1.8,1.8 0 1,0 -3.6,0 M678.3,330.2a1.8,1.8 0 1,0 3.6,0a1.8,1.8 0 1,0 -3.6,0 M671.6,363.4a1.8,1.8 0 1,0 3.6,0a1.8,1.8 0 1,0 -3.6,0 M678.8,355.1a1.8,1.8 0 1,0 3.6,0a1.8,1.8 0 1,0 -3.6,0 M678.3,378a1.8,1.8 0 1,0 3.6,0a1.8,1.8 0 1,0 -3.6,0 M691.2,314.1a1.8,1.8 0 1,0 3.6,0a1.8,1.8 0 1,0 -3.6,0 M692.4,338a1.8,1.8 0 1,0 3.6,0a1.8,1.8 0 1,0 -3.6,0 M699.2,328.6a1.8,1.8 0 1,0 3.6,0a1.8,1.8 0 1,0 -3.6,0 M692.5,361.6a1.8,1.8 0 1,0 3.6,0a1.8,1.8 0 1,0 -3.6,0 M699.7,353.3a1.8,1.8 0 1,0 3.6,0a1.8,1.8 0 1,0 -3.6,0 M699.2,376a1.8,1.8 0 1,0 3.6,0a1.8,1.8 0 1,0 -3.6,0 M712.1,312.6a1.8,1.8 0 1,0 3.6,0a1.8,1.8 0 1,0 -3.6,0 M713.3,336.3a1.8,1.8 0 1,0 3.6,0a1.8,1.8 0 1,0 -3.6,0 M720.1,327.1a1.8,1.8 0 1,0 3.6,0a1.8,1.8 0 1,0 -3.6,0 M713.4,359.7a1.8,1.8 0 1,0 3.6,0a1.8,1.8 0 1,0 -3.6,0 M720.6,351.5a1.8,1.8 0 1,0 3.6,0a1.8,1.8 0 1,0 -3.6,0 M720.1,374a1.8,1.8 0 1,0 3.6,0a1.8,1.8 0 1,0 -3.6,0 M733,311.2a1.8,1.8 0 1,0 3.6,0a1.8,1.8 0 1,0 -3.6,0 M734.2,334.7a1.8,1.8 0 1,0 3.6,0a1.8,1.8 0 1,0 -3.6,0 M741,325.5a1.8,1.8 0 1,0 3.6,0a1.8,1.8 0 1,0 -3.6,0 M734.3,357.8a1.8,1.8 0 1,0 3.6,0a1.8,1.8 0 1,0 -3.6,0 M741.5,349.7a1.8,1.8 0 1,0 3.6,0a1.8,1.8 0 1,0 -3.6,0 M741,372a1.8,1.8 0 1,0 3.6,0a1.8,1.8 0 1,0 -3.6,0 M753.9,309.7a1.8,1.8 0 1,0 3.6,0a1.8,1.8 0 1,0 -3.6,0 M755.1,333a1.8,1.8 0 1,0 3.6,0a1.8,1.8 0 1,0 -3.6,0 M761.9,323.9a1.8,1.8 0 1,0 3.6,0a1.8,1.8 0 1,0 -3.6,0 M755.2,355.9a1.8,1.8 0 1,0 3.6,0a1.8,1.8 0 1,0 -3.6,0 M762.4,347.9a1.8,1.8 0 1,0 3.6,0a1.8,1.8 0 1,0 -3.6,0 M761.9,369.9a1.8,1.8 0 1,0 3.6,0a1.8,1.8 0 1,0 -3.6,0 M774.8,308.2a1.8,1.8 0 1,0 3.6,0a1.8,1.8 0 1,0 -3.6,0 M776,331.3a1.8,1.8 0 1,0 3.6,0a1.8,1.8 0 1,0 -3.6,0 M782.8,322.3a1.8,1.8 0 1,0 3.6,0a1.8,1.8 0 1,0 -3.6,0 M776.1,354a1.8,1.8 0 1,0 3.6,0a1.8,1.8 0 1,0 -3.6,0 M783.3,346.1a1.8,1.8 0 1,0 3.6,0a1.8,1.8 0 1,0 -3.6,0 M782.8,367.9a1.8,1.8 0 1,0 3.6,0a1.8,1.8 0 1,0 -3.6,0 M795.4,308.5a1.8,1.8 0 1,0 3.6,0a1.8,1.8 0 1,0 -3.6,0 M795.5,331.3a1.8,1.8 0 1,0 3.6,0a1.8,1.8 0 1,0 -3.6,0 M801.7,324a1.8,1.8 0 1,0 3.6,0a1.8,1.8 0 1,0 -3.6,0 M794.6,353.7a1.8,1.8 0 1,0 3.6,0a1.8,1.8 0 1,0 -3.6,0 M799.9,347.5a1.8,1.8 0 1,0 3.6,0a1.8,1.8 0 1,0 -3.6,0 M797.4,369a1.8,1.8 0 1,0 3.6,0a1.8,1.8 0 1,0 -3.6,0 M812.7,338.2a1.8,1.8 0 1,0 3.6,0a1.8,1.8 0 1,0 -3.6,0 M820.4,333.3a1.8,1.8 0 1,0 3.6,0a1.8,1.8 0 1,0 -3.6,0 M806.6,360.4a1.8,1.8 0 1,0 3.6,0a1.8,1.8 0 1,0 -3.6,0 M813.3,356.2a1.8,1.8 0 1,0 3.6,0a1.8,1.8 0 1,0 -3.6,0 M805.9,376.8a1.8,1.8 0 1,0 3.6,0a1.8,1.8 0 1,0 -3.6,0 M828.1,351.4a1.8,1.8 0 1,0 3.6,0a1.8,1.8 0 1,0 -3.6,0 M837,349.1a1.8,1.8 0 1,0 3.6,0a1.8,1.8 0 1,0 -3.6,0 M816.9,372.1a1.8,1.8 0 1,0 3.6,0a1.8,1.8 0 1,0 -3.6,0 M824.8,370.1a1.8,1.8 0 1,0 3.6,0a1.8,1.8 0 1,0 -3.6,0 M806,390.5a1.8,1.8 0 1,0 3.6,0a1.8,1.8 0 1,0 -3.6,0 M812.9,388.7a1.8,1.8 0 1,0 3.6,0a1.8,1.8 0 1,0 -3.6,0 M840.9,369.9a1.8,1.8 0 1,0 3.6,0a1.8,1.8 0 1,0 -3.6,0 M850.7,370.3a1.8,1.8 0 1,0 3.6,0a1.8,1.8 0 1,0 -3.6,0 M825.1,388a1.8,1.8 0 1,0 3.6,0a1.8,1.8 0 1,0 -3.6,0 M833.7,388.4a1.8,1.8 0 1,0 3.6,0a1.8,1.8 0 1,0 -3.6,0 M810.5,403.3a1.8,1.8 0 1,0 3.6,0a1.8,1.8 0 1,0 -3.6,0 M817.8,403.9a1.8,1.8 0 1,0 3.6,0a1.8,1.8 0 1,0 -3.6,0 M850.8,392.7a1.8,1.8 0 1,0 3.6,0a1.8,1.8 0 1,0 -3.6,0 M860.9,395.8a1.8,1.8 0 1,0 3.6,0a1.8,1.8 0 1,0 -3.6,0 M830.7,407.2a1.8,1.8 0 1,0 3.6,0a1.8,1.8 0 1,0 -3.6,0 M839.9,409.9a1.8,1.8 0 1,0 3.6,0a1.8,1.8 0 1,0 -3.6,0 M813.4,418.7a1.8,1.8 0 1,0 3.6,0a1.8,1.8 0 1,0 -3.6,0 M820.8,421.6a1.8,1.8 0 1,0 3.6,0a1.8,1.8 0 1,0 -3.6,0 M857.1,418.6a1.8,1.8 0 1,0 3.6,0a1.8,1.8 0 1,0 -3.6,0 M867.2,424.3a1.8,1.8 0 1,0 3.6,0a1.8,1.8 0 1,0 -3.6,0 M833.7,428.4a1.8,1.8 0 1,0 3.6,0a1.8,1.8 0 1,0 -3.6,0 M843.1,433.4a1.8,1.8 0 1,0 3.6,0a1.8,1.8 0 1,0 -3.6,0 M814.7,435.8a1.8,1.8 0 1,0 3.6,0a1.8,1.8 0 1,0 -3.6,0 M821.6,440.8a1.8,1.8 0 1,0 3.6,0a1.8,1.8 0 1,0 -3.6,0 M861.3,445.9a1.8,1.8 0 1,0 3.6,0a1.8,1.8 0 1,0 -3.6,0 M870.7,454.1a1.8,1.8 0 1,0 3.6,0a1.8,1.8 0 1,0 -3.6,0 M836.3,450.3a1.8,1.8 0 1,0 3.6,0a1.8,1.8 0 1,0 -3.6,0 M845.2,457.5a1.8,1.8 0 1,0 3.6,0a1.8,1.8 0 1,0 -3.6,0 M816,453.4a1.8,1.8 0 1,0 3.6,0a1.8,1.8 0 1,0 -3.6,0 M822.6,460a1.8,1.8 0 1,0 3.6,0a1.8,1.8 0 1,0 -3.6,0 M862.6,466.6a1.8,1.8 0 1,0 3.6,0a1.8,1.8 0 1,0 -3.6,0 M871.5,468.3a1.8,1.8 0 1,0 3.6,0a1.8,1.8 0 1,0 -3.6,0 M837.1,466.6a1.8,1.8 0 1,0 3.6,0a1.8,1.8 0 1,0 -3.6,0 M845.6,468.3a1.8,1.8 0 1,0 3.6,0a1.8,1.8 0 1,0 -3.6,0 M816.4,466.2a1.8,1.8 0 1,0 3.6,0a1.8,1.8 0 1,0 -3.6,0 M822.6,468a1.8,1.8 0 1,0 3.6,0a1.8,1.8 0 1,0 -3.6,0" fill="#080890"/><path d="M836,504.2 836.7,492.4 M884.8,500.4 884.4,489.9 M812.6,491.7 812.9,480.4 M894.6,464.1 893.9,453.4 M858.8,502 858.1,489.9 M869.5,472.8 869.7,461 M850,499.7 850.9,489.3 M827.9,486.7 827.3,474.9 M886.7,455.9 887.4,443.5 M852.8,490.4 852.7,478.5 M893.3,494.9 893.4,484.5 M828,455.5 827.6,444.2 M892,493.5 892.7,482.2 M826.5,457 826,446.5 M839.9,470.9 840.6,458.3" stroke="#1010b0" stroke-width="1.0" fill="none"/><path d="M902.4,488.6 902.9,464.3 M932.9,465.1 933.8,439.8 M833.7,494 834.2,480 M874.5,474.4 874.4,457.4 M790.3,466.1 789.5,444.7 M863.4,475.7 863.6,458 M795.9,500.6 796.2,480.1 M815.9,494.3 815.4,478.3 M820.3,474.9 820.4,458.5 M794.2,467.3 793.3,442.1 M911.2,490.9 910.5,465.1 M893,501.8 892.7,485 M871.8,471.4 871.8,457.1 M896.5,490.9 895.9,476.6 M789.9,477.3 789.3,453.2 M857.9,487.6 857.3,470.6 M757.4,477.7 756.4,448.3 M762.8,479.8 763,452.9 M907.1,481.4 907.1,458.5 M777.8,464 778.2,443.4 M789.2,462.2 789.8,438.8 M856.8,476.6 857.6,463.3 M824.2,482.6 823.7,466.7 M801.8,502.2 802.8,474.2 M780.8,480.5 781.4,451.4 M848.7,455.7 848.1,440.7 M896.2,457.5 895.4,441.8 M825.4,487.2 826.4,471.8 M892,454.1 892.8,438.2 M890.6,456.2 890.8,442.7 M915.9,473 916.8,451.9 M931.5,473.1 931,444.7 M756.6,479.2 757,452.1 M781.8,493.6 782.4,466.7 M929.5,468.9 929.3,448 M797.5,457.1 797.2,431.1 M892.1,456.6 891.1,442.7 M879.8,479 880.4,465.6 M796.6,466.4 796.3,444.3 M794.5,498.5 794.7,475.5 M890.5,485.7 890.9,472.1 M802.2,456.7 801.5,429.8 M932.1,484.6 931.5,461.8 M903.8,473.6 903.2,444.7 M778.2,461.1 777.9,436.1 M913.7,472.5 914.7,450.6 M846.2,477.9 845.6,460.4 M765.1,485.1 764.6,461.6 M905.5,490.3 906.2,465.2 M781.9,496.9 782.7,470.2 M915.4,488.2 915.3,458.6 M797.6,495.4 797.8,471.6 M769.8,474.8 770.6,449.8 M785.8,498.9 785,470.5 M818.9,458.9 818.8,442.9 M911.5,462.9 912,442.5 M831.8,487.2 832.7,470.1 M783.3,493.2 783.6,470.4 M788.1,473 789.1,446.5 M874.7,456.3 874.5,438.6 M770.3,466.4 770.9,443 M839.6,484 839.2,470.9 M940.1,472.3 939.5,449.2 M888,473.7 887.7,460.2 M886,487 885.8,473.9 M896.3,474.7 895.7,457.5 M764.4,485.9 764.7,458.1 M833.2,488 833.7,474.3 M774.7,469.7 775.2,447 M788.2,498.4 788.2,475.5 M850.6,472.4 851.3,457.8 M791.6,499.6 791.1,477.2 M912.4,486.8 912.9,460 M774.4,491.1 773.6,468 M790,456.3 790.3,429.3 M925,469.2 924.7,445.2 M883.2,502 883.3,487.9 M803.8,454.8 803.1,431.4 M904.5,485.2 904.5,456.7 M812,459.5 811.8,444.9 M834.8,503.4 835.4,486.7 M893.8,496.7 894.3,482.7 M921.1,462.2 921.6,434 M794.6,456.9 793.8,429.8 M778.6,462.6 778.1,440.5 M852.8,486.5 853.2,468.7 M924.1,478.5 923.4,455.7 M907.7,484.8 907.8,456.7 M932.6,484.3 931.9,462 M812.7,496.4 812.2,480.1 M870.4,502.8 871,488.5 M931.1,482.7 930.2,457.7 M859.3,483.4 861.8,473.5 M893.5,476.6 892.4,493.5 M806.8,472 807.5,484 M831.6,481.2 825.8,490.4 M832.5,482.7 832.1,471.1 M890.1,477.1 891.2,493.4 M820.8,477.3 811.8,485.4 M880.2,477.4 889,482.7 M819.1,478 820.5,464.2 M819,479.3 809.4,471.3 M835.4,480.6 836.3,466.5 M859.5,483.9 858.8,468.7 M872.4,481.7 874,466.9 M856.4,480.7 856.5,469.2 M865.9,483.1 866.7,467.4 M804.7,471.2 803.4,488.4 M857.9,480.4 860,482.4 M865.1,484 865,473.7 M808,471.2 807.3,485.7 M858.1,485.3 857.1,469.9 M865.2,482.6 867,470 M843.2,483.8 844.2,498.3 M823.9,477.8 815.8,482 M820.8,480.9 811.8,490 M833.7,482.2 831.9,494.1 M803.4,468.9 789.1,476.7 M833.7,479 835.3,467.8 M896.8,468.5 897.9,458.2 M843.4,482.3 842,472.2 M815.4,481.5 804.7,471.8 M892.6,475.8 891,492.1 M810.2,470.8 810.5,455.8 M851.4,483.6 851.5,473.4 M896.6,470.1 897.3,484.6 M885.6,477.6 884.4,493.2 M821,482.2 812,493.7 M843.5,480.4 841.2,474.2 M811.1,471.6 810.3,487.7 M892.8,478.1 890.8,467.7 M895.3,474.5 908.5,471.7 M807.6,470.2 809.3,455.8 M816.6,479.4 806.2,484.9 M825.4,483.5 824.1,467.9 M860.6,481.3 862,491.5 M865.6,480 870,483.8 M855.6,484.5 854.7,496.5 M860.6,480.9 862.3,493.5 M818.1,480.6 818.2,470 M810.6,477.1 808.9,488 M855.3,480.2 856.6,481.1 M805.3,474.2 791.6,480.8 M833.4,480.1 834.3,467.5 M896.5,474.7 910.2,479.2 M826.5,482.1 825.9,466.3 M897.3,473.8 911.2,485 M831.5,482.5 825.7,472.2 M863.9,483.6 867.8,471.9 M868.2,479.4 868.8,493.5 M810.9,473.9 809.9,461.6 M822.4,483.3 823.8,470.6 M873.6,480.2 872,469 M870.8,482.2 869.1,471.7 M816.3,476.7 815,487.9 M897.8,472.5 911.8,462.6 M836.4,481.3 837.8,492.3 M804.5,472 804,457.5 M867.2,482.8 868.8,471.8 M820,475.7 810.7,468.4 M885.8,477.1 896.3,486.5 M879.2,476.9 880.6,488.8 M896.4,468 896.7,481.9 M864.5,484.9 864.2,474.6 M887.6,476.6 889.3,463.2 M894.2,473.6 907.1,476.3 M807.6,468.3 809.3,455.1 M882.6,480.8 881,467.9 M858.2,484.6 856.5,471.9 M874.1,481.7 872.4,497.4 M853.2,483 853.8,486.7 M846,482.8 844.5,471.6 M832,482.5 832.6,471.6 M816.2,478.5 816.8,493.7 M821.1,480.1 812.1,470.1 M883.9,477.5 885.3,465.6 M874.6,478.1 875.3,468 M804,471.1 789.9,479.6 M820.3,477.4 819.1,464.6 M878.6,479.2 876.7,490.6 M864.7,482.9 863.6,467.9 M893.5,476.2 893.8,491.9 M891.2,472.6 889.8,483.7 M848.3,485.3 847,472.7 M897.5,474.2 899,489.5 M812.1,473.6 800.4,471.4 M898.9,468.9 900.5,458.5 M816.2,476.6 816.3,461.5 M814.1,477.1 813.9,464.1 M847.7,482.2 846.7,493.3 M886.3,479.4 896.9,476.5 M812.2,475.8 811.6,490 M824.1,482.3 816,486.7 M886.1,480.2 886,495.6 M823.8,478.2 824.9,490 M863.7,480.9 863.3,492 M818,480.2 818.6,496.4 M891.7,472.8 890.1,486.8 M808.7,474.8 809,492.4 M839.1,483.8 838.4,500.3 M825.8,482.2 825.3,499.9 M818.8,479.2 809.2,473.2 M839.5,481.6 840.1,492.9 M895.8,472.8 909.2,461.9 M808,472.9 795,467.5 M892.9,470.1 905.5,464.1 M888.4,478.7 886.5,468 M808.8,469.7 807.1,482.5 M880.5,482.4 878.7,493 M888.7,476.6 900,487.9 M895.3,473.6 908.6,473.4 M891.7,477.2 892.8,462.1 M860.8,479.7 862,496.1 M895.5,471.2 908.9,470.1 M857.4,483.7 859.4,483 M857.3,485.3 855.8,471.5 M883,478.2 892.6,474.1 M894.6,468.6 907.7,463.6 M832.6,482.4 831.4,470.5 M827.1,479.2 826.9,467.1 M824.6,481.4 824.2,495.6 M878.9,479.4 877.1,493.5 M894.5,477.7 892.6,490.2 M816.4,480 806,485.2 M848.4,480.6 848.9,468 M897.8,472 897.1,485.8 M824.2,479.2 825.3,495 M873.6,482.3 874.1,470.6 M899.6,473.1 897.8,459 M897.7,472.7 911.7,479.2 M857.5,482.1 858.4,467.7 M899.2,471.4 913.7,462" stroke="#0c0cc0" stroke-width="0.95" fill="none"/><path d="M902.9,463.3 904.8,468.9 900.8,468.8Z M933.8,438.8 935.6,444.5 931.6,444.3Z M834.2,479 836,484.7 832,484.5Z M874.4,456.4 876.5,462 872.5,462Z M789.5,443.7 791.7,449.3 787.7,449.4Z M863.6,457 865.5,462.6 861.5,462.5Z M796.2,479.1 798.1,484.7 794.1,484.6Z M815.3,477.3 817.5,482.9 813.5,483Z M820.4,457.5 822.4,463.2 818.4,463.1Z M793.2,441.1 795.4,446.6 791.4,446.8Z M910.5,464.1 912.6,469.7 908.6,469.8Z M892.7,484 894.8,489.6 890.8,489.7Z M871.8,456.1 873.8,461.7 869.8,461.7Z M895.8,475.6 898.1,481.1 894.1,481.3Z M789.3,452.2 791.4,457.8 787.4,457.9Z M857.3,469.6 859.5,475.1 855.5,475.2Z M756.4,447.3 758.6,452.8 754.6,452.9Z M763,451.9 765,457.5 761,457.5Z M907.1,457.5 909.1,463.1 905.1,463.1Z M778.2,442.4 780.1,448 776.1,448Z M789.9,437.8 791.7,443.5 787.7,443.4Z M857.7,462.3 859.3,468 855.3,467.8Z M823.7,465.7 825.9,471.2 821.9,471.4Z M802.8,473.2 804.6,478.9 800.6,478.8Z M781.4,450.4 783.3,456.1 779.3,456Z M848.1,439.7 850.3,445.2 846.3,445.3Z M895.3,440.8 897.6,446.3 893.6,446.5Z M826.4,470.8 828.1,476.5 824.1,476.2Z M892.8,437.2 894.5,442.9 890.5,442.7Z M890.8,441.7 892.7,447.4 888.7,447.3Z M916.8,450.9 918.6,456.6 914.6,456.4Z M931,443.7 933.1,449.3 929.1,449.4Z M757,451.1 758.9,456.8 754.9,456.7Z M782.4,465.7 784.3,471.4 780.3,471.3Z M929.3,447 931.3,452.6 927.3,452.6Z M797.2,430.1 799.2,435.7 795.2,435.7Z M891.1,441.7 893.4,447.2 889.5,447.5Z M880.4,464.6 882.2,470.3 878.2,470.1Z M796.3,443.3 798.4,448.8 794.4,448.9Z M794.7,474.5 796.7,480.2 792.7,480.1Z M891,471.1 892.8,476.8 888.8,476.7Z M801.5,428.8 803.6,434.4 799.6,434.5Z M931.5,460.8 933.6,466.4 929.6,466.5Z M903.2,443.7 905.3,449.2 901.3,449.3Z M777.9,435.1 780,440.7 776,440.7Z M914.7,449.6 916.5,455.3 912.5,455.1Z M845.5,459.4 847.7,464.9 843.7,465Z M764.6,460.6 766.7,466.1 762.7,466.2Z M906.3,464.2 908.1,469.8 904.1,469.7Z M782.7,469.2 784.5,474.9 780.5,474.8Z M915.3,457.6 917.3,463.2 913.3,463.2Z M797.8,470.6 799.8,476.2 795.8,476.2Z M770.6,448.8 772.5,454.5 768.5,454.4Z M784.9,469.6 787.1,475.1 783.1,475.2Z M818.8,441.9 820.9,447.5 816.9,447.5Z M912,441.5 913.9,447.2 909.9,447.1Z M832.8,469.1 834.5,474.8 830.5,474.6Z M783.6,469.4 785.5,475 781.5,474.9Z M789.1,445.5 790.9,451.2 786.9,451Z M874.4,437.6 876.5,443.2 872.5,443.2Z M770.9,442 772.8,447.6 768.8,447.5Z M839.1,469.9 841.3,475.5 837.3,475.6Z M939.5,448.2 941.6,453.8 937.6,453.9Z M887.6,459.2 889.8,464.7 885.8,464.8Z M885.8,472.9 887.9,478.5 883.9,478.5Z M895.7,456.5 897.9,462 893.9,462.1Z M764.7,457.1 766.7,462.7 762.7,462.7Z M833.7,473.3 835.5,478.9 831.5,478.8Z M775.2,446 777.1,451.6 773.1,451.5Z M788.2,474.5 790.2,480.1 786.2,480.1Z M851.3,456.8 853.1,462.5 849.1,462.3Z M791.1,476.2 793.2,481.7 789.2,481.8Z M912.9,459 914.8,464.7 910.8,464.6Z M773.6,467 775.7,472.6 771.7,472.7Z M790.3,428.3 792.2,434 788.2,433.9Z M924.6,444.2 926.7,449.8 922.7,449.9Z M883.3,486.9 885.3,492.5 881.3,492.5Z M803,430.4 805.2,435.9 801.2,436Z M904.5,455.7 906.5,461.3 902.5,461.3Z M811.8,443.9 813.8,449.5 809.8,449.5Z M835.5,485.7 837.3,491.4 833.3,491.3Z M894.3,481.7 896.1,487.3 892.1,487.2Z M921.6,433 923.5,438.6 919.5,438.5Z M793.8,428.8 796,434.4 792,434.5Z M778.1,439.5 780.2,445.1 776.2,445.1Z M853.2,467.7 855.1,473.3 851.1,473.2Z M923.4,454.7 925.6,460.3 921.6,460.4Z M907.8,455.7 909.8,461.3 905.8,461.3Z M931.8,461 934,466.6 930,466.7Z M812.1,479.1 814.3,484.6 810.3,484.8Z M871.1,487.5 872.8,493.2 868.8,493Z M930.2,456.7 932.4,462.2 928.4,462.3Z M862,472.6 862.7,479.3 858.2,478.2Z M892.3,494.5 890.5,488 895.1,488.3Z M807.5,485 804.9,478.7 809.5,478.5Z M825.3,491.2 826.8,484.6 830.7,487Z M832.1,470.1 834.6,476.4 830,476.5Z M891.3,494.4 888.6,488.2 893.2,487.9Z M811,486.1 814.3,480.1 817.3,483.5Z M889.8,483.2 883.1,481.9 885.5,477.9Z M820.5,463.2 822.2,469.8 817.6,469.3Z M808.6,470.6 815,473 812,476.5Z M836.4,465.5 838.3,472 833.7,471.7Z M858.8,467.7 861.4,474 856.8,474.2Z M874.1,465.9 875.7,472.5 871.1,472Z M856.5,468.2 858.7,474.6 854.1,474.6Z M866.7,466.4 868.7,472.9 864.1,472.7Z M803.3,489.4 801.5,482.9 806.1,483.2Z M860.7,483.1 854.5,480.3 857.8,477Z M865,472.7 867.4,479.1 862.8,479.2Z M807.3,486.7 805.3,480.2 809.9,480.4Z M857,468.9 859.8,475.1 855.2,475.4Z M867.1,469 868.5,475.6 864,475Z M844.3,499.3 841.6,493.1 846.2,492.8Z M814.9,482.4 819.6,477.5 821.7,481.6Z M811.1,490.7 813.9,484.5 817.2,487.8Z M831.8,495.1 830.4,488.5 835,489.1Z M788.3,477.2 792.8,472.1 795,476.1Z M835.4,466.8 836.8,473.5 832.2,472.8Z M898,457.2 899.6,463.8 895,463.3Z M841.9,471.2 845,477.2 840.5,477.8Z M803.9,471.2 810.2,473.8 807.1,477.2Z M890.9,493.1 889.2,486.5 893.8,486.9Z M810.5,454.8 812.7,461.3 808.1,461.2Z M851.5,472.4 853.7,478.9 849.1,478.8Z M897.3,485.6 894.7,479.3 899.3,479.1Z M884.4,494.2 882.5,487.7 887.1,488Z M811.4,494.5 813.5,488 817.2,490.9Z M840.9,473.2 845.2,478.5 840.9,480Z M810.2,488.7 808.2,482.2 812.8,482.5Z M890.6,466.7 894.1,472.6 889.5,473.4Z M909.5,471.5 903.7,475.1 902.8,470.6Z M809.4,454.8 810.9,461.4 806.4,460.9Z M805.3,485.3 809.9,480.3 812.1,484.4Z M824,466.9 826.8,473.1 822.2,473.4Z M862.1,492.5 859,486.5 863.6,485.8Z M870.7,484.4 864.4,482 867.4,478.5Z M854.6,497.5 852.8,490.9 857.4,491.3Z M862.4,494.5 859.3,488.4 863.9,487.8Z M818.2,469 820.5,475.4 815.9,475.3Z M808.7,489 807.5,482.3 812,483.1Z M857.4,481.7 850.9,479.9 853.5,476.1Z M790.7,481.3 795.5,476.4 797.5,480.5Z M834.3,466.5 836.2,473.1 831.6,472.8Z M911.2,479.5 904.4,479.7 905.8,475.4Z M825.9,465.3 828.4,471.6 823.8,471.8Z M912,485.6 905.5,483.4 908.4,479.8Z M825.2,471.3 830.3,475.7 826.3,478Z M868.1,471 868.2,477.8 863.9,476.3Z M868.9,494.5 866.3,488.2 870.9,488Z M809.8,460.6 812.6,466.8 808,467.1Z M823.9,469.6 825.5,476.2 820.9,475.7Z M871.8,468 875,474 870.5,474.6Z M868.9,470.7 872.2,476.7 867.7,477.4Z M814.9,488.9 813.4,482.2 817.9,482.8Z M912.6,462.1 908.7,467.6 906.1,463.9Z M838,493.3 834.9,487.3 839.4,486.7Z M803.9,456.5 806.5,462.8 801.9,463Z M869,470.9 870.3,477.5 865.8,476.8Z M809.9,467.8 816.3,469.9 813.5,473.5Z M897,487.2 890.7,484.6 893.8,481.2Z M880.7,489.8 877.7,483.7 882.2,483.1Z M896.7,482.9 894.3,476.6 898.9,476.5Z M864.2,473.6 866.6,479.9 862,480Z M889.5,462.2 890.9,468.9 886.3,468.3Z M908.1,476.5 901.4,477.4 902.3,472.9Z M809.5,454.1 810.9,460.8 806.3,460.2Z M880.9,466.9 883.9,473 879.4,473.5Z M856.4,470.9 859.5,477 855,477.6Z M872.3,498.4 870.7,491.8 875.3,492.3Z M854,487.7 850.6,481.8 855.1,481Z M844.4,470.6 847.5,476.6 843,477.2Z M832.6,470.6 834.6,477.1 830,476.9Z M816.8,494.7 814.3,488.4 818.9,488.3Z M811.4,469.3 817.4,472.5 814,475.6Z M885.4,464.6 887,471.3 882.4,470.7Z M875.4,467 877.2,473.5 872.6,473.2Z M789,480.1 793.3,474.8 795.7,478.8Z M819,463.6 821.9,469.7 817.3,470.2Z M876.5,491.6 875.3,484.9 879.8,485.7Z M863.5,466.9 866.3,473.1 861.7,473.4Z M893.8,492.9 891.4,486.5 896,486.4Z M889.7,484.7 888.2,478 892.8,478.6Z M846.8,471.8 849.8,477.9 845.2,478.4Z M899.1,490.5 896.2,484.4 900.8,483.9Z M799.5,471.2 806.2,470.1 805.3,474.6Z M900.7,457.5 901.9,464.1 897.4,463.4Z M816.3,460.5 818.5,466.9 813.9,466.9Z M813.9,463.1 816.3,469.4 811.7,469.5Z M846.6,494.2 844.9,487.7 849.5,488.1Z M897.8,476.3 892.2,480.1 891.1,475.7Z M811.6,491 809.5,484.6 814.1,484.7Z M815.2,487.2 819.7,482.1 821.9,486.2Z M886,496.6 883.7,490.2 888.3,490.2Z M825,491 822.1,484.9 826.7,484.4Z M863.3,493 861.2,486.5 865.8,486.7Z M818.7,497.4 816.1,491.1 820.7,490.9Z M890,487.8 888.4,481.2 893,481.7Z M809,493.4 806.6,487 811.2,486.9Z M838.3,501.3 836.3,494.8 840.9,495Z M825.3,500.9 823.2,494.4 827.8,494.6Z M808.3,472.7 815,474.1 812.5,478Z M840.1,493.9 837.5,487.7 842.1,487.4Z M910,461.3 906.5,467.1 903.6,463.5Z M794.1,467.1 800.9,467.4 799.1,471.7Z M906.4,463.6 901.6,468.5 899.6,464.3Z M886.3,467 889.7,472.9 885.1,473.7Z M806.9,483.5 805.5,476.9 810.1,477.5Z M878.5,494 877.3,487.3 881.9,488.1Z M900.7,488.7 894.6,485.7 897.8,482.5Z M909.6,473.4 903.3,475.8 903.2,471.2Z M892.8,461.1 894.7,467.7 890.1,467.4Z M862.1,497.1 859.3,490.9 863.9,490.6Z M909.9,470 903.7,472.8 903.3,468.3Z M860.3,482.7 855,486.9 853.5,482.6Z M855.7,470.5 858.7,476.6 854.1,477.1Z M893.5,473.7 888.5,478.3 886.7,474.1Z M908.7,463.3 903.5,467.7 901.9,463.4Z M831.3,469.5 834.2,475.6 829.7,476.1Z M826.9,466.1 829.3,472.5 824.7,472.6Z M824.1,496.6 822,490.1 826.6,490.3Z M877,494.5 875.5,487.8 880.1,488.4Z M892.5,491.2 891.1,484.6 895.7,485.2Z M805.1,485.6 809.8,480.7 811.9,484.8Z M849,467 851,473.4 846.4,473.3Z M897,486.8 895.1,480.3 899.7,480.5Z M825.4,496 822.6,489.8 827.2,489.5Z M874.2,469.6 876.2,476.1 871.6,475.9Z M897.7,458 900.8,464.1 896.2,464.6Z M912.6,479.6 905.8,479 907.7,474.8Z M858.4,466.7 860.3,473.2 855.8,472.9Z M914.5,461.4 910.4,466.9 907.9,463Z" fill="#00009c"/><path d="M834.9,492.4a1.8,1.8 0 1,0 3.6,0a1.8,1.8 0 1,0 -3.6,0 M882.6,489.9a1.8,1.8 0 1,0 3.6,0a1.8,1.8 0 1,0 -3.6,0 M811.1,480.4a1.8,1.8 0 1,0 3.6,0a1.8,1.8 0 1,0 -3.6,0 M892.1,453.4a1.8,1.8 0 1,0 3.6,0a1.8,1.8 0 1,0 -3.6,0 M856.3,489.9a1.8,1.8 0 1,0 3.6,0a1.8,1.8 0 1,0 -3.6,0 M867.9,461a1.8,1.8 0 1,0 3.6,0a1.8,1.8 0 1,0 -3.6,0 M849.1,489.3a1.8,1.8 0 1,0 3.6,0a1.8,1.8 0 1,0 -3.6,0 M825.5,474.9a1.8,1.8 0 1,0 3.6,0a1.8,1.8 0 1,0 -3.6,0 M885.6,443.5a1.8,1.8 0 1,0 3.6,0a1.8,1.8 0 1,0 -3.6,0 M850.9,478.5a1.8,1.8 0 1,0 3.6,0a1.8,1.8 0 1,0 -3.6,0 M891.6,484.5a1.8,1.8 0 1,0 3.6,0a1.8,1.8 0 1,0 -3.6,0 M825.8,444.2a1.8,1.8 0 1,0 3.6,0a1.8,1.8 0 1,0 -3.6,0 M890.9,482.2a1.8,1.8 0 1,0 3.6,0a1.8,1.8 0 1,0 -3.6,0 M824.2,446.5a1.8,1.8 0 1,0 3.6,0a1.8,1.8 0 1,0 -3.6,0 M838.8,458.3a1.8,1.8 0 1,0 3.6,0a1.8,1.8 0 1,0 -3.6,0" fill="#080890"/><path d="M588,938 L574.5,929" stroke="#ff4040" stroke-width="1.3"/><rect x="572" y="927" width="5" height="5" fill="#e00000"/><path d="M588,938 L589,909" stroke="#30e060" stroke-width="1.3"/><path d="M589.3,901 L586,910 L592.5,910Z" fill="#00c000"/><path d="M588,938 L613,935" stroke="#2030d0" stroke-width="1.3"/><path d="M622,934.5 L612,931 L613,938.5Z" fill="#001080"/><text x="577" y="924" font-family="Liberation Sans" font-weight="700" font-style="italic" font-size="16" fill="#ff1010">X</text><text x="593" y="903" font-family="Liberation Sans" font-weight="700" font-style="italic" font-size="16" fill="#10e010">Y</text><text x="617" y="930" font-family="Liberation Sans" font-weight="700" font-style="italic" font-size="16" fill="#1010e0">Z</text></svg></div>
<div id="rightbg"></div><div id="rightc">
  
  <!-- Geometry -->
  <div class="ibtn" style="left:1221px;top:55px"></div>
  <div class="bold t" style="left:1250px;top:59px">Geometry</div>
  <div class="tri" style="left:1413px;top:63px"></div>
  <div class="t" style="left:1250px;top:87px">Color</div>
  <div class="swatch" style="left:1302px;top:83px;background:linear-gradient(#f4f4f4,#e2e2e2)"></div>
  <div class="t" style="left:1250px;top:115px">Style</div>
  <div class="combo" style="left:1302px;top:111px;width:129px">edges</div>
  <div class="t" style="left:1250px;top:143px">Opacity</div>
  <div class="spin" style="left:1302px;top:140px;width:129px">1.00</div>
  <div class="chk" style="left:1250px;top:171px;"><span class="tick">✓</span></div>
  <div class="t" style="left:1269px;top:170px">Show normals</div>
  <div class="t r" style="left:1200px;top:197px;width:97px">Scale</div>
  <div class="inp" style="left:1302px;top:193px;width:129px;">0.01</div>
  <div class="t r" style="left:1200px;top:225px;width:97px">Color</div>
  <div class="swatch" style="left:1302px;top:221px;background:linear-gradient(#7878ff,#4a4af0);border-color:#3838b8"></div>
  <div class="t r" style="left:1200px;top:253px;width:97px">Count</div>
  <div class="inp" style="left:1302px;top:249px;width:129px;">10000</div>

  <!-- Background mesh -->
  <div id="ic-bg" style="position:absolute;left:1226px;top:296px"></div>
  <div class="bold t" style="left:1250px;top:296px">Background mesh</div>
  <div class="tri" style="left:1413px;top:300px"></div>
  <div class="t" style="left:1250px;top:324px">Color</div>
  <div class="swatch" style="left:1302px;top:320px;background:linear-gradient(#b8dcff,#8cc4f8);border-color:#5c8ec8"></div>
  <div class="t" style="left:1250px;top:352px">Style</div>
  <div class="combo" style="left:1302px;top:348px;width:129px">wire</div>
  <div class="t" style="left:1250px;top:380px">Opacity</div>
  <div class="spin" style="left:1302px;top:377px;width:129px">1.00</div>

  <!-- Boundary mesh -->
  <div id="ic-bnd" style="position:absolute;left:1226px;top:413px"></div>
  <div class="bold t" style="left:1250px;top:413px">Boundary mesh</div>
  <div class="tri" style="left:1413px;top:417px"></div>
  <div class="t dis" style="left:1250px;top:441px">Color by</div>
  <div class="combo dis" style="left:1305px;top:438px;width:126px">bc_id</div>
  <div class="t dis" style="left:1250px;top:469px">Style</div>
  <div class="combo dis" style="left:1305px;top:466px;width:126px">edges</div>
  <div class="t dis" style="left:1250px;top:497px">Opacity</div>
  <div class="spin dis" style="left:1305px;top:494px;width:126px">1.00</div>

  <!-- Mesh -->
  <div class="ibtn" style="left:1221px;top:526px"></div>
  <div class="bold t" style="left:1250px;top:530px">Mesh</div>
  <div class="tri" style="left:1413px;top:534px"></div>
  <div class="btn" style="left:1250px;top:554px;width:180px;">Reload</div>
  <div class="t" style="left:1250px;top:586px">Color by</div>
  <div class="combo dis" style="left:1317px;top:582px;width:114px"></div>
  <div class="t" style="left:1250px;top:615px">Color map</div>
  <div class="combo dis" style="left:1317px;top:611px;width:114px"><span class="cmap"></span>pinks</div>
  <div class="t" style="left:1250px;top:643px">Style</div>
  <div class="combo dis" style="left:1317px;top:639px;width:114px">solid</div>
  <div class="t" style="left:1250px;top:671px">Opacity</div>
  <div class="spin dis" style="left:1317px;top:668px;width:114px">1.00</div>

  <!-- Regions -->
  <div id="ic-reg" style="position:absolute;left:1226px;top:704px"></div>
  <div class="bold t" style="left:1250px;top:704px">Regions</div>
  <div class="tri" style="left:1413px;top:708px"></div>
  <div class="t" style="left:1250px;top:732px">Style</div>
  <div class="combo" style="left:1302px;top:728px;width:129px">solid</div>
  <div class="t" style="left:1250px;top:760px">Opacity</div>
  <div class="spin" style="left:1302px;top:757px;width:129px">0.50</div>

  <!-- Axes -->
  <div class="ibtn" style="left:1221px;top:789px"></div>
  <div class="bold t" style="left:1250px;top:793px">Axes</div>
  <div class="rline"></div>
</div>

<svg style="position:absolute;left:0;top:0;pointer-events:none" width="1433" height="986" viewBox="0 0 1433 986">
<!-- left geometry toolbar -->
<g fill="none" stroke="#000" stroke-linejoin="round">
  <path d="M14.8 240.8 L17.2 233.6 L24.8 235.4 L25.2 242.6 L19.8 244 Z M17.2 233.6 L19.8 244 M24.8 235.4 L15.5 240.5 M16.2 237.5 L25 239.8 M21.2 234.6 L19 243.5" stroke-width="1.0"/>
  <path d="M38.8 232.8 h11 v11 h-11 Z" stroke-width="1.4"/>
  <path d="M63.5 243.7 L71 236.2" stroke-width="1.6"/>
  <path d="M88 238.3 h9" stroke="#333" stroke-width="1.6"/>
  <path d="M112.3 244.3 V236 h9 v8.3 Z" stroke-width="1.4"/>
  <path d="M109.4 240.5 V231.8 h7.8" stroke-width="1.3"/>
</g>
<g fill="#000">
  <path d="M24.2 243.3 h6 l-3 3 Z" fill="#333"/>
  <path d="M48.2 243.3 h6 l-3 3 Z" fill="#333"/>
  <path d="M72 243.3 h6 l-3 3 Z" fill="#333"/>
  <path d="M38.8 232.8 h5.5 v3.5 L40 243.8 h-1.2 Z M44.3 236.3 L49.5 243.8 h-5.2 Z"/>
  <path d="M64.8 232.6 l1.3 1.3 l-1.3 1.3 l-1.3 -1.3Z M72.8 232.8 l1 1 l-1 1 l-1 -1Z M73.2 238.6 l1 1 l-1 1 l-1 -1Z"/>
</g>
<g fill="#555">
  <path d="M438.1 232.1 h7.6 v4 h4.1 v7.8 h-7.7 v-4 h-4 Z"/>
  <path d="M462.8 232.8 h6.8 v3.4 h3.6 v7 h-6.8 v-3.4 h-3.6 Z M464 234 v5 h2.4 v-2.8 h2.8 V234 Z M467.6 239.8 v2.2 h4.4 v-4.6 h-2.4 v2.4 Z"/>
  <path d="M486.1 232.1 h7.6 v4 h4.2 v7.8 h-7.8 v-4 h-4 Z M491.3 237.4 v5.3 h5.4 v-5.3 Z" fill-rule="evenodd"/>
</g>
<rect x="464" y="236" width="5.5" height="4" fill="#555"/>
<!-- tree row -->
<path d="M10 259 L15 263.5 L10 268 Z" fill="#0f2336"/>
<path d="M21.6 263.7 Q27.9 255.4 34.2 263.7 Q27.9 272 21.6 263.7 Z" fill="#000"/>
<circle cx="27.9" cy="263.7" r="2.3" fill="#64b1f0"/>
<circle cx="27.9" cy="263.7" r="1.2" fill="#000"/>
<path d="M43.2 258.2 H51.3 V262 H55 V269.5 H47 V265.4 H43.2 Z" fill="#13304a"/>

<!-- right panel icons -->
<path d="M1231 34.5 L1234.8 38 L1231 41.5" fill="none" stroke="#000" stroke-width="1.5"/>
<g fill="none" stroke="#000" stroke-linejoin="round">
  <path d="M1227.5 69 L1229.5 61.5 L1238.5 63 L1238.8 69.8 L1233 71.6 Z M1229.5 61.5 L1233 71.6 M1238.5 63 L1228 69 M1229 65.5 L1238.5 67.5 M1234 62 L1232.3 71" stroke-width="1.3"/>
</g>
<rect x="1226.5" y="296.4" width="13" height="13" rx="1.5" fill="#000"/>
<g fill="#fff">
  <rect x="1228" y="298" width="2.4" height="2.4"/><rect x="1232" y="298" width="2.4" height="2.4"/><rect x="1236" y="298" width="2.4" height="2.4"/>
  <rect x="1228" y="302" width="2.4" height="2.4"/><rect x="1232" y="302" width="2.4" height="2.4"/><rect x="1236" y="302" width="2.4" height="2.4"/>
  <rect x="1228" y="306" width="2.4" height="2.4"/><rect x="1232" y="306" width="2.4" height="2.4"/><rect x="1236" y="306" width="2.4" height="2.4"/>
</g>
<rect x="1227.8" y="414.5" width="11" height="11" fill="none" stroke="#4a4a4a" stroke-width="1.3"/>
<g fill="#666"><rect x="1232" y="417" width="2" height="1.2"/><rect x="1232" y="422" width="2" height="1.2"/><rect x="1230" y="419" width="1.2" height="2"/><rect x="1235" y="419" width="1.2" height="2"/><rect x="1232.6" y="419.4" width="1.2" height="1.4" fill="#999"/></g>
<g fill="none" stroke="#4e4e4e" stroke-width="1.4" stroke-linejoin="round">
  <path d="M1226.6 543.5 V533 L1229.5 530.3 H1239.4 V540.5 L1236.5 543.5 Z M1229.2 533.2 H1236.8 V540.8 H1229.2 Z M1226.8 533 L1229.2 533.2 M1236.8 533.2 L1239.4 530.3 M1236.8 540.8 L1239.4 540.5 M1229.2 540.8 L1226.8 543.3"/><path d="M1231.5 535 L1234.5 539 M1232 538.8 L1234.8 535.2" stroke-width="1"/>
</g>
<g fill="none" stroke="#000" stroke-width="1.5" stroke-linejoin="round">
  <path d="M1226.6 717.4 V707 L1229.5 704.3 H1239.4 V714.5 L1236.5 717.4 Z M1229.2 707.5 H1236.5 V714.8 H1229.2 Z M1226.8 707 L1229.2 707.5 M1236.5 707.5 L1239.4 704.3 M1236.5 714.8 L1239.4 714.5 M1229.2 714.8 L1226.8 717.2"/>
</g>
<g fill="none" stroke="#111" stroke-width="1.6" stroke-linecap="round">
  <path d="M1230.9 793.8 V803.3 H1239.6 M1230.9 803.3 L1226.6 806.4"/>
</g>
<!-- spinbox arrows -->
<g>
  <path d="M1419.2 147.6 L1423 144 L1426.8 147.6 Z M1419.2 384.6 L1423 381 L1426.8 384.6 Z M1419.2 764.6 L1423 761 L1426.8 764.6 Z" fill="#9c9c9c"/>
  <path d="M1419.2 153.2 L1423 156.8 L1426.8 153.2 Z M1419.2 390.2 L1423 393.8 L1426.8 390.2 Z M1419.2 770.2 L1423 773.8 L1426.8 770.2 Z" fill="#4a4a4a"/>
  <path d="M1419.5 507 L1423 510.5 L1426.5 507 Z M1419.5 681 L1423 684.5 L1426.5 681 Z" fill="#d6d6d6"/>
</g>
</svg>

<div id="rborder"></div>
</body></html>
